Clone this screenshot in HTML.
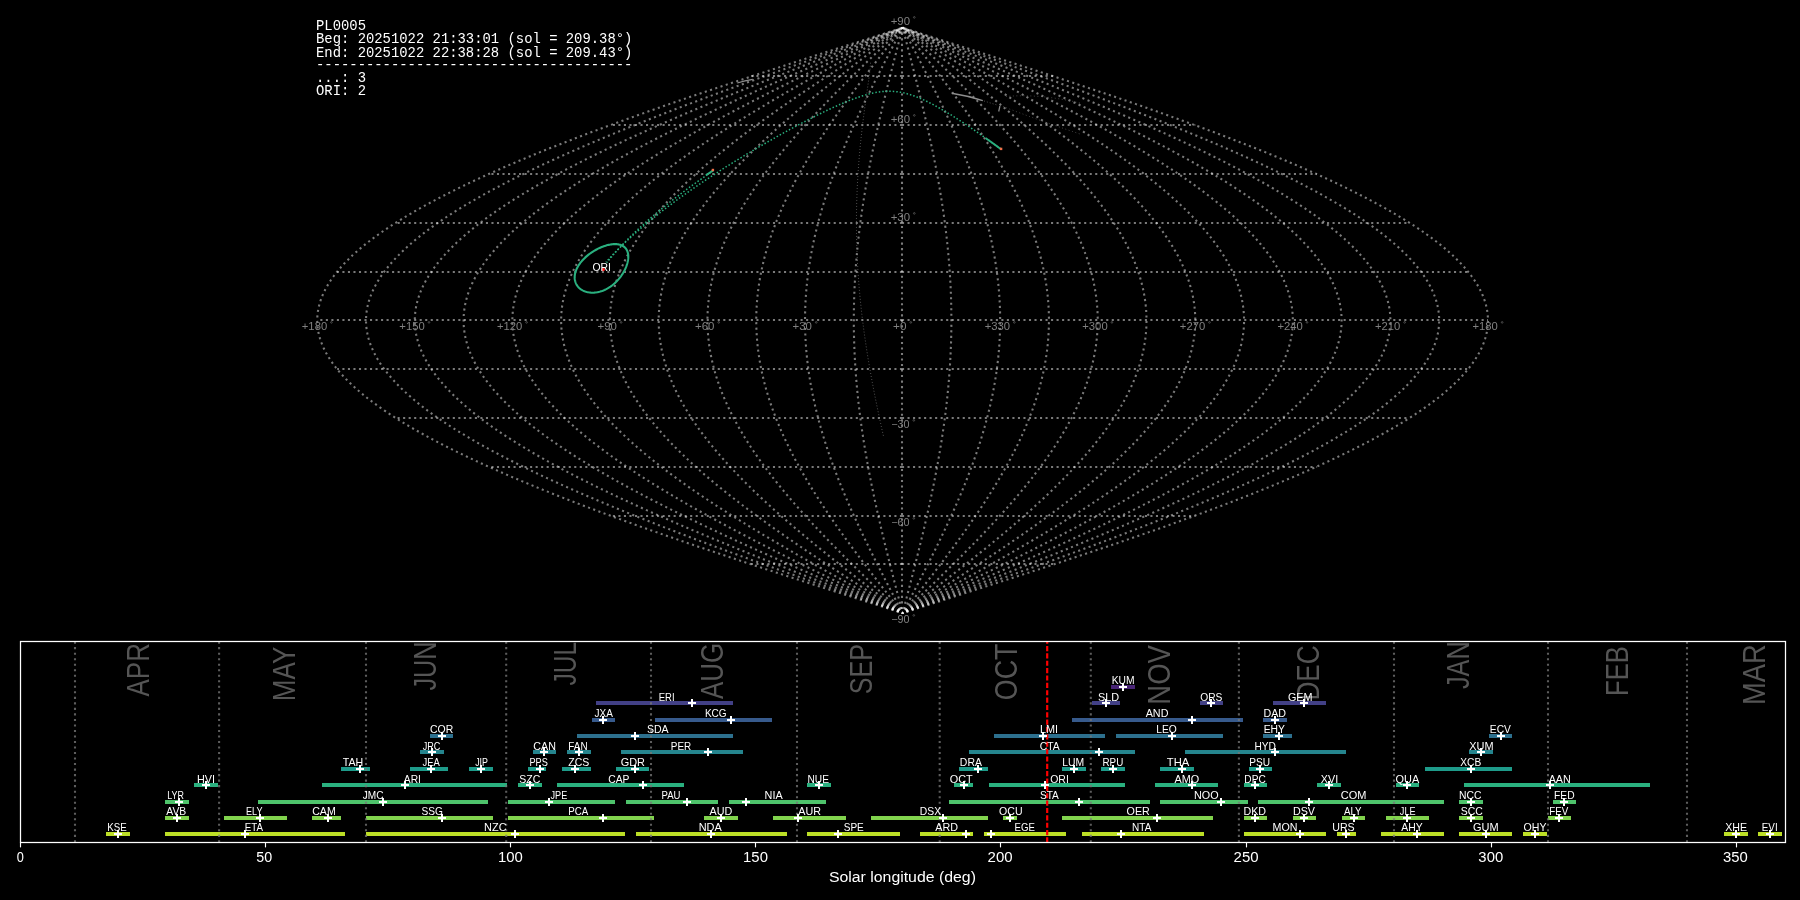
<!DOCTYPE html>
<html><head><meta charset="utf-8"><title>PL0005</title>
<style>html,body{margin:0;padding:0;background:#000;overflow:hidden;width:1800px;height:900px;font-family:"Liberation Sans",sans-serif}svg{display:block;will-change:transform}</style>
</head><body><svg width="1800" height="900" viewBox="0 0 1800 900"><rect width="1800" height="900" fill="#000000"/><g fill="none" stroke="#ffffff" stroke-opacity="0.48" stroke-dasharray="2.08 3.44" stroke-width="2.08" stroke-linecap="butt"><path stroke-dashoffset="1.4" d="M902.60,613.08 L907.71,611.45 L912.82,609.83 L917.92,608.20 L923.03,606.58 L928.13,604.95 L933.24,603.32 L938.34,601.70 L943.43,600.07 L948.53,598.45 L953.62,596.82 L958.70,595.19 L963.79,593.57 L968.86,591.94 L973.94,590.32 L979.00,588.69 L984.07,587.06 L989.12,585.44 L994.17,583.81 L999.21,582.19 L1004.25,580.56 L1009.27,578.93 L1014.29,577.31 L1019.30,575.68 L1024.30,574.06 L1029.30,572.43 L1034.28,570.80 L1039.25,569.18 L1044.21,567.55 L1049.16,565.93 L1054.10,564.30 L1059.03,562.67 L1063.95,561.05 L1068.85,559.42 L1073.74,557.80 L1078.62,556.17 L1083.49,554.54 L1088.34,552.92 L1093.17,551.29 L1098.00,549.67 L1102.80,548.04 L1107.60,546.41 L1112.37,544.79 L1117.14,543.16 L1121.88,541.54 L1126.61,539.91 L1131.32,538.28 L1136.01,536.66 L1140.69,535.03 L1145.34,533.41 L1149.98,531.78 L1154.60,530.15 L1159.20,528.53 L1163.79,526.90 L1168.35,525.28 L1172.89,523.65 L1177.41,522.02 L1181.91,520.40 L1186.39,518.77 L1190.85,517.15 L1195.28,515.52 L1199.69,513.89 L1204.08,512.27 L1208.45,510.64 L1212.79,509.02 L1217.11,507.39 L1221.41,505.76 L1225.68,504.14 L1229.93,502.51 L1234.15,500.89 L1238.35,499.26 L1242.52,497.63 L1246.67,496.01 L1250.79,494.38 L1254.88,492.76 L1258.94,491.13 L1262.98,489.50 L1267.00,487.88 L1270.98,486.25 L1274.93,484.63 L1278.86,483.00 L1282.76,481.37 L1286.63,479.75 L1290.47,478.12 L1294.28,476.50 L1298.06,474.87 L1301.81,473.24 L1305.54,471.62 L1309.23,469.99 L1312.88,468.37 L1316.51,466.74 L1320.11,465.11 L1323.67,463.49 L1327.21,461.86 L1330.71,460.24 L1334.17,458.61 L1337.61,456.98 L1341.01,455.36 L1344.38,453.73 L1347.71,452.11 L1351.01,450.48 L1354.28,448.85 L1357.51,447.23 L1360.71,445.60 L1363.87,443.98 L1367.00,442.35 L1370.09,440.72 L1373.15,439.10 L1376.17,437.47 L1379.15,435.85 L1382.10,434.22 L1385.01,432.59 L1387.89,430.97 L1390.72,429.34 L1393.52,427.72 L1396.29,426.09 L1399.01,424.46 L1401.70,422.84 L1404.35,421.21 L1406.96,419.59 L1409.54,417.96 L1412.07,416.33 L1414.57,414.71 L1417.02,413.08 L1419.44,411.46 L1421.82,409.83 L1424.16,408.20 L1426.46,406.58 L1428.72,404.95 L1430.94,403.33 L1433.12,401.70 L1435.25,400.07 L1437.35,398.45 L1439.41,396.82 L1441.43,395.20 L1443.40,393.57 L1445.34,391.94 L1447.23,390.32 L1449.08,388.69 L1450.89,387.07 L1452.66,385.44 L1454.38,383.81 L1456.07,382.19 L1457.71,380.56 L1459.31,378.94 L1460.87,377.31 L1462.38,375.68 L1463.85,374.06 L1465.28,372.43 L1466.67,370.81 L1468.01,369.18 L1469.31,367.55 L1470.57,365.93 L1471.79,364.30 L1472.96,362.68 L1474.08,361.05 L1475.17,359.42 L1476.21,357.80 L1477.21,356.17 L1478.16,354.55 L1479.07,352.92 L1479.93,351.29 L1480.75,349.67 L1481.53,348.04 L1482.26,346.42 L1482.95,344.79 L1483.60,343.16 L1484.20,341.54 L1484.75,339.91 L1485.27,338.29 L1485.73,336.66 L1486.16,335.03 L1486.53,333.41 L1486.87,331.78 L1487.16,330.16 L1487.40,328.53 L1487.60,326.90 L1487.76,325.28 L1487.87,323.65 L1487.94,322.03 L1487.96,320.40 L1487.94,318.77 L1487.87,317.15 L1487.76,315.52 L1487.60,313.90 L1487.40,312.27 L1487.16,310.64 L1486.87,309.02 L1486.53,307.39 L1486.16,305.77 L1485.73,304.14 L1485.27,302.51 L1484.75,300.89 L1484.20,299.26 L1483.60,297.64 L1482.95,296.01 L1482.26,294.38 L1481.53,292.76 L1480.75,291.13 L1479.93,289.51 L1479.07,287.88 L1478.16,286.25 L1477.21,284.63 L1476.21,283.00 L1475.17,281.38 L1474.08,279.75 L1472.96,278.12 L1471.79,276.50 L1470.57,274.87 L1469.31,273.25 L1468.01,271.62 L1466.67,269.99 L1465.28,268.37 L1463.85,266.74 L1462.38,265.12 L1460.87,263.49 L1459.31,261.86 L1457.71,260.24 L1456.07,258.61 L1454.38,256.99 L1452.66,255.36 L1450.89,253.73 L1449.08,252.11 L1447.23,250.48 L1445.34,248.86 L1443.40,247.23 L1441.43,245.60 L1439.41,243.98 L1437.35,242.35 L1435.25,240.73 L1433.12,239.10 L1430.94,237.47 L1428.72,235.85 L1426.46,234.22 L1424.16,232.60 L1421.82,230.97 L1419.44,229.34 L1417.02,227.72 L1414.57,226.09 L1412.07,224.47 L1409.54,222.84 L1406.96,221.21 L1404.35,219.59 L1401.70,217.96 L1399.01,216.34 L1396.29,214.71 L1393.52,213.08 L1390.72,211.46 L1387.89,209.83 L1385.01,208.21 L1382.10,206.58 L1379.15,204.95 L1376.17,203.33 L1373.15,201.70 L1370.09,200.08 L1367.00,198.45 L1363.87,196.82 L1360.71,195.20 L1357.51,193.57 L1354.28,191.95 L1351.01,190.32 L1347.71,188.69 L1344.38,187.07 L1341.01,185.44 L1337.61,183.82 L1334.17,182.19 L1330.71,180.56 L1327.21,178.94 L1323.67,177.31 L1320.11,175.69 L1316.51,174.06 L1312.88,172.43 L1309.23,170.81 L1305.54,169.18 L1301.81,167.56 L1298.06,165.93 L1294.28,164.30 L1290.47,162.68 L1286.63,161.05 L1282.76,159.43 L1278.86,157.80 L1274.93,156.17 L1270.98,154.55 L1267.00,152.92 L1262.98,151.30 L1258.94,149.67 L1254.88,148.04 L1250.79,146.42 L1246.67,144.79 L1242.52,143.17 L1238.35,141.54 L1234.15,139.91 L1229.93,138.29 L1225.68,136.66 L1221.41,135.04 L1217.11,133.41 L1212.79,131.78 L1208.45,130.16 L1204.08,128.53 L1199.69,126.91 L1195.28,125.28 L1190.85,123.65 L1186.39,122.03 L1181.91,120.40 L1177.41,118.78 L1172.89,117.15 L1168.35,115.52 L1163.79,113.90 L1159.20,112.27 L1154.60,110.65 L1149.98,109.02 L1145.34,107.39 L1140.69,105.77 L1136.01,104.14 L1131.32,102.52 L1126.61,100.89 L1121.88,99.26 L1117.14,97.64 L1112.37,96.01 L1107.60,94.39 L1102.80,92.76 L1098.00,91.13 L1093.17,89.51 L1088.34,87.88 L1083.49,86.26 L1078.62,84.63 L1073.74,83.00 L1068.85,81.38 L1063.95,79.75 L1059.03,78.13 L1054.10,76.50 L1049.16,74.87 L1044.21,73.25 L1039.25,71.62 L1034.28,70.00 L1029.30,68.37 L1024.30,66.74 L1019.30,65.12 L1014.29,63.49 L1009.27,61.87 L1004.25,60.24 L999.21,58.61 L994.17,56.99 L989.12,55.36 L984.07,53.74 L979.00,52.11 L973.94,50.48 L968.86,48.86 L963.79,47.23 L958.70,45.61 L953.62,43.98 L948.53,42.35 L943.43,40.73 L938.34,39.10 L933.24,37.48 L928.13,35.85 L923.03,34.22 L917.92,32.60 L912.82,30.97 L907.71,29.35 L902.60,27.72"/><path stroke-dashoffset="1.4" d="M902.60,613.08 L907.28,611.45 L911.96,609.83 L916.65,608.20 L921.33,606.58 L926.01,604.95 L930.68,603.32 L935.36,601.70 L940.03,600.07 L944.70,598.45 L949.37,596.82 L954.03,595.19 L958.69,593.57 L963.34,591.94 L967.99,590.32 L972.64,588.69 L977.28,587.06 L981.91,585.44 L986.54,583.81 L991.16,582.19 L995.78,580.56 L1000.38,578.93 L1004.98,577.31 L1009.58,575.68 L1014.16,574.06 L1018.74,572.43 L1023.30,570.80 L1027.86,569.18 L1032.41,567.55 L1036.95,565.93 L1041.48,564.30 L1045.99,562.67 L1050.50,561.05 L1055.00,559.42 L1059.48,557.80 L1063.95,556.17 L1068.41,554.54 L1072.86,552.92 L1077.29,551.29 L1081.71,549.67 L1086.12,548.04 L1090.51,546.41 L1094.89,544.79 L1099.26,543.16 L1103.61,541.54 L1107.94,539.91 L1112.26,538.28 L1116.56,536.66 L1120.85,535.03 L1125.12,533.41 L1129.37,531.78 L1133.60,530.15 L1137.82,528.53 L1142.02,526.90 L1146.20,525.28 L1150.37,523.65 L1154.51,522.02 L1158.63,520.40 L1162.74,518.77 L1166.82,517.15 L1170.89,515.52 L1174.93,513.89 L1178.96,512.27 L1182.96,510.64 L1186.94,509.02 L1190.90,507.39 L1194.84,505.76 L1198.76,504.14 L1202.65,502.51 L1206.52,500.89 L1210.37,499.26 L1214.19,497.63 L1217.99,496.01 L1221.77,494.38 L1225.52,492.76 L1229.25,491.13 L1232.95,489.50 L1236.63,487.88 L1240.28,486.25 L1243.91,484.63 L1247.51,483.00 L1251.08,481.37 L1254.63,479.75 L1258.15,478.12 L1261.64,476.50 L1265.11,474.87 L1268.55,473.24 L1271.96,471.62 L1275.34,469.99 L1278.69,468.37 L1282.02,466.74 L1285.32,465.11 L1288.58,463.49 L1291.82,461.86 L1295.03,460.24 L1298.21,458.61 L1301.36,456.98 L1304.47,455.36 L1307.56,453.73 L1310.62,452.11 L1313.64,450.48 L1316.64,448.85 L1319.60,447.23 L1322.53,445.60 L1325.43,443.98 L1328.30,442.35 L1331.13,440.72 L1333.93,439.10 L1336.70,437.47 L1339.44,435.85 L1342.14,434.22 L1344.81,432.59 L1347.44,430.97 L1350.05,429.34 L1352.61,427.72 L1355.15,426.09 L1357.65,424.46 L1360.11,422.84 L1362.54,421.21 L1364.93,419.59 L1367.29,417.96 L1369.62,416.33 L1371.90,414.71 L1374.16,413.08 L1376.37,411.46 L1378.55,409.83 L1380.70,408.20 L1382.80,406.58 L1384.87,404.95 L1386.91,403.33 L1388.91,401.70 L1390.87,400.07 L1392.79,398.45 L1394.68,396.82 L1396.52,395.20 L1398.34,393.57 L1400.11,391.94 L1401.84,390.32 L1403.54,388.69 L1405.20,387.07 L1406.82,385.44 L1408.40,383.81 L1409.95,382.19 L1411.45,380.56 L1412.92,378.94 L1414.35,377.31 L1415.73,375.68 L1417.08,374.06 L1418.39,372.43 L1419.66,370.81 L1420.90,369.18 L1422.09,367.55 L1423.24,365.93 L1424.35,364.30 L1425.43,362.68 L1426.46,361.05 L1427.45,359.42 L1428.41,357.80 L1429.32,356.17 L1430.19,354.55 L1431.03,352.92 L1431.82,351.29 L1432.57,349.67 L1433.29,348.04 L1433.96,346.42 L1434.59,344.79 L1435.18,343.16 L1435.73,341.54 L1436.24,339.91 L1436.71,338.29 L1437.14,336.66 L1437.53,335.03 L1437.87,333.41 L1438.18,331.78 L1438.44,330.16 L1438.67,328.53 L1438.85,326.90 L1439.00,325.28 L1439.10,323.65 L1439.16,322.03 L1439.18,320.40 L1439.16,318.77 L1439.10,317.15 L1439.00,315.52 L1438.85,313.90 L1438.67,312.27 L1438.44,310.64 L1438.18,309.02 L1437.87,307.39 L1437.53,305.77 L1437.14,304.14 L1436.71,302.51 L1436.24,300.89 L1435.73,299.26 L1435.18,297.64 L1434.59,296.01 L1433.96,294.38 L1433.29,292.76 L1432.57,291.13 L1431.82,289.51 L1431.03,287.88 L1430.19,286.25 L1429.32,284.63 L1428.41,283.00 L1427.45,281.38 L1426.46,279.75 L1425.43,278.12 L1424.35,276.50 L1423.24,274.87 L1422.09,273.25 L1420.90,271.62 L1419.66,269.99 L1418.39,268.37 L1417.08,266.74 L1415.73,265.12 L1414.35,263.49 L1412.92,261.86 L1411.45,260.24 L1409.95,258.61 L1408.40,256.99 L1406.82,255.36 L1405.20,253.73 L1403.54,252.11 L1401.84,250.48 L1400.11,248.86 L1398.34,247.23 L1396.52,245.60 L1394.68,243.98 L1392.79,242.35 L1390.87,240.73 L1388.91,239.10 L1386.91,237.47 L1384.87,235.85 L1382.80,234.22 L1380.70,232.60 L1378.55,230.97 L1376.37,229.34 L1374.16,227.72 L1371.90,226.09 L1369.62,224.47 L1367.29,222.84 L1364.93,221.21 L1362.54,219.59 L1360.11,217.96 L1357.65,216.34 L1355.15,214.71 L1352.61,213.08 L1350.05,211.46 L1347.44,209.83 L1344.81,208.21 L1342.14,206.58 L1339.44,204.95 L1336.70,203.33 L1333.93,201.70 L1331.13,200.08 L1328.30,198.45 L1325.43,196.82 L1322.53,195.20 L1319.60,193.57 L1316.64,191.95 L1313.64,190.32 L1310.62,188.69 L1307.56,187.07 L1304.47,185.44 L1301.36,183.82 L1298.21,182.19 L1295.03,180.56 L1291.82,178.94 L1288.58,177.31 L1285.32,175.69 L1282.02,174.06 L1278.69,172.43 L1275.34,170.81 L1271.96,169.18 L1268.55,167.56 L1265.11,165.93 L1261.64,164.30 L1258.15,162.68 L1254.63,161.05 L1251.08,159.43 L1247.51,157.80 L1243.91,156.17 L1240.28,154.55 L1236.63,152.92 L1232.95,151.30 L1229.25,149.67 L1225.52,148.04 L1221.77,146.42 L1217.99,144.79 L1214.19,143.17 L1210.37,141.54 L1206.52,139.91 L1202.65,138.29 L1198.76,136.66 L1194.84,135.04 L1190.90,133.41 L1186.94,131.78 L1182.96,130.16 L1178.96,128.53 L1174.93,126.91 L1170.89,125.28 L1166.82,123.65 L1162.74,122.03 L1158.63,120.40 L1154.51,118.78 L1150.37,117.15 L1146.20,115.52 L1142.02,113.90 L1137.82,112.27 L1133.60,110.65 L1129.37,109.02 L1125.12,107.39 L1120.85,105.77 L1116.56,104.14 L1112.26,102.52 L1107.94,100.89 L1103.61,99.26 L1099.26,97.64 L1094.89,96.01 L1090.51,94.39 L1086.12,92.76 L1081.71,91.13 L1077.29,89.51 L1072.86,87.88 L1068.41,86.26 L1063.95,84.63 L1059.48,83.00 L1055.00,81.38 L1050.50,79.75 L1045.99,78.13 L1041.48,76.50 L1036.95,74.87 L1032.41,73.25 L1027.86,71.62 L1023.30,70.00 L1018.74,68.37 L1014.16,66.74 L1009.58,65.12 L1004.98,63.49 L1000.38,61.87 L995.78,60.24 L991.16,58.61 L986.54,56.99 L981.91,55.36 L977.28,53.74 L972.64,52.11 L967.99,50.48 L963.34,48.86 L958.69,47.23 L954.03,45.61 L949.37,43.98 L944.70,42.35 L940.03,40.73 L935.36,39.10 L930.68,37.48 L926.01,35.85 L921.33,34.22 L916.65,32.60 L911.96,30.97 L907.28,29.35 L902.60,27.72"/><path stroke-dashoffset="1.4" d="M902.60,613.08 L906.86,611.45 L911.11,609.83 L915.37,608.20 L919.62,606.58 L923.88,604.95 L928.13,603.32 L932.38,601.70 L936.63,600.07 L940.87,598.45 L945.11,596.82 L949.35,595.19 L953.59,593.57 L957.82,591.94 L962.05,590.32 L966.27,588.69 L970.49,587.06 L974.70,585.44 L978.91,583.81 L983.11,582.19 L987.31,580.56 L991.49,578.93 L995.68,577.31 L999.85,575.68 L1004.02,574.06 L1008.18,572.43 L1012.33,570.80 L1016.47,569.18 L1020.61,567.55 L1024.74,565.93 L1028.85,564.30 L1032.96,562.67 L1037.06,561.05 L1041.14,559.42 L1045.22,557.80 L1049.28,556.17 L1053.34,554.54 L1057.38,552.92 L1061.41,551.29 L1065.43,549.67 L1069.44,548.04 L1073.43,546.41 L1077.41,544.79 L1081.38,543.16 L1085.33,541.54 L1089.27,539.91 L1093.20,538.28 L1097.11,536.66 L1101.01,535.03 L1104.89,533.41 L1108.75,531.78 L1112.60,530.15 L1116.44,528.53 L1120.26,526.90 L1124.06,525.28 L1127.84,523.65 L1131.61,522.02 L1135.36,520.40 L1139.09,518.77 L1142.80,517.15 L1146.50,515.52 L1150.18,513.89 L1153.84,512.27 L1157.47,510.64 L1161.09,509.02 L1164.69,507.39 L1168.27,505.76 L1171.83,504.14 L1175.37,502.51 L1178.89,500.89 L1182.39,499.26 L1185.87,497.63 L1189.32,496.01 L1192.75,494.38 L1196.17,492.76 L1199.55,491.13 L1202.92,489.50 L1206.26,487.88 L1209.58,486.25 L1212.88,484.63 L1216.15,483.00 L1219.40,481.37 L1222.63,479.75 L1225.83,478.12 L1229.00,476.50 L1232.15,474.87 L1235.28,473.24 L1238.38,471.62 L1241.45,469.99 L1244.50,468.37 L1247.53,466.74 L1250.52,465.11 L1253.49,463.49 L1256.44,461.86 L1259.35,460.24 L1262.24,458.61 L1265.11,456.98 L1267.94,455.36 L1270.75,453.73 L1273.53,452.11 L1276.28,450.48 L1279.00,448.85 L1281.69,447.23 L1284.36,445.60 L1286.99,443.98 L1289.60,442.35 L1292.17,440.72 L1294.72,439.10 L1297.24,437.47 L1299.73,435.85 L1302.18,434.22 L1304.61,432.59 L1307.00,430.97 L1309.37,429.34 L1311.70,427.72 L1314.01,426.09 L1316.28,424.46 L1318.52,422.84 L1320.73,421.21 L1322.90,419.59 L1325.05,417.96 L1327.16,416.33 L1329.24,414.71 L1331.29,413.08 L1333.30,411.46 L1335.28,409.83 L1337.23,408.20 L1339.15,406.58 L1341.03,404.95 L1342.88,403.33 L1344.70,401.70 L1346.48,400.07 L1348.23,398.45 L1349.94,396.82 L1351.62,395.20 L1353.27,393.57 L1354.88,391.94 L1356.46,390.32 L1358.00,388.69 L1359.51,387.07 L1360.98,385.44 L1362.42,383.81 L1363.82,382.19 L1365.19,380.56 L1366.53,378.94 L1367.82,377.31 L1369.09,375.68 L1370.31,374.06 L1371.50,372.43 L1372.66,370.81 L1373.78,369.18 L1374.86,367.55 L1375.91,365.93 L1376.92,364.30 L1377.90,362.68 L1378.84,361.05 L1379.74,359.42 L1380.61,357.80 L1381.44,356.17 L1382.23,354.55 L1382.99,352.92 L1383.71,351.29 L1384.39,349.67 L1385.04,348.04 L1385.65,346.42 L1386.23,344.79 L1386.76,343.16 L1387.26,341.54 L1387.73,339.91 L1388.15,338.29 L1388.54,336.66 L1388.90,335.03 L1389.21,333.41 L1389.49,331.78 L1389.73,330.16 L1389.94,328.53 L1390.10,326.90 L1390.23,325.28 L1390.33,323.65 L1390.38,322.03 L1390.40,320.40 L1390.38,318.77 L1390.33,317.15 L1390.23,315.52 L1390.10,313.90 L1389.94,312.27 L1389.73,310.64 L1389.49,309.02 L1389.21,307.39 L1388.90,305.77 L1388.54,304.14 L1388.15,302.51 L1387.73,300.89 L1387.26,299.26 L1386.76,297.64 L1386.23,296.01 L1385.65,294.38 L1385.04,292.76 L1384.39,291.13 L1383.71,289.51 L1382.99,287.88 L1382.23,286.25 L1381.44,284.63 L1380.61,283.00 L1379.74,281.38 L1378.84,279.75 L1377.90,278.12 L1376.92,276.50 L1375.91,274.87 L1374.86,273.25 L1373.78,271.62 L1372.66,269.99 L1371.50,268.37 L1370.31,266.74 L1369.09,265.12 L1367.82,263.49 L1366.53,261.86 L1365.19,260.24 L1363.82,258.61 L1362.42,256.99 L1360.98,255.36 L1359.51,253.73 L1358.00,252.11 L1356.46,250.48 L1354.88,248.86 L1353.27,247.23 L1351.62,245.60 L1349.94,243.98 L1348.23,242.35 L1346.48,240.73 L1344.70,239.10 L1342.88,237.47 L1341.03,235.85 L1339.15,234.22 L1337.23,232.60 L1335.28,230.97 L1333.30,229.34 L1331.29,227.72 L1329.24,226.09 L1327.16,224.47 L1325.05,222.84 L1322.90,221.21 L1320.73,219.59 L1318.52,217.96 L1316.28,216.34 L1314.01,214.71 L1311.70,213.08 L1309.37,211.46 L1307.00,209.83 L1304.61,208.21 L1302.18,206.58 L1299.73,204.95 L1297.24,203.33 L1294.72,201.70 L1292.17,200.08 L1289.60,198.45 L1286.99,196.82 L1284.36,195.20 L1281.69,193.57 L1279.00,191.95 L1276.28,190.32 L1273.53,188.69 L1270.75,187.07 L1267.94,185.44 L1265.11,183.82 L1262.24,182.19 L1259.35,180.56 L1256.44,178.94 L1253.49,177.31 L1250.52,175.69 L1247.53,174.06 L1244.50,172.43 L1241.45,170.81 L1238.38,169.18 L1235.28,167.56 L1232.15,165.93 L1229.00,164.30 L1225.83,162.68 L1222.63,161.05 L1219.40,159.43 L1216.15,157.80 L1212.88,156.17 L1209.58,154.55 L1206.26,152.92 L1202.92,151.30 L1199.55,149.67 L1196.17,148.04 L1192.75,146.42 L1189.32,144.79 L1185.87,143.17 L1182.39,141.54 L1178.89,139.91 L1175.37,138.29 L1171.83,136.66 L1168.27,135.04 L1164.69,133.41 L1161.09,131.78 L1157.47,130.16 L1153.84,128.53 L1150.18,126.91 L1146.50,125.28 L1142.80,123.65 L1139.09,122.03 L1135.36,120.40 L1131.61,118.78 L1127.84,117.15 L1124.06,115.52 L1120.26,113.90 L1116.44,112.27 L1112.60,110.65 L1108.75,109.02 L1104.89,107.39 L1101.01,105.77 L1097.11,104.14 L1093.20,102.52 L1089.27,100.89 L1085.33,99.26 L1081.38,97.64 L1077.41,96.01 L1073.43,94.39 L1069.44,92.76 L1065.43,91.13 L1061.41,89.51 L1057.38,87.88 L1053.34,86.26 L1049.28,84.63 L1045.22,83.00 L1041.14,81.38 L1037.06,79.75 L1032.96,78.13 L1028.85,76.50 L1024.74,74.87 L1020.61,73.25 L1016.47,71.62 L1012.33,70.00 L1008.18,68.37 L1004.02,66.74 L999.85,65.12 L995.68,63.49 L991.49,61.87 L987.31,60.24 L983.11,58.61 L978.91,56.99 L974.70,55.36 L970.49,53.74 L966.27,52.11 L962.05,50.48 L957.82,48.86 L953.59,47.23 L949.35,45.61 L945.11,43.98 L940.87,42.35 L936.63,40.73 L932.38,39.10 L928.13,37.48 L923.88,35.85 L919.62,34.22 L915.37,32.60 L911.11,30.97 L906.86,29.35 L902.60,27.72"/><path stroke-dashoffset="1.4" d="M902.60,613.08 L906.43,611.45 L910.26,609.83 L914.09,608.20 L917.92,606.58 L921.75,604.95 L925.58,603.32 L929.40,601.70 L933.22,600.07 L937.05,598.45 L940.86,596.82 L944.68,595.19 L948.49,593.57 L952.30,591.94 L956.10,590.32 L959.90,588.69 L963.70,587.06 L967.49,585.44 L971.28,583.81 L975.06,582.19 L978.84,580.56 L982.61,578.93 L986.37,577.31 L990.13,575.68 L993.88,574.06 L997.62,572.43 L1001.36,570.80 L1005.09,569.18 L1008.81,567.55 L1012.52,565.93 L1016.23,564.30 L1019.92,562.67 L1023.61,561.05 L1027.29,559.42 L1030.96,557.80 L1034.62,556.17 L1038.26,554.54 L1041.90,552.92 L1045.53,551.29 L1049.15,549.67 L1052.75,548.04 L1056.35,546.41 L1059.93,544.79 L1063.50,543.16 L1067.06,541.54 L1070.61,539.91 L1074.14,538.28 L1077.66,536.66 L1081.17,535.03 L1084.66,533.41 L1088.14,531.78 L1091.60,530.15 L1095.05,528.53 L1098.49,526.90 L1101.91,525.28 L1105.32,523.65 L1108.71,522.02 L1112.08,520.40 L1115.44,518.77 L1118.78,517.15 L1122.11,515.52 L1125.42,513.89 L1128.71,512.27 L1131.99,510.64 L1135.25,509.02 L1138.49,507.39 L1141.71,505.76 L1144.91,504.14 L1148.10,502.51 L1151.26,500.89 L1154.41,499.26 L1157.54,497.63 L1160.65,496.01 L1163.74,494.38 L1166.81,492.76 L1169.86,491.13 L1172.89,489.50 L1175.90,487.88 L1178.88,486.25 L1181.85,484.63 L1184.80,483.00 L1187.72,481.37 L1190.62,479.75 L1193.50,478.12 L1196.36,476.50 L1199.20,474.87 L1202.01,473.24 L1204.80,471.62 L1207.57,469.99 L1210.31,468.37 L1213.03,466.74 L1215.73,465.11 L1218.40,463.49 L1221.05,461.86 L1223.68,460.24 L1226.28,458.61 L1228.86,456.98 L1231.41,455.36 L1233.93,453.73 L1236.43,452.11 L1238.91,450.48 L1241.36,448.85 L1243.78,447.23 L1246.18,445.60 L1248.55,443.98 L1250.90,442.35 L1253.22,440.72 L1255.51,439.10 L1257.77,437.47 L1260.01,435.85 L1262.22,434.22 L1264.41,432.59 L1266.56,430.97 L1268.69,429.34 L1270.79,427.72 L1272.87,426.09 L1274.91,424.46 L1276.93,422.84 L1278.91,421.21 L1280.87,419.59 L1282.80,417.96 L1284.70,416.33 L1286.58,414.71 L1288.42,413.08 L1290.23,411.46 L1292.02,409.83 L1293.77,408.20 L1295.49,406.58 L1297.19,404.95 L1298.85,403.33 L1300.49,401.70 L1302.09,400.07 L1303.66,398.45 L1305.21,396.82 L1306.72,395.20 L1308.20,393.57 L1309.65,391.94 L1311.07,390.32 L1312.46,388.69 L1313.82,387.07 L1315.14,385.44 L1316.44,383.81 L1317.70,382.19 L1318.93,380.56 L1320.13,378.94 L1321.30,377.31 L1322.44,375.68 L1323.54,374.06 L1324.61,372.43 L1325.65,370.81 L1326.66,369.18 L1327.64,367.55 L1328.58,365.93 L1329.49,364.30 L1330.37,362.68 L1331.21,361.05 L1332.03,359.42 L1332.81,357.80 L1333.55,356.17 L1334.27,354.55 L1334.95,352.92 L1335.60,351.29 L1336.21,349.67 L1336.80,348.04 L1337.35,346.42 L1337.86,344.79 L1338.35,343.16 L1338.80,341.54 L1339.22,339.91 L1339.60,338.29 L1339.95,336.66 L1340.27,335.03 L1340.55,333.41 L1340.80,331.78 L1341.02,330.16 L1341.20,328.53 L1341.35,326.90 L1341.47,325.28 L1341.55,323.65 L1341.60,322.03 L1341.62,320.40 L1341.60,318.77 L1341.55,317.15 L1341.47,315.52 L1341.35,313.90 L1341.20,312.27 L1341.02,310.64 L1340.80,309.02 L1340.55,307.39 L1340.27,305.77 L1339.95,304.14 L1339.60,302.51 L1339.22,300.89 L1338.80,299.26 L1338.35,297.64 L1337.86,296.01 L1337.35,294.38 L1336.80,292.76 L1336.21,291.13 L1335.60,289.51 L1334.95,287.88 L1334.27,286.25 L1333.55,284.63 L1332.81,283.00 L1332.03,281.38 L1331.21,279.75 L1330.37,278.12 L1329.49,276.50 L1328.58,274.87 L1327.64,273.25 L1326.66,271.62 L1325.65,269.99 L1324.61,268.37 L1323.54,266.74 L1322.44,265.12 L1321.30,263.49 L1320.13,261.86 L1318.93,260.24 L1317.70,258.61 L1316.44,256.99 L1315.14,255.36 L1313.82,253.73 L1312.46,252.11 L1311.07,250.48 L1309.65,248.86 L1308.20,247.23 L1306.72,245.60 L1305.21,243.98 L1303.66,242.35 L1302.09,240.73 L1300.49,239.10 L1298.85,237.47 L1297.19,235.85 L1295.49,234.22 L1293.77,232.60 L1292.02,230.97 L1290.23,229.34 L1288.42,227.72 L1286.58,226.09 L1284.70,224.47 L1282.80,222.84 L1280.87,221.21 L1278.91,219.59 L1276.93,217.96 L1274.91,216.34 L1272.87,214.71 L1270.79,213.08 L1268.69,211.46 L1266.56,209.83 L1264.41,208.21 L1262.22,206.58 L1260.01,204.95 L1257.77,203.33 L1255.51,201.70 L1253.22,200.08 L1250.90,198.45 L1248.55,196.82 L1246.18,195.20 L1243.78,193.57 L1241.36,191.95 L1238.91,190.32 L1236.43,188.69 L1233.93,187.07 L1231.41,185.44 L1228.86,183.82 L1226.28,182.19 L1223.68,180.56 L1221.05,178.94 L1218.40,177.31 L1215.73,175.69 L1213.03,174.06 L1210.31,172.43 L1207.57,170.81 L1204.80,169.18 L1202.01,167.56 L1199.20,165.93 L1196.36,164.30 L1193.50,162.68 L1190.62,161.05 L1187.72,159.43 L1184.80,157.80 L1181.85,156.17 L1178.88,154.55 L1175.90,152.92 L1172.89,151.30 L1169.86,149.67 L1166.81,148.04 L1163.74,146.42 L1160.65,144.79 L1157.54,143.17 L1154.41,141.54 L1151.26,139.91 L1148.10,138.29 L1144.91,136.66 L1141.71,135.04 L1138.49,133.41 L1135.25,131.78 L1131.99,130.16 L1128.71,128.53 L1125.42,126.91 L1122.11,125.28 L1118.78,123.65 L1115.44,122.03 L1112.08,120.40 L1108.71,118.78 L1105.32,117.15 L1101.91,115.52 L1098.49,113.90 L1095.05,112.27 L1091.60,110.65 L1088.14,109.02 L1084.66,107.39 L1081.17,105.77 L1077.66,104.14 L1074.14,102.52 L1070.61,100.89 L1067.06,99.26 L1063.50,97.64 L1059.93,96.01 L1056.35,94.39 L1052.75,92.76 L1049.15,91.13 L1045.53,89.51 L1041.90,87.88 L1038.26,86.26 L1034.62,84.63 L1030.96,83.00 L1027.29,81.38 L1023.61,79.75 L1019.92,78.13 L1016.23,76.50 L1012.52,74.87 L1008.81,73.25 L1005.09,71.62 L1001.36,70.00 L997.62,68.37 L993.88,66.74 L990.13,65.12 L986.37,63.49 L982.61,61.87 L978.84,60.24 L975.06,58.61 L971.28,56.99 L967.49,55.36 L963.70,53.74 L959.90,52.11 L956.10,50.48 L952.30,48.86 L948.49,47.23 L944.68,45.61 L940.86,43.98 L937.05,42.35 L933.22,40.73 L929.40,39.10 L925.58,37.48 L921.75,35.85 L917.92,34.22 L914.09,32.60 L910.26,30.97 L906.43,29.35 L902.60,27.72"/><path stroke-dashoffset="1.4" d="M902.60,613.08 L906.01,611.45 L909.41,609.83 L912.82,608.20 L916.22,606.58 L919.62,604.95 L923.02,603.32 L926.42,601.70 L929.82,600.07 L933.22,598.45 L936.61,596.82 L940.00,595.19 L943.39,593.57 L946.78,591.94 L950.16,590.32 L953.54,588.69 L956.91,587.06 L960.28,585.44 L963.65,583.81 L967.01,582.19 L970.36,580.56 L973.72,578.93 L977.06,577.31 L980.40,575.68 L983.74,574.06 L987.06,572.43 L990.38,570.80 L993.70,569.18 L997.01,567.55 L1000.31,565.93 L1003.60,564.30 L1006.89,562.67 L1010.16,561.05 L1013.43,559.42 L1016.70,557.80 L1019.95,556.17 L1023.19,554.54 L1026.42,552.92 L1029.65,551.29 L1032.86,549.67 L1036.07,548.04 L1039.26,546.41 L1042.45,544.79 L1045.62,543.16 L1048.79,541.54 L1051.94,539.91 L1055.08,538.28 L1058.21,536.66 L1061.32,535.03 L1064.43,533.41 L1067.52,531.78 L1070.60,530.15 L1073.67,528.53 L1076.72,526.90 L1079.77,525.28 L1082.79,523.65 L1085.81,522.02 L1088.81,520.40 L1091.79,518.77 L1094.76,517.15 L1097.72,515.52 L1100.66,513.89 L1103.59,512.27 L1106.50,510.64 L1109.40,509.02 L1112.28,507.39 L1115.14,505.76 L1117.99,504.14 L1120.82,502.51 L1123.63,500.89 L1126.43,499.26 L1129.21,497.63 L1131.98,496.01 L1134.72,494.38 L1137.45,492.76 L1140.16,491.13 L1142.86,489.50 L1145.53,487.88 L1148.19,486.25 L1150.82,484.63 L1153.44,483.00 L1156.04,481.37 L1158.62,479.75 L1161.18,478.12 L1163.72,476.50 L1166.24,474.87 L1168.74,473.24 L1171.22,471.62 L1173.68,469.99 L1176.12,468.37 L1178.54,466.74 L1180.94,465.11 L1183.32,463.49 L1185.67,461.86 L1188.00,460.24 L1190.32,458.61 L1192.60,456.98 L1194.87,455.36 L1197.12,453.73 L1199.34,452.11 L1201.54,450.48 L1203.72,448.85 L1205.87,447.23 L1208.01,445.60 L1210.11,443.98 L1212.20,442.35 L1214.26,440.72 L1216.30,439.10 L1218.31,437.47 L1220.30,435.85 L1222.27,434.22 L1224.21,432.59 L1226.12,430.97 L1228.02,429.34 L1229.88,427.72 L1231.73,426.09 L1233.54,424.46 L1235.33,422.84 L1237.10,421.21 L1238.84,419.59 L1240.56,417.96 L1242.25,416.33 L1243.91,414.71 L1245.55,413.08 L1247.16,411.46 L1248.75,409.83 L1250.31,408.20 L1251.84,406.58 L1253.35,404.95 L1254.82,403.33 L1256.28,401.70 L1257.70,400.07 L1259.10,398.45 L1260.47,396.82 L1261.82,395.20 L1263.13,393.57 L1264.42,391.94 L1265.69,390.32 L1266.92,388.69 L1268.13,387.07 L1269.31,385.44 L1270.46,383.81 L1271.58,382.19 L1272.67,380.56 L1273.74,378.94 L1274.78,377.31 L1275.79,375.68 L1276.77,374.06 L1277.72,372.43 L1278.65,370.81 L1279.54,369.18 L1280.41,367.55 L1281.25,365.93 L1282.06,364.30 L1282.84,362.68 L1283.59,361.05 L1284.31,359.42 L1285.01,357.80 L1285.67,356.17 L1286.31,354.55 L1286.91,352.92 L1287.49,351.29 L1288.04,349.67 L1288.55,348.04 L1289.04,346.42 L1289.50,344.79 L1289.93,343.16 L1290.33,341.54 L1290.70,339.91 L1291.04,338.29 L1291.36,336.66 L1291.64,335.03 L1291.89,333.41 L1292.11,331.78 L1292.31,330.16 L1292.47,328.53 L1292.60,326.90 L1292.71,325.28 L1292.78,323.65 L1292.83,322.03 L1292.84,320.40 L1292.83,318.77 L1292.78,317.15 L1292.71,315.52 L1292.60,313.90 L1292.47,312.27 L1292.31,310.64 L1292.11,309.02 L1291.89,307.39 L1291.64,305.77 L1291.36,304.14 L1291.04,302.51 L1290.70,300.89 L1290.33,299.26 L1289.93,297.64 L1289.50,296.01 L1289.04,294.38 L1288.55,292.76 L1288.04,291.13 L1287.49,289.51 L1286.91,287.88 L1286.31,286.25 L1285.67,284.63 L1285.01,283.00 L1284.31,281.38 L1283.59,279.75 L1282.84,278.12 L1282.06,276.50 L1281.25,274.87 L1280.41,273.25 L1279.54,271.62 L1278.65,269.99 L1277.72,268.37 L1276.77,266.74 L1275.79,265.12 L1274.78,263.49 L1273.74,261.86 L1272.67,260.24 L1271.58,258.61 L1270.46,256.99 L1269.31,255.36 L1268.13,253.73 L1266.92,252.11 L1265.69,250.48 L1264.42,248.86 L1263.13,247.23 L1261.82,245.60 L1260.47,243.98 L1259.10,242.35 L1257.70,240.73 L1256.28,239.10 L1254.82,237.47 L1253.35,235.85 L1251.84,234.22 L1250.31,232.60 L1248.75,230.97 L1247.16,229.34 L1245.55,227.72 L1243.91,226.09 L1242.25,224.47 L1240.56,222.84 L1238.84,221.21 L1237.10,219.59 L1235.33,217.96 L1233.54,216.34 L1231.73,214.71 L1229.88,213.08 L1228.02,211.46 L1226.12,209.83 L1224.21,208.21 L1222.27,206.58 L1220.30,204.95 L1218.31,203.33 L1216.30,201.70 L1214.26,200.08 L1212.20,198.45 L1210.11,196.82 L1208.01,195.20 L1205.87,193.57 L1203.72,191.95 L1201.54,190.32 L1199.34,188.69 L1197.12,187.07 L1194.87,185.44 L1192.60,183.82 L1190.32,182.19 L1188.00,180.56 L1185.67,178.94 L1183.32,177.31 L1180.94,175.69 L1178.54,174.06 L1176.12,172.43 L1173.68,170.81 L1171.22,169.18 L1168.74,167.56 L1166.24,165.93 L1163.72,164.30 L1161.18,162.68 L1158.62,161.05 L1156.04,159.43 L1153.44,157.80 L1150.82,156.17 L1148.19,154.55 L1145.53,152.92 L1142.86,151.30 L1140.16,149.67 L1137.45,148.04 L1134.72,146.42 L1131.98,144.79 L1129.21,143.17 L1126.43,141.54 L1123.63,139.91 L1120.82,138.29 L1117.99,136.66 L1115.14,135.04 L1112.28,133.41 L1109.40,131.78 L1106.50,130.16 L1103.59,128.53 L1100.66,126.91 L1097.72,125.28 L1094.76,123.65 L1091.79,122.03 L1088.81,120.40 L1085.81,118.78 L1082.79,117.15 L1079.77,115.52 L1076.72,113.90 L1073.67,112.27 L1070.60,110.65 L1067.52,109.02 L1064.43,107.39 L1061.32,105.77 L1058.21,104.14 L1055.08,102.52 L1051.94,100.89 L1048.79,99.26 L1045.62,97.64 L1042.45,96.01 L1039.26,94.39 L1036.07,92.76 L1032.86,91.13 L1029.65,89.51 L1026.42,87.88 L1023.19,86.26 L1019.95,84.63 L1016.70,83.00 L1013.43,81.38 L1010.16,79.75 L1006.89,78.13 L1003.60,76.50 L1000.31,74.87 L997.01,73.25 L993.70,71.62 L990.38,70.00 L987.06,68.37 L983.74,66.74 L980.40,65.12 L977.06,63.49 L973.72,61.87 L970.36,60.24 L967.01,58.61 L963.65,56.99 L960.28,55.36 L956.91,53.74 L953.54,52.11 L950.16,50.48 L946.78,48.86 L943.39,47.23 L940.00,45.61 L936.61,43.98 L933.22,42.35 L929.82,40.73 L926.42,39.10 L923.02,37.48 L919.62,35.85 L916.22,34.22 L912.82,32.60 L909.41,30.97 L906.01,29.35 L902.60,27.72"/><path stroke-dashoffset="1.4" d="M902.60,613.08 L905.58,611.45 L908.56,609.83 L911.54,608.20 L914.52,606.58 L917.49,604.95 L920.47,603.32 L923.45,601.70 L926.42,600.07 L929.39,598.45 L932.36,596.82 L935.33,595.19 L938.29,593.57 L941.25,591.94 L944.21,590.32 L947.17,588.69 L950.12,587.06 L953.07,585.44 L956.02,583.81 L958.96,582.19 L961.89,580.56 L964.83,578.93 L967.75,577.31 L970.68,575.68 L973.59,574.06 L976.51,572.43 L979.41,570.80 L982.31,569.18 L985.21,567.55 L988.09,565.93 L990.98,564.30 L993.85,562.67 L996.72,561.05 L999.58,559.42 L1002.43,557.80 L1005.28,556.17 L1008.12,554.54 L1010.95,552.92 L1013.77,551.29 L1016.58,549.67 L1019.39,548.04 L1022.18,546.41 L1024.97,544.79 L1027.75,543.16 L1030.51,541.54 L1033.27,539.91 L1036.02,538.28 L1038.76,536.66 L1041.48,535.03 L1044.20,533.41 L1046.91,531.78 L1049.60,530.15 L1052.29,528.53 L1054.96,526.90 L1057.62,525.28 L1060.27,523.65 L1062.91,522.02 L1065.53,520.40 L1068.14,518.77 L1070.74,517.15 L1073.33,515.52 L1075.90,513.89 L1078.46,512.27 L1081.01,510.64 L1083.55,509.02 L1086.07,507.39 L1088.57,505.76 L1091.06,504.14 L1093.54,502.51 L1096.01,500.89 L1098.45,499.26 L1100.89,497.63 L1103.31,496.01 L1105.71,494.38 L1108.10,492.76 L1110.47,491.13 L1112.82,489.50 L1115.16,487.88 L1117.49,486.25 L1119.80,484.63 L1122.09,483.00 L1124.36,481.37 L1126.62,479.75 L1128.86,478.12 L1131.08,476.50 L1133.29,474.87 L1135.48,473.24 L1137.65,471.62 L1139.80,469.99 L1141.93,468.37 L1144.05,466.74 L1146.15,465.11 L1148.23,463.49 L1150.29,461.86 L1152.33,460.24 L1154.35,458.61 L1156.35,456.98 L1158.34,455.36 L1160.30,453.73 L1162.25,452.11 L1164.17,450.48 L1166.08,448.85 L1167.96,447.23 L1169.83,445.60 L1171.67,443.98 L1173.50,442.35 L1175.30,440.72 L1177.08,439.10 L1178.85,437.47 L1180.59,435.85 L1182.31,434.22 L1184.01,432.59 L1185.68,430.97 L1187.34,429.34 L1188.97,427.72 L1190.58,426.09 L1192.17,424.46 L1193.74,422.84 L1195.29,421.21 L1196.81,419.59 L1198.31,417.96 L1199.79,416.33 L1201.25,414.71 L1202.68,413.08 L1204.09,411.46 L1205.48,409.83 L1206.84,408.20 L1208.18,406.58 L1209.50,404.95 L1210.80,403.33 L1212.07,401.70 L1213.32,400.07 L1214.54,398.45 L1215.74,396.82 L1216.92,395.20 L1218.07,393.57 L1219.20,391.94 L1220.30,390.32 L1221.38,388.69 L1222.44,387.07 L1223.47,385.44 L1224.47,383.81 L1225.46,382.19 L1226.41,380.56 L1227.35,378.94 L1228.26,377.31 L1229.14,375.68 L1230.00,374.06 L1230.83,372.43 L1231.64,370.81 L1232.43,369.18 L1233.18,367.55 L1233.92,365.93 L1234.63,364.30 L1235.31,362.68 L1235.97,361.05 L1236.60,359.42 L1237.21,357.80 L1237.79,356.17 L1238.34,354.55 L1238.87,352.92 L1239.38,351.29 L1239.86,349.67 L1240.31,348.04 L1240.74,346.42 L1241.14,344.79 L1241.51,343.16 L1241.87,341.54 L1242.19,339.91 L1242.49,338.29 L1242.76,336.66 L1243.01,335.03 L1243.23,333.41 L1243.42,331.78 L1243.59,330.16 L1243.74,328.53 L1243.85,326.90 L1243.94,325.28 L1244.01,323.65 L1244.05,322.03 L1244.06,320.40 L1244.05,318.77 L1244.01,317.15 L1243.94,315.52 L1243.85,313.90 L1243.74,312.27 L1243.59,310.64 L1243.42,309.02 L1243.23,307.39 L1243.01,305.77 L1242.76,304.14 L1242.49,302.51 L1242.19,300.89 L1241.87,299.26 L1241.51,297.64 L1241.14,296.01 L1240.74,294.38 L1240.31,292.76 L1239.86,291.13 L1239.38,289.51 L1238.87,287.88 L1238.34,286.25 L1237.79,284.63 L1237.21,283.00 L1236.60,281.38 L1235.97,279.75 L1235.31,278.12 L1234.63,276.50 L1233.92,274.87 L1233.18,273.25 L1232.43,271.62 L1231.64,269.99 L1230.83,268.37 L1230.00,266.74 L1229.14,265.12 L1228.26,263.49 L1227.35,261.86 L1226.41,260.24 L1225.46,258.61 L1224.47,256.99 L1223.47,255.36 L1222.44,253.73 L1221.38,252.11 L1220.30,250.48 L1219.20,248.86 L1218.07,247.23 L1216.92,245.60 L1215.74,243.98 L1214.54,242.35 L1213.32,240.73 L1212.07,239.10 L1210.80,237.47 L1209.50,235.85 L1208.18,234.22 L1206.84,232.60 L1205.48,230.97 L1204.09,229.34 L1202.68,227.72 L1201.25,226.09 L1199.79,224.47 L1198.31,222.84 L1196.81,221.21 L1195.29,219.59 L1193.74,217.96 L1192.17,216.34 L1190.58,214.71 L1188.97,213.08 L1187.34,211.46 L1185.68,209.83 L1184.01,208.21 L1182.31,206.58 L1180.59,204.95 L1178.85,203.33 L1177.08,201.70 L1175.30,200.08 L1173.50,198.45 L1171.67,196.82 L1169.83,195.20 L1167.96,193.57 L1166.08,191.95 L1164.17,190.32 L1162.25,188.69 L1160.30,187.07 L1158.34,185.44 L1156.35,183.82 L1154.35,182.19 L1152.33,180.56 L1150.29,178.94 L1148.23,177.31 L1146.15,175.69 L1144.05,174.06 L1141.93,172.43 L1139.80,170.81 L1137.65,169.18 L1135.48,167.56 L1133.29,165.93 L1131.08,164.30 L1128.86,162.68 L1126.62,161.05 L1124.36,159.43 L1122.09,157.80 L1119.80,156.17 L1117.49,154.55 L1115.16,152.92 L1112.82,151.30 L1110.47,149.67 L1108.10,148.04 L1105.71,146.42 L1103.31,144.79 L1100.89,143.17 L1098.45,141.54 L1096.01,139.91 L1093.54,138.29 L1091.06,136.66 L1088.57,135.04 L1086.07,133.41 L1083.55,131.78 L1081.01,130.16 L1078.46,128.53 L1075.90,126.91 L1073.33,125.28 L1070.74,123.65 L1068.14,122.03 L1065.53,120.40 L1062.91,118.78 L1060.27,117.15 L1057.62,115.52 L1054.96,113.90 L1052.29,112.27 L1049.60,110.65 L1046.91,109.02 L1044.20,107.39 L1041.48,105.77 L1038.76,104.14 L1036.02,102.52 L1033.27,100.89 L1030.51,99.26 L1027.75,97.64 L1024.97,96.01 L1022.18,94.39 L1019.39,92.76 L1016.58,91.13 L1013.77,89.51 L1010.95,87.88 L1008.12,86.26 L1005.28,84.63 L1002.43,83.00 L999.58,81.38 L996.72,79.75 L993.85,78.13 L990.98,76.50 L988.09,74.87 L985.21,73.25 L982.31,71.62 L979.41,70.00 L976.51,68.37 L973.59,66.74 L970.68,65.12 L967.75,63.49 L964.83,61.87 L961.89,60.24 L958.96,58.61 L956.02,56.99 L953.07,55.36 L950.12,53.74 L947.17,52.11 L944.21,50.48 L941.25,48.86 L938.29,47.23 L935.33,45.61 L932.36,43.98 L929.39,42.35 L926.42,40.73 L923.45,39.10 L920.47,37.48 L917.49,35.85 L914.52,34.22 L911.54,32.60 L908.56,30.97 L905.58,29.35 L902.60,27.72"/><path stroke-dashoffset="1.4" d="M902.60,613.08 L905.15,611.45 L907.71,609.83 L910.26,608.20 L912.81,606.58 L915.37,604.95 L917.92,603.32 L920.47,601.70 L923.02,600.07 L925.56,598.45 L928.11,596.82 L930.65,595.19 L933.19,593.57 L935.73,591.94 L938.27,590.32 L940.80,588.69 L943.33,587.06 L945.86,585.44 L948.39,583.81 L950.91,582.19 L953.42,580.56 L955.94,578.93 L958.45,577.31 L960.95,575.68 L963.45,574.06 L965.95,572.43 L968.44,570.80 L970.92,569.18 L973.41,567.55 L975.88,565.93 L978.35,564.30 L980.82,562.67 L983.27,561.05 L985.73,559.42 L988.17,557.80 L990.61,556.17 L993.04,554.54 L995.47,552.92 L997.89,551.29 L1000.30,549.67 L1002.70,548.04 L1005.10,546.41 L1007.49,544.79 L1009.87,543.16 L1012.24,541.54 L1014.60,539.91 L1016.96,538.28 L1019.31,536.66 L1021.64,535.03 L1023.97,533.41 L1026.29,531.78 L1028.60,530.15 L1030.90,528.53 L1033.19,526.90 L1035.47,525.28 L1037.74,523.65 L1040.00,522.02 L1042.25,520.40 L1044.49,518.77 L1046.72,517.15 L1048.94,515.52 L1051.15,513.89 L1053.34,512.27 L1055.52,510.64 L1057.70,509.02 L1059.86,507.39 L1062.00,505.76 L1064.14,504.14 L1066.26,502.51 L1068.38,500.89 L1070.47,499.26 L1072.56,497.63 L1074.63,496.01 L1076.69,494.38 L1078.74,492.76 L1080.77,491.13 L1082.79,489.50 L1084.80,487.88 L1086.79,486.25 L1088.77,484.63 L1090.73,483.00 L1092.68,481.37 L1094.62,479.75 L1096.54,478.12 L1098.44,476.50 L1100.33,474.87 L1102.21,473.24 L1104.07,471.62 L1105.91,469.99 L1107.74,468.37 L1109.56,466.74 L1111.35,465.11 L1113.14,463.49 L1114.90,461.86 L1116.65,460.24 L1118.39,458.61 L1120.10,456.98 L1121.80,455.36 L1123.49,453.73 L1125.16,452.11 L1126.81,450.48 L1128.44,448.85 L1130.06,447.23 L1131.65,445.60 L1133.23,443.98 L1134.80,442.35 L1136.34,440.72 L1137.87,439.10 L1139.38,437.47 L1140.88,435.85 L1142.35,434.22 L1143.81,432.59 L1145.24,430.97 L1146.66,429.34 L1148.06,427.72 L1149.44,426.09 L1150.81,424.46 L1152.15,422.84 L1153.48,421.21 L1154.78,419.59 L1156.07,417.96 L1157.34,416.33 L1158.58,414.71 L1159.81,413.08 L1161.02,411.46 L1162.21,409.83 L1163.38,408.20 L1164.53,406.58 L1165.66,404.95 L1166.77,403.33 L1167.86,401.70 L1168.93,400.07 L1169.98,398.45 L1171.01,396.82 L1172.01,395.20 L1173.00,393.57 L1173.97,391.94 L1174.91,390.32 L1175.84,388.69 L1176.75,387.07 L1177.63,385.44 L1178.49,383.81 L1179.33,382.19 L1180.16,380.56 L1180.96,378.94 L1181.73,377.31 L1182.49,375.68 L1183.23,374.06 L1183.94,372.43 L1184.64,370.81 L1185.31,369.18 L1185.96,367.55 L1186.59,365.93 L1187.19,364.30 L1187.78,362.68 L1188.34,361.05 L1188.88,359.42 L1189.40,357.80 L1189.90,356.17 L1190.38,354.55 L1190.83,352.92 L1191.27,351.29 L1191.68,349.67 L1192.07,348.04 L1192.43,346.42 L1192.78,344.79 L1193.10,343.16 L1193.40,341.54 L1193.68,339.91 L1193.93,338.29 L1194.17,336.66 L1194.38,335.03 L1194.57,333.41 L1194.73,331.78 L1194.88,330.16 L1195.00,328.53 L1195.10,326.90 L1195.18,325.28 L1195.24,323.65 L1195.27,322.03 L1195.28,320.40 L1195.27,318.77 L1195.24,317.15 L1195.18,315.52 L1195.10,313.90 L1195.00,312.27 L1194.88,310.64 L1194.73,309.02 L1194.57,307.39 L1194.38,305.77 L1194.17,304.14 L1193.93,302.51 L1193.68,300.89 L1193.40,299.26 L1193.10,297.64 L1192.78,296.01 L1192.43,294.38 L1192.07,292.76 L1191.68,291.13 L1191.27,289.51 L1190.83,287.88 L1190.38,286.25 L1189.90,284.63 L1189.40,283.00 L1188.88,281.38 L1188.34,279.75 L1187.78,278.12 L1187.19,276.50 L1186.59,274.87 L1185.96,273.25 L1185.31,271.62 L1184.64,269.99 L1183.94,268.37 L1183.23,266.74 L1182.49,265.12 L1181.73,263.49 L1180.96,261.86 L1180.16,260.24 L1179.33,258.61 L1178.49,256.99 L1177.63,255.36 L1176.75,253.73 L1175.84,252.11 L1174.91,250.48 L1173.97,248.86 L1173.00,247.23 L1172.01,245.60 L1171.01,243.98 L1169.98,242.35 L1168.93,240.73 L1167.86,239.10 L1166.77,237.47 L1165.66,235.85 L1164.53,234.22 L1163.38,232.60 L1162.21,230.97 L1161.02,229.34 L1159.81,227.72 L1158.58,226.09 L1157.34,224.47 L1156.07,222.84 L1154.78,221.21 L1153.48,219.59 L1152.15,217.96 L1150.81,216.34 L1149.44,214.71 L1148.06,213.08 L1146.66,211.46 L1145.24,209.83 L1143.81,208.21 L1142.35,206.58 L1140.88,204.95 L1139.38,203.33 L1137.87,201.70 L1136.34,200.08 L1134.80,198.45 L1133.23,196.82 L1131.65,195.20 L1130.06,193.57 L1128.44,191.95 L1126.81,190.32 L1125.16,188.69 L1123.49,187.07 L1121.80,185.44 L1120.10,183.82 L1118.39,182.19 L1116.65,180.56 L1114.90,178.94 L1113.14,177.31 L1111.35,175.69 L1109.56,174.06 L1107.74,172.43 L1105.91,170.81 L1104.07,169.18 L1102.21,167.56 L1100.33,165.93 L1098.44,164.30 L1096.54,162.68 L1094.62,161.05 L1092.68,159.43 L1090.73,157.80 L1088.77,156.17 L1086.79,154.55 L1084.80,152.92 L1082.79,151.30 L1080.77,149.67 L1078.74,148.04 L1076.69,146.42 L1074.63,144.79 L1072.56,143.17 L1070.47,141.54 L1068.38,139.91 L1066.26,138.29 L1064.14,136.66 L1062.00,135.04 L1059.86,133.41 L1057.70,131.78 L1055.52,130.16 L1053.34,128.53 L1051.15,126.91 L1048.94,125.28 L1046.72,123.65 L1044.49,122.03 L1042.25,120.40 L1040.00,118.78 L1037.74,117.15 L1035.47,115.52 L1033.19,113.90 L1030.90,112.27 L1028.60,110.65 L1026.29,109.02 L1023.97,107.39 L1021.64,105.77 L1019.31,104.14 L1016.96,102.52 L1014.60,100.89 L1012.24,99.26 L1009.87,97.64 L1007.49,96.01 L1005.10,94.39 L1002.70,92.76 L1000.30,91.13 L997.89,89.51 L995.47,87.88 L993.04,86.26 L990.61,84.63 L988.17,83.00 L985.73,81.38 L983.27,79.75 L980.82,78.13 L978.35,76.50 L975.88,74.87 L973.41,73.25 L970.92,71.62 L968.44,70.00 L965.95,68.37 L963.45,66.74 L960.95,65.12 L958.45,63.49 L955.94,61.87 L953.42,60.24 L950.91,58.61 L948.39,56.99 L945.86,55.36 L943.33,53.74 L940.80,52.11 L938.27,50.48 L935.73,48.86 L933.19,47.23 L930.65,45.61 L928.11,43.98 L925.56,42.35 L923.02,40.73 L920.47,39.10 L917.92,37.48 L915.37,35.85 L912.81,34.22 L910.26,32.60 L907.71,30.97 L905.15,29.35 L902.60,27.72"/><path stroke-dashoffset="1.4" d="M902.60,613.08 L904.73,611.45 L906.86,609.83 L908.98,608.20 L911.11,606.58 L913.24,604.95 L915.36,603.32 L917.49,601.70 L919.61,600.07 L921.74,598.45 L923.86,596.82 L925.98,595.19 L928.09,593.57 L930.21,591.94 L932.32,590.32 L934.44,588.69 L936.54,587.06 L938.65,585.44 L940.75,583.81 L942.86,582.19 L944.95,580.56 L947.05,578.93 L949.14,577.31 L951.23,575.68 L953.31,574.06 L955.39,572.43 L957.47,570.80 L959.54,569.18 L961.60,567.55 L963.67,565.93 L965.73,564.30 L967.78,562.67 L969.83,561.05 L971.87,559.42 L973.91,557.80 L975.94,556.17 L977.97,554.54 L979.99,552.92 L982.01,551.29 L984.02,549.67 L986.02,548.04 L988.02,546.41 L990.01,544.79 L991.99,543.16 L993.97,541.54 L995.94,539.91 L997.90,538.28 L999.85,536.66 L1001.80,535.03 L1003.74,533.41 L1005.68,531.78 L1007.60,530.15 L1009.52,528.53 L1011.43,526.90 L1013.33,525.28 L1015.22,523.65 L1017.10,522.02 L1018.98,520.40 L1020.85,518.77 L1022.70,517.15 L1024.55,515.52 L1026.39,513.89 L1028.22,512.27 L1030.04,510.64 L1031.85,509.02 L1033.65,507.39 L1035.44,505.76 L1037.22,504.14 L1038.99,502.51 L1040.75,500.89 L1042.50,499.26 L1044.23,497.63 L1045.96,496.01 L1047.68,494.38 L1049.38,492.76 L1051.08,491.13 L1052.76,489.50 L1054.43,487.88 L1056.09,486.25 L1057.74,484.63 L1059.38,483.00 L1061.00,481.37 L1062.61,479.75 L1064.21,478.12 L1065.80,476.50 L1067.38,474.87 L1068.94,473.24 L1070.49,471.62 L1072.03,469.99 L1073.55,468.37 L1075.06,466.74 L1076.56,465.11 L1078.05,463.49 L1079.52,461.86 L1080.98,460.24 L1082.42,458.61 L1083.85,456.98 L1085.27,455.36 L1086.67,453.73 L1088.06,452.11 L1089.44,450.48 L1090.80,448.85 L1092.15,447.23 L1093.48,445.60 L1094.80,443.98 L1096.10,442.35 L1097.39,440.72 L1098.66,439.10 L1099.92,437.47 L1101.16,435.85 L1102.39,434.22 L1103.60,432.59 L1104.80,430.97 L1105.98,429.34 L1107.15,427.72 L1108.30,426.09 L1109.44,424.46 L1110.56,422.84 L1111.66,421.21 L1112.75,419.59 L1113.82,417.96 L1114.88,416.33 L1115.92,414.71 L1116.94,413.08 L1117.95,411.46 L1118.94,409.83 L1119.92,408.20 L1120.87,406.58 L1121.82,404.95 L1122.74,403.33 L1123.65,401.70 L1124.54,400.07 L1125.41,398.45 L1126.27,396.82 L1127.11,395.20 L1127.93,393.57 L1128.74,391.94 L1129.53,390.32 L1130.30,388.69 L1131.05,387.07 L1131.79,385.44 L1132.51,383.81 L1133.21,382.19 L1133.90,380.56 L1134.56,378.94 L1135.21,377.31 L1135.84,375.68 L1136.46,374.06 L1137.05,372.43 L1137.63,370.81 L1138.19,369.18 L1138.73,367.55 L1139.26,365.93 L1139.76,364.30 L1140.25,362.68 L1140.72,361.05 L1141.17,359.42 L1141.60,357.80 L1142.02,356.17 L1142.42,354.55 L1142.79,352.92 L1143.16,351.29 L1143.50,349.67 L1143.82,348.04 L1144.13,346.42 L1144.41,344.79 L1144.68,343.16 L1144.93,341.54 L1145.16,339.91 L1145.38,338.29 L1145.57,336.66 L1145.75,335.03 L1145.91,333.41 L1146.05,331.78 L1146.17,330.16 L1146.27,328.53 L1146.35,326.90 L1146.42,325.28 L1146.46,323.65 L1146.49,322.03 L1146.50,320.40 L1146.49,318.77 L1146.46,317.15 L1146.42,315.52 L1146.35,313.90 L1146.27,312.27 L1146.17,310.64 L1146.05,309.02 L1145.91,307.39 L1145.75,305.77 L1145.57,304.14 L1145.38,302.51 L1145.16,300.89 L1144.93,299.26 L1144.68,297.64 L1144.41,296.01 L1144.13,294.38 L1143.82,292.76 L1143.50,291.13 L1143.16,289.51 L1142.79,287.88 L1142.42,286.25 L1142.02,284.63 L1141.60,283.00 L1141.17,281.38 L1140.72,279.75 L1140.25,278.12 L1139.76,276.50 L1139.26,274.87 L1138.73,273.25 L1138.19,271.62 L1137.63,269.99 L1137.05,268.37 L1136.46,266.74 L1135.84,265.12 L1135.21,263.49 L1134.56,261.86 L1133.90,260.24 L1133.21,258.61 L1132.51,256.99 L1131.79,255.36 L1131.05,253.73 L1130.30,252.11 L1129.53,250.48 L1128.74,248.86 L1127.93,247.23 L1127.11,245.60 L1126.27,243.98 L1125.41,242.35 L1124.54,240.73 L1123.65,239.10 L1122.74,237.47 L1121.82,235.85 L1120.87,234.22 L1119.92,232.60 L1118.94,230.97 L1117.95,229.34 L1116.94,227.72 L1115.92,226.09 L1114.88,224.47 L1113.82,222.84 L1112.75,221.21 L1111.66,219.59 L1110.56,217.96 L1109.44,216.34 L1108.30,214.71 L1107.15,213.08 L1105.98,211.46 L1104.80,209.83 L1103.60,208.21 L1102.39,206.58 L1101.16,204.95 L1099.92,203.33 L1098.66,201.70 L1097.39,200.08 L1096.10,198.45 L1094.80,196.82 L1093.48,195.20 L1092.15,193.57 L1090.80,191.95 L1089.44,190.32 L1088.06,188.69 L1086.67,187.07 L1085.27,185.44 L1083.85,183.82 L1082.42,182.19 L1080.98,180.56 L1079.52,178.94 L1078.05,177.31 L1076.56,175.69 L1075.06,174.06 L1073.55,172.43 L1072.03,170.81 L1070.49,169.18 L1068.94,167.56 L1067.38,165.93 L1065.80,164.30 L1064.21,162.68 L1062.61,161.05 L1061.00,159.43 L1059.38,157.80 L1057.74,156.17 L1056.09,154.55 L1054.43,152.92 L1052.76,151.30 L1051.08,149.67 L1049.38,148.04 L1047.68,146.42 L1045.96,144.79 L1044.23,143.17 L1042.50,141.54 L1040.75,139.91 L1038.99,138.29 L1037.22,136.66 L1035.44,135.04 L1033.65,133.41 L1031.85,131.78 L1030.04,130.16 L1028.22,128.53 L1026.39,126.91 L1024.55,125.28 L1022.70,123.65 L1020.85,122.03 L1018.98,120.40 L1017.10,118.78 L1015.22,117.15 L1013.33,115.52 L1011.43,113.90 L1009.52,112.27 L1007.60,110.65 L1005.68,109.02 L1003.74,107.39 L1001.80,105.77 L999.85,104.14 L997.90,102.52 L995.94,100.89 L993.97,99.26 L991.99,97.64 L990.01,96.01 L988.02,94.39 L986.02,92.76 L984.02,91.13 L982.01,89.51 L979.99,87.88 L977.97,86.26 L975.94,84.63 L973.91,83.00 L971.87,81.38 L969.83,79.75 L967.78,78.13 L965.73,76.50 L963.67,74.87 L961.60,73.25 L959.54,71.62 L957.47,70.00 L955.39,68.37 L953.31,66.74 L951.23,65.12 L949.14,63.49 L947.05,61.87 L944.95,60.24 L942.86,58.61 L940.75,56.99 L938.65,55.36 L936.54,53.74 L934.44,52.11 L932.32,50.48 L930.21,48.86 L928.09,47.23 L925.98,45.61 L923.86,43.98 L921.74,42.35 L919.61,40.73 L917.49,39.10 L915.36,37.48 L913.24,35.85 L911.11,34.22 L908.98,32.60 L906.86,30.97 L904.73,29.35 L902.60,27.72"/><path stroke-dashoffset="1.4" d="M902.60,613.08 L904.30,611.45 L906.01,609.83 L907.71,608.20 L909.41,606.58 L911.11,604.95 L912.81,603.32 L914.51,601.70 L916.21,600.07 L917.91,598.45 L919.61,596.82 L921.30,595.19 L923.00,593.57 L924.69,591.94 L926.38,590.32 L928.07,588.69 L929.76,587.06 L931.44,585.44 L933.12,583.81 L934.80,582.19 L936.48,580.56 L938.16,578.93 L939.83,577.31 L941.50,575.68 L943.17,574.06 L944.83,572.43 L946.49,570.80 L948.15,569.18 L949.80,567.55 L951.45,565.93 L953.10,564.30 L954.74,562.67 L956.38,561.05 L958.02,559.42 L959.65,557.80 L961.27,556.17 L962.90,554.54 L964.51,552.92 L966.12,551.29 L967.73,549.67 L969.33,548.04 L970.93,546.41 L972.52,544.79 L974.11,543.16 L975.69,541.54 L977.27,539.91 L978.84,538.28 L980.40,536.66 L981.96,535.03 L983.51,533.41 L985.06,531.78 L986.60,530.15 L988.13,528.53 L989.66,526.90 L991.18,525.28 L992.70,523.65 L994.20,522.02 L995.70,520.40 L997.20,518.77 L998.68,517.15 L1000.16,515.52 L1001.63,513.89 L1003.09,512.27 L1004.55,510.64 L1006.00,509.02 L1007.44,507.39 L1008.87,505.76 L1010.29,504.14 L1011.71,502.51 L1013.12,500.89 L1014.52,499.26 L1015.91,497.63 L1017.29,496.01 L1018.66,494.38 L1020.03,492.76 L1021.38,491.13 L1022.73,489.50 L1024.07,487.88 L1025.39,486.25 L1026.71,484.63 L1028.02,483.00 L1029.32,481.37 L1030.61,479.75 L1031.89,478.12 L1033.16,476.50 L1034.42,474.87 L1035.67,473.24 L1036.91,471.62 L1038.14,469.99 L1039.36,468.37 L1040.57,466.74 L1041.77,465.11 L1042.96,463.49 L1044.14,461.86 L1045.30,460.24 L1046.46,458.61 L1047.60,456.98 L1048.74,455.36 L1049.86,453.73 L1050.97,452.11 L1052.07,450.48 L1053.16,448.85 L1054.24,447.23 L1055.30,445.60 L1056.36,443.98 L1057.40,442.35 L1058.43,440.72 L1059.45,439.10 L1060.46,437.47 L1061.45,435.85 L1062.43,434.22 L1063.40,432.59 L1064.36,430.97 L1065.31,429.34 L1066.24,427.72 L1067.16,426.09 L1068.07,424.46 L1068.97,422.84 L1069.85,421.21 L1070.72,419.59 L1071.58,417.96 L1072.42,416.33 L1073.26,414.71 L1074.07,413.08 L1074.88,411.46 L1075.67,409.83 L1076.45,408.20 L1077.22,406.58 L1077.97,404.95 L1078.71,403.33 L1079.44,401.70 L1080.15,400.07 L1080.85,398.45 L1081.54,396.82 L1082.21,395.20 L1082.87,393.57 L1083.51,391.94 L1084.14,390.32 L1084.76,388.69 L1085.36,387.07 L1085.95,385.44 L1086.53,383.81 L1087.09,382.19 L1087.64,380.56 L1088.17,378.94 L1088.69,377.31 L1089.19,375.68 L1089.68,374.06 L1090.16,372.43 L1090.62,370.81 L1091.07,369.18 L1091.50,367.55 L1091.92,365.93 L1092.33,364.30 L1092.72,362.68 L1093.09,361.05 L1093.46,359.42 L1093.80,357.80 L1094.14,356.17 L1094.45,354.55 L1094.76,352.92 L1095.04,351.29 L1095.32,349.67 L1095.58,348.04 L1095.82,346.42 L1096.05,344.79 L1096.27,343.16 L1096.47,341.54 L1096.65,339.91 L1096.82,338.29 L1096.98,336.66 L1097.12,335.03 L1097.24,333.41 L1097.36,331.78 L1097.45,330.16 L1097.53,328.53 L1097.60,326.90 L1097.65,325.28 L1097.69,323.65 L1097.71,322.03 L1097.72,320.40 L1097.71,318.77 L1097.69,317.15 L1097.65,315.52 L1097.60,313.90 L1097.53,312.27 L1097.45,310.64 L1097.36,309.02 L1097.24,307.39 L1097.12,305.77 L1096.98,304.14 L1096.82,302.51 L1096.65,300.89 L1096.47,299.26 L1096.27,297.64 L1096.05,296.01 L1095.82,294.38 L1095.58,292.76 L1095.32,291.13 L1095.04,289.51 L1094.76,287.88 L1094.45,286.25 L1094.14,284.63 L1093.80,283.00 L1093.46,281.38 L1093.09,279.75 L1092.72,278.12 L1092.33,276.50 L1091.92,274.87 L1091.50,273.25 L1091.07,271.62 L1090.62,269.99 L1090.16,268.37 L1089.68,266.74 L1089.19,265.12 L1088.69,263.49 L1088.17,261.86 L1087.64,260.24 L1087.09,258.61 L1086.53,256.99 L1085.95,255.36 L1085.36,253.73 L1084.76,252.11 L1084.14,250.48 L1083.51,248.86 L1082.87,247.23 L1082.21,245.60 L1081.54,243.98 L1080.85,242.35 L1080.15,240.73 L1079.44,239.10 L1078.71,237.47 L1077.97,235.85 L1077.22,234.22 L1076.45,232.60 L1075.67,230.97 L1074.88,229.34 L1074.07,227.72 L1073.26,226.09 L1072.42,224.47 L1071.58,222.84 L1070.72,221.21 L1069.85,219.59 L1068.97,217.96 L1068.07,216.34 L1067.16,214.71 L1066.24,213.08 L1065.31,211.46 L1064.36,209.83 L1063.40,208.21 L1062.43,206.58 L1061.45,204.95 L1060.46,203.33 L1059.45,201.70 L1058.43,200.08 L1057.40,198.45 L1056.36,196.82 L1055.30,195.20 L1054.24,193.57 L1053.16,191.95 L1052.07,190.32 L1050.97,188.69 L1049.86,187.07 L1048.74,185.44 L1047.60,183.82 L1046.46,182.19 L1045.30,180.56 L1044.14,178.94 L1042.96,177.31 L1041.77,175.69 L1040.57,174.06 L1039.36,172.43 L1038.14,170.81 L1036.91,169.18 L1035.67,167.56 L1034.42,165.93 L1033.16,164.30 L1031.89,162.68 L1030.61,161.05 L1029.32,159.43 L1028.02,157.80 L1026.71,156.17 L1025.39,154.55 L1024.07,152.92 L1022.73,151.30 L1021.38,149.67 L1020.03,148.04 L1018.66,146.42 L1017.29,144.79 L1015.91,143.17 L1014.52,141.54 L1013.12,139.91 L1011.71,138.29 L1010.29,136.66 L1008.87,135.04 L1007.44,133.41 L1006.00,131.78 L1004.55,130.16 L1003.09,128.53 L1001.63,126.91 L1000.16,125.28 L998.68,123.65 L997.20,122.03 L995.70,120.40 L994.20,118.78 L992.70,117.15 L991.18,115.52 L989.66,113.90 L988.13,112.27 L986.60,110.65 L985.06,109.02 L983.51,107.39 L981.96,105.77 L980.40,104.14 L978.84,102.52 L977.27,100.89 L975.69,99.26 L974.11,97.64 L972.52,96.01 L970.93,94.39 L969.33,92.76 L967.73,91.13 L966.12,89.51 L964.51,87.88 L962.90,86.26 L961.27,84.63 L959.65,83.00 L958.02,81.38 L956.38,79.75 L954.74,78.13 L953.10,76.50 L951.45,74.87 L949.80,73.25 L948.15,71.62 L946.49,70.00 L944.83,68.37 L943.17,66.74 L941.50,65.12 L939.83,63.49 L938.16,61.87 L936.48,60.24 L934.80,58.61 L933.12,56.99 L931.44,55.36 L929.76,53.74 L928.07,52.11 L926.38,50.48 L924.69,48.86 L923.00,47.23 L921.30,45.61 L919.61,43.98 L917.91,42.35 L916.21,40.73 L914.51,39.10 L912.81,37.48 L911.11,35.85 L909.41,34.22 L907.71,32.60 L906.01,30.97 L904.30,29.35 L902.60,27.72"/><path stroke-dashoffset="1.4" d="M902.60,613.08 L903.88,611.45 L905.15,609.83 L906.43,608.20 L907.71,606.58 L908.98,604.95 L910.26,603.32 L911.53,601.70 L912.81,600.07 L914.08,598.45 L915.35,596.82 L916.63,595.19 L917.90,593.57 L919.17,591.94 L920.43,590.32 L921.70,588.69 L922.97,587.06 L924.23,585.44 L925.49,583.81 L926.75,582.19 L928.01,580.56 L929.27,578.93 L930.52,577.31 L931.78,575.68 L933.03,574.06 L934.27,572.43 L935.52,570.80 L936.76,569.18 L938.00,567.55 L939.24,565.93 L940.48,564.30 L941.71,562.67 L942.94,561.05 L944.16,559.42 L945.39,557.80 L946.61,556.17 L947.82,554.54 L949.03,552.92 L950.24,551.29 L951.45,549.67 L952.65,548.04 L953.85,546.41 L955.04,544.79 L956.23,543.16 L957.42,541.54 L958.60,539.91 L959.78,538.28 L960.95,536.66 L962.12,535.03 L963.29,533.41 L964.45,531.78 L965.60,530.15 L966.75,528.53 L967.90,526.90 L969.04,525.28 L970.17,523.65 L971.30,522.02 L972.43,520.40 L973.55,518.77 L974.66,517.15 L975.77,515.52 L976.87,513.89 L977.97,512.27 L979.06,510.64 L980.15,509.02 L981.23,507.39 L982.30,505.76 L983.37,504.14 L984.43,502.51 L985.49,500.89 L986.54,499.26 L987.58,497.63 L988.62,496.01 L989.65,494.38 L990.67,492.76 L991.69,491.13 L992.70,489.50 L993.70,487.88 L994.69,486.25 L995.68,484.63 L996.67,483.00 L997.64,481.37 L998.61,479.75 L999.57,478.12 L1000.52,476.50 L1001.47,474.87 L1002.40,473.24 L1003.33,471.62 L1004.26,469.99 L1005.17,468.37 L1006.08,466.74 L1006.98,465.11 L1007.87,463.49 L1008.75,461.86 L1009.63,460.24 L1010.49,458.61 L1011.35,456.98 L1012.20,455.36 L1013.04,453.73 L1013.88,452.11 L1014.70,450.48 L1015.52,448.85 L1016.33,447.23 L1017.13,445.60 L1017.92,443.98 L1018.70,442.35 L1019.47,440.72 L1020.24,439.10 L1020.99,437.47 L1021.74,435.85 L1022.47,434.22 L1023.20,432.59 L1023.92,430.97 L1024.63,429.34 L1025.33,427.72 L1026.02,426.09 L1026.70,424.46 L1027.38,422.84 L1028.04,421.21 L1028.69,419.59 L1029.33,417.96 L1029.97,416.33 L1030.59,414.71 L1031.21,413.08 L1031.81,411.46 L1032.41,409.83 L1032.99,408.20 L1033.56,406.58 L1034.13,404.95 L1034.68,403.33 L1035.23,401.70 L1035.76,400.07 L1036.29,398.45 L1036.80,396.82 L1037.31,395.20 L1037.80,393.57 L1038.28,391.94 L1038.76,390.32 L1039.22,388.69 L1039.67,387.07 L1040.11,385.44 L1040.55,383.81 L1040.97,382.19 L1041.38,380.56 L1041.78,378.94 L1042.17,377.31 L1042.55,375.68 L1042.91,374.06 L1043.27,372.43 L1043.62,370.81 L1043.95,369.18 L1044.28,367.55 L1044.59,365.93 L1044.90,364.30 L1045.19,362.68 L1045.47,361.05 L1045.74,359.42 L1046.00,357.80 L1046.25,356.17 L1046.49,354.55 L1046.72,352.92 L1046.93,351.29 L1047.14,349.67 L1047.33,348.04 L1047.52,346.42 L1047.69,344.79 L1047.85,343.16 L1048.00,341.54 L1048.14,339.91 L1048.27,338.29 L1048.38,336.66 L1048.49,335.03 L1048.58,333.41 L1048.67,331.78 L1048.74,330.16 L1048.80,328.53 L1048.85,326.90 L1048.89,325.28 L1048.92,323.65 L1048.93,322.03 L1048.94,320.40 L1048.93,318.77 L1048.92,317.15 L1048.89,315.52 L1048.85,313.90 L1048.80,312.27 L1048.74,310.64 L1048.67,309.02 L1048.58,307.39 L1048.49,305.77 L1048.38,304.14 L1048.27,302.51 L1048.14,300.89 L1048.00,299.26 L1047.85,297.64 L1047.69,296.01 L1047.52,294.38 L1047.33,292.76 L1047.14,291.13 L1046.93,289.51 L1046.72,287.88 L1046.49,286.25 L1046.25,284.63 L1046.00,283.00 L1045.74,281.38 L1045.47,279.75 L1045.19,278.12 L1044.90,276.50 L1044.59,274.87 L1044.28,273.25 L1043.95,271.62 L1043.62,269.99 L1043.27,268.37 L1042.91,266.74 L1042.55,265.12 L1042.17,263.49 L1041.78,261.86 L1041.38,260.24 L1040.97,258.61 L1040.55,256.99 L1040.11,255.36 L1039.67,253.73 L1039.22,252.11 L1038.76,250.48 L1038.28,248.86 L1037.80,247.23 L1037.31,245.60 L1036.80,243.98 L1036.29,242.35 L1035.76,240.73 L1035.23,239.10 L1034.68,237.47 L1034.13,235.85 L1033.56,234.22 L1032.99,232.60 L1032.41,230.97 L1031.81,229.34 L1031.21,227.72 L1030.59,226.09 L1029.97,224.47 L1029.33,222.84 L1028.69,221.21 L1028.04,219.59 L1027.38,217.96 L1026.70,216.34 L1026.02,214.71 L1025.33,213.08 L1024.63,211.46 L1023.92,209.83 L1023.20,208.21 L1022.47,206.58 L1021.74,204.95 L1020.99,203.33 L1020.24,201.70 L1019.47,200.08 L1018.70,198.45 L1017.92,196.82 L1017.13,195.20 L1016.33,193.57 L1015.52,191.95 L1014.70,190.32 L1013.88,188.69 L1013.04,187.07 L1012.20,185.44 L1011.35,183.82 L1010.49,182.19 L1009.63,180.56 L1008.75,178.94 L1007.87,177.31 L1006.98,175.69 L1006.08,174.06 L1005.17,172.43 L1004.26,170.81 L1003.33,169.18 L1002.40,167.56 L1001.47,165.93 L1000.52,164.30 L999.57,162.68 L998.61,161.05 L997.64,159.43 L996.67,157.80 L995.68,156.17 L994.69,154.55 L993.70,152.92 L992.70,151.30 L991.69,149.67 L990.67,148.04 L989.65,146.42 L988.62,144.79 L987.58,143.17 L986.54,141.54 L985.49,139.91 L984.43,138.29 L983.37,136.66 L982.30,135.04 L981.23,133.41 L980.15,131.78 L979.06,130.16 L977.97,128.53 L976.87,126.91 L975.77,125.28 L974.66,123.65 L973.55,122.03 L972.43,120.40 L971.30,118.78 L970.17,117.15 L969.04,115.52 L967.90,113.90 L966.75,112.27 L965.60,110.65 L964.45,109.02 L963.29,107.39 L962.12,105.77 L960.95,104.14 L959.78,102.52 L958.60,100.89 L957.42,99.26 L956.23,97.64 L955.04,96.01 L953.85,94.39 L952.65,92.76 L951.45,91.13 L950.24,89.51 L949.03,87.88 L947.82,86.26 L946.61,84.63 L945.39,83.00 L944.16,81.38 L942.94,79.75 L941.71,78.13 L940.48,76.50 L939.24,74.87 L938.00,73.25 L936.76,71.62 L935.52,70.00 L934.27,68.37 L933.03,66.74 L931.78,65.12 L930.52,63.49 L929.27,61.87 L928.01,60.24 L926.75,58.61 L925.49,56.99 L924.23,55.36 L922.97,53.74 L921.70,52.11 L920.43,50.48 L919.17,48.86 L917.90,47.23 L916.63,45.61 L915.35,43.98 L914.08,42.35 L912.81,40.73 L911.53,39.10 L910.26,37.48 L908.98,35.85 L907.71,34.22 L906.43,32.60 L905.15,30.97 L903.88,29.35 L902.60,27.72"/><path stroke-dashoffset="1.4" d="M902.60,613.08 L903.45,611.45 L904.30,609.83 L905.15,608.20 L906.00,606.58 L906.86,604.95 L907.71,603.32 L908.56,601.70 L909.41,600.07 L910.25,598.45 L911.10,596.82 L911.95,595.19 L912.80,593.57 L913.64,591.94 L914.49,590.32 L915.33,588.69 L916.18,587.06 L917.02,585.44 L917.86,583.81 L918.70,582.19 L919.54,580.56 L920.38,578.93 L921.22,577.31 L922.05,575.68 L922.88,574.06 L923.72,572.43 L924.55,570.80 L925.37,569.18 L926.20,567.55 L927.03,565.93 L927.85,564.30 L928.67,562.67 L929.49,561.05 L930.31,559.42 L931.12,557.80 L931.94,556.17 L932.75,554.54 L933.56,552.92 L934.36,551.29 L935.17,549.67 L935.97,548.04 L936.77,546.41 L937.56,544.79 L938.36,543.16 L939.15,541.54 L939.93,539.91 L940.72,538.28 L941.50,536.66 L942.28,535.03 L943.06,533.41 L943.83,531.78 L944.60,530.15 L945.37,528.53 L946.13,526.90 L946.89,525.28 L947.65,523.65 L948.40,522.02 L949.15,520.40 L949.90,518.77 L950.64,517.15 L951.38,515.52 L952.12,513.89 L952.85,512.27 L953.57,510.64 L954.30,509.02 L955.02,507.39 L955.73,505.76 L956.45,504.14 L957.15,502.51 L957.86,500.89 L958.56,499.26 L959.25,497.63 L959.94,496.01 L960.63,494.38 L961.31,492.76 L961.99,491.13 L962.66,489.50 L963.33,487.88 L964.00,486.25 L964.66,484.63 L965.31,483.00 L965.96,481.37 L966.61,479.75 L967.25,478.12 L967.88,476.50 L968.51,474.87 L969.14,473.24 L969.76,471.62 L970.37,469.99 L970.98,468.37 L971.59,466.74 L972.18,465.11 L972.78,463.49 L973.37,461.86 L973.95,460.24 L974.53,458.61 L975.10,456.98 L975.67,455.36 L976.23,453.73 L976.79,452.11 L977.34,450.48 L977.88,448.85 L978.42,447.23 L978.95,445.60 L979.48,443.98 L980.00,442.35 L980.51,440.72 L981.02,439.10 L981.53,437.47 L982.03,435.85 L982.52,434.22 L983.00,432.59 L983.48,430.97 L983.95,429.34 L984.42,427.72 L984.88,426.09 L985.34,424.46 L985.78,422.84 L986.23,421.21 L986.66,419.59 L987.09,417.96 L987.51,416.33 L987.93,414.71 L988.34,413.08 L988.74,411.46 L989.14,409.83 L989.53,408.20 L989.91,406.58 L990.29,404.95 L990.66,403.33 L991.02,401.70 L991.38,400.07 L991.73,398.45 L992.07,396.82 L992.40,395.20 L992.73,393.57 L993.06,391.94 L993.37,390.32 L993.68,388.69 L993.98,387.07 L994.28,385.44 L994.56,383.81 L994.84,382.19 L995.12,380.56 L995.39,378.94 L995.64,377.31 L995.90,375.68 L996.14,374.06 L996.38,372.43 L996.61,370.81 L996.84,369.18 L997.05,367.55 L997.26,365.93 L997.46,364.30 L997.66,362.68 L997.85,361.05 L998.03,359.42 L998.20,357.80 L998.37,356.17 L998.53,354.55 L998.68,352.92 L998.82,351.29 L998.96,349.67 L999.09,348.04 L999.21,346.42 L999.33,344.79 L999.43,343.16 L999.53,341.54 L999.63,339.91 L999.71,338.29 L999.79,336.66 L999.86,335.03 L999.92,333.41 L999.98,331.78 L1000.03,330.16 L1000.07,328.53 L1000.10,326.90 L1000.13,325.28 L1000.15,323.65 L1000.16,322.03 L1000.16,320.40 L1000.16,318.77 L1000.15,317.15 L1000.13,315.52 L1000.10,313.90 L1000.07,312.27 L1000.03,310.64 L999.98,309.02 L999.92,307.39 L999.86,305.77 L999.79,304.14 L999.71,302.51 L999.63,300.89 L999.53,299.26 L999.43,297.64 L999.33,296.01 L999.21,294.38 L999.09,292.76 L998.96,291.13 L998.82,289.51 L998.68,287.88 L998.53,286.25 L998.37,284.63 L998.20,283.00 L998.03,281.38 L997.85,279.75 L997.66,278.12 L997.46,276.50 L997.26,274.87 L997.05,273.25 L996.84,271.62 L996.61,269.99 L996.38,268.37 L996.14,266.74 L995.90,265.12 L995.64,263.49 L995.39,261.86 L995.12,260.24 L994.84,258.61 L994.56,256.99 L994.28,255.36 L993.98,253.73 L993.68,252.11 L993.37,250.48 L993.06,248.86 L992.73,247.23 L992.40,245.60 L992.07,243.98 L991.73,242.35 L991.38,240.73 L991.02,239.10 L990.66,237.47 L990.29,235.85 L989.91,234.22 L989.53,232.60 L989.14,230.97 L988.74,229.34 L988.34,227.72 L987.93,226.09 L987.51,224.47 L987.09,222.84 L986.66,221.21 L986.23,219.59 L985.78,217.96 L985.34,216.34 L984.88,214.71 L984.42,213.08 L983.95,211.46 L983.48,209.83 L983.00,208.21 L982.52,206.58 L982.03,204.95 L981.53,203.33 L981.02,201.70 L980.51,200.08 L980.00,198.45 L979.48,196.82 L978.95,195.20 L978.42,193.57 L977.88,191.95 L977.34,190.32 L976.79,188.69 L976.23,187.07 L975.67,185.44 L975.10,183.82 L974.53,182.19 L973.95,180.56 L973.37,178.94 L972.78,177.31 L972.18,175.69 L971.59,174.06 L970.98,172.43 L970.37,170.81 L969.76,169.18 L969.14,167.56 L968.51,165.93 L967.88,164.30 L967.25,162.68 L966.61,161.05 L965.96,159.43 L965.31,157.80 L964.66,156.17 L964.00,154.55 L963.33,152.92 L962.66,151.30 L961.99,149.67 L961.31,148.04 L960.63,146.42 L959.94,144.79 L959.25,143.17 L958.56,141.54 L957.86,139.91 L957.15,138.29 L956.45,136.66 L955.73,135.04 L955.02,133.41 L954.30,131.78 L953.57,130.16 L952.85,128.53 L952.12,126.91 L951.38,125.28 L950.64,123.65 L949.90,122.03 L949.15,120.40 L948.40,118.78 L947.65,117.15 L946.89,115.52 L946.13,113.90 L945.37,112.27 L944.60,110.65 L943.83,109.02 L943.06,107.39 L942.28,105.77 L941.50,104.14 L940.72,102.52 L939.93,100.89 L939.15,99.26 L938.36,97.64 L937.56,96.01 L936.77,94.39 L935.97,92.76 L935.17,91.13 L934.36,89.51 L933.56,87.88 L932.75,86.26 L931.94,84.63 L931.12,83.00 L930.31,81.38 L929.49,79.75 L928.67,78.13 L927.85,76.50 L927.03,74.87 L926.20,73.25 L925.37,71.62 L924.55,70.00 L923.72,68.37 L922.88,66.74 L922.05,65.12 L921.22,63.49 L920.38,61.87 L919.54,60.24 L918.70,58.61 L917.86,56.99 L917.02,55.36 L916.18,53.74 L915.33,52.11 L914.49,50.48 L913.64,48.86 L912.80,47.23 L911.95,45.61 L911.10,43.98 L910.25,42.35 L909.41,40.73 L908.56,39.10 L907.71,37.48 L906.86,35.85 L906.00,34.22 L905.15,32.60 L904.30,30.97 L903.45,29.35 L902.60,27.72"/><path stroke-dashoffset="1.4" d="M902.60,613.08 L903.03,611.45 L903.45,609.83 L903.88,608.20 L904.30,606.58 L904.73,604.95 L905.15,603.32 L905.58,601.70 L906.00,600.07 L906.43,598.45 L906.85,596.82 L907.28,595.19 L907.70,593.57 L908.12,591.94 L908.54,590.32 L908.97,588.69 L909.39,587.06 L909.81,585.44 L910.23,583.81 L910.65,582.19 L911.07,580.56 L911.49,578.93 L911.91,577.31 L912.33,575.68 L912.74,574.06 L913.16,572.43 L913.57,570.80 L913.99,569.18 L914.40,567.55 L914.81,565.93 L915.23,564.30 L915.64,562.67 L916.05,561.05 L916.45,559.42 L916.86,557.80 L917.27,556.17 L917.67,554.54 L918.08,552.92 L918.48,551.29 L918.88,549.67 L919.28,548.04 L919.68,546.41 L920.08,544.79 L920.48,543.16 L920.87,541.54 L921.27,539.91 L921.66,538.28 L922.05,536.66 L922.44,535.03 L922.83,533.41 L923.22,531.78 L923.60,530.15 L923.98,528.53 L924.37,526.90 L924.75,525.28 L925.12,523.65 L925.50,522.02 L925.88,520.40 L926.25,518.77 L926.62,517.15 L926.99,515.52 L927.36,513.89 L927.72,512.27 L928.09,510.64 L928.45,509.02 L928.81,507.39 L929.17,505.76 L929.52,504.14 L929.88,502.51 L930.23,500.89 L930.58,499.26 L930.93,497.63 L931.27,496.01 L931.62,494.38 L931.96,492.76 L932.30,491.13 L932.63,489.50 L932.97,487.88 L933.30,486.25 L933.63,484.63 L933.96,483.00 L934.28,481.37 L934.60,479.75 L934.92,478.12 L935.24,476.50 L935.56,474.87 L935.87,473.24 L936.18,471.62 L936.49,469.99 L936.79,468.37 L937.09,466.74 L937.39,465.11 L937.69,463.49 L937.98,461.86 L938.28,460.24 L938.56,458.61 L938.85,456.98 L939.13,455.36 L939.41,453.73 L939.69,452.11 L939.97,450.48 L940.24,448.85 L940.51,447.23 L940.78,445.60 L941.04,443.98 L941.30,442.35 L941.56,440.72 L941.81,439.10 L942.06,437.47 L942.31,435.85 L942.56,434.22 L942.80,432.59 L943.04,430.97 L943.28,429.34 L943.51,427.72 L943.74,426.09 L943.97,424.46 L944.19,422.84 L944.41,421.21 L944.63,419.59 L944.84,417.96 L945.06,416.33 L945.26,414.71 L945.47,413.08 L945.67,411.46 L945.87,409.83 L946.06,408.20 L946.25,406.58 L946.44,404.95 L946.63,403.33 L946.81,401.70 L946.99,400.07 L947.16,398.45 L947.33,396.82 L947.50,395.20 L947.67,393.57 L947.83,391.94 L947.99,390.32 L948.14,388.69 L948.29,387.07 L948.44,385.44 L948.58,383.81 L948.72,382.19 L948.86,380.56 L948.99,378.94 L949.12,377.31 L949.25,375.68 L949.37,374.06 L949.49,372.43 L949.61,370.81 L949.72,369.18 L949.83,367.55 L949.93,365.93 L950.03,364.30 L950.13,362.68 L950.22,361.05 L950.31,359.42 L950.40,357.80 L950.48,356.17 L950.56,354.55 L950.64,352.92 L950.71,351.29 L950.78,349.67 L950.84,348.04 L950.91,346.42 L950.96,344.79 L951.02,343.16 L951.07,341.54 L951.11,339.91 L951.16,338.29 L951.19,336.66 L951.23,335.03 L951.26,333.41 L951.29,331.78 L951.31,330.16 L951.33,328.53 L951.35,326.90 L951.36,325.28 L951.37,323.65 L951.38,322.03 L951.38,320.40 L951.38,318.77 L951.37,317.15 L951.36,315.52 L951.35,313.90 L951.33,312.27 L951.31,310.64 L951.29,309.02 L951.26,307.39 L951.23,305.77 L951.19,304.14 L951.16,302.51 L951.11,300.89 L951.07,299.26 L951.02,297.64 L950.96,296.01 L950.91,294.38 L950.84,292.76 L950.78,291.13 L950.71,289.51 L950.64,287.88 L950.56,286.25 L950.48,284.63 L950.40,283.00 L950.31,281.38 L950.22,279.75 L950.13,278.12 L950.03,276.50 L949.93,274.87 L949.83,273.25 L949.72,271.62 L949.61,269.99 L949.49,268.37 L949.37,266.74 L949.25,265.12 L949.12,263.49 L948.99,261.86 L948.86,260.24 L948.72,258.61 L948.58,256.99 L948.44,255.36 L948.29,253.73 L948.14,252.11 L947.99,250.48 L947.83,248.86 L947.67,247.23 L947.50,245.60 L947.33,243.98 L947.16,242.35 L946.99,240.73 L946.81,239.10 L946.63,237.47 L946.44,235.85 L946.25,234.22 L946.06,232.60 L945.87,230.97 L945.67,229.34 L945.47,227.72 L945.26,226.09 L945.06,224.47 L944.84,222.84 L944.63,221.21 L944.41,219.59 L944.19,217.96 L943.97,216.34 L943.74,214.71 L943.51,213.08 L943.28,211.46 L943.04,209.83 L942.80,208.21 L942.56,206.58 L942.31,204.95 L942.06,203.33 L941.81,201.70 L941.56,200.08 L941.30,198.45 L941.04,196.82 L940.78,195.20 L940.51,193.57 L940.24,191.95 L939.97,190.32 L939.69,188.69 L939.41,187.07 L939.13,185.44 L938.85,183.82 L938.56,182.19 L938.28,180.56 L937.98,178.94 L937.69,177.31 L937.39,175.69 L937.09,174.06 L936.79,172.43 L936.49,170.81 L936.18,169.18 L935.87,167.56 L935.56,165.93 L935.24,164.30 L934.92,162.68 L934.60,161.05 L934.28,159.43 L933.96,157.80 L933.63,156.17 L933.30,154.55 L932.97,152.92 L932.63,151.30 L932.30,149.67 L931.96,148.04 L931.62,146.42 L931.27,144.79 L930.93,143.17 L930.58,141.54 L930.23,139.91 L929.88,138.29 L929.52,136.66 L929.17,135.04 L928.81,133.41 L928.45,131.78 L928.09,130.16 L927.72,128.53 L927.36,126.91 L926.99,125.28 L926.62,123.65 L926.25,122.03 L925.88,120.40 L925.50,118.78 L925.12,117.15 L924.75,115.52 L924.37,113.90 L923.98,112.27 L923.60,110.65 L923.22,109.02 L922.83,107.39 L922.44,105.77 L922.05,104.14 L921.66,102.52 L921.27,100.89 L920.87,99.26 L920.48,97.64 L920.08,96.01 L919.68,94.39 L919.28,92.76 L918.88,91.13 L918.48,89.51 L918.08,87.88 L917.67,86.26 L917.27,84.63 L916.86,83.00 L916.45,81.38 L916.05,79.75 L915.64,78.13 L915.23,76.50 L914.81,74.87 L914.40,73.25 L913.99,71.62 L913.57,70.00 L913.16,68.37 L912.74,66.74 L912.33,65.12 L911.91,63.49 L911.49,61.87 L911.07,60.24 L910.65,58.61 L910.23,56.99 L909.81,55.36 L909.39,53.74 L908.97,52.11 L908.54,50.48 L908.12,48.86 L907.70,47.23 L907.28,45.61 L906.85,43.98 L906.43,42.35 L906.00,40.73 L905.58,39.10 L905.15,37.48 L904.73,35.85 L904.30,34.22 L903.88,32.60 L903.45,30.97 L903.03,29.35 L902.60,27.72"/><path stroke-dashoffset="1.4" d="M902.00,613.08 L902.00,611.45 L902.00,609.83 L902.00,608.20 L902.00,606.58 L902.00,604.95 L902.00,603.32 L902.00,601.70 L902.00,600.07 L902.00,598.45 L902.00,596.82 L902.00,595.19 L902.00,593.57 L902.00,591.94 L902.00,590.32 L902.00,588.69 L902.00,587.06 L902.00,585.44 L902.00,583.81 L902.00,582.19 L902.00,580.56 L902.00,578.93 L902.00,577.31 L902.00,575.68 L902.00,574.06 L902.00,572.43 L902.00,570.80 L902.00,569.18 L902.00,567.55 L902.00,565.93 L902.00,564.30 L902.00,562.67 L902.00,561.05 L902.00,559.42 L902.00,557.80 L902.00,556.17 L902.00,554.54 L902.00,552.92 L902.00,551.29 L902.00,549.67 L902.00,548.04 L902.00,546.41 L902.00,544.79 L902.00,543.16 L902.00,541.54 L902.00,539.91 L902.00,538.28 L902.00,536.66 L902.00,535.03 L902.00,533.41 L902.00,531.78 L902.00,530.15 L902.00,528.53 L902.00,526.90 L902.00,525.28 L902.00,523.65 L902.00,522.02 L902.00,520.40 L902.00,518.77 L902.00,517.15 L902.00,515.52 L902.00,513.89 L902.00,512.27 L902.00,510.64 L902.00,509.02 L902.00,507.39 L902.00,505.76 L902.00,504.14 L902.00,502.51 L902.00,500.89 L902.00,499.26 L902.00,497.63 L902.00,496.01 L902.00,494.38 L902.00,492.76 L902.00,491.13 L902.00,489.50 L902.00,487.88 L902.00,486.25 L902.00,484.63 L902.00,483.00 L902.00,481.37 L902.00,479.75 L902.00,478.12 L902.00,476.50 L902.00,474.87 L902.00,473.24 L902.00,471.62 L902.00,469.99 L902.00,468.37 L902.00,466.74 L902.00,465.11 L902.00,463.49 L902.00,461.86 L902.00,460.24 L902.00,458.61 L902.00,456.98 L902.00,455.36 L902.00,453.73 L902.00,452.11 L902.00,450.48 L902.00,448.85 L902.00,447.23 L902.00,445.60 L902.00,443.98 L902.00,442.35 L902.00,440.72 L902.00,439.10 L902.00,437.47 L902.00,435.85 L902.00,434.22 L902.00,432.59 L902.00,430.97 L902.00,429.34 L902.00,427.72 L902.00,426.09 L902.00,424.46 L902.00,422.84 L902.00,421.21 L902.00,419.59 L902.00,417.96 L902.00,416.33 L902.00,414.71 L902.00,413.08 L902.00,411.46 L902.00,409.83 L902.00,408.20 L902.00,406.58 L902.00,404.95 L902.00,403.33 L902.00,401.70 L902.00,400.07 L902.00,398.45 L902.00,396.82 L902.00,395.20 L902.00,393.57 L902.00,391.94 L902.00,390.32 L902.00,388.69 L902.00,387.07 L902.00,385.44 L902.00,383.81 L902.00,382.19 L902.00,380.56 L902.00,378.94 L902.00,377.31 L902.00,375.68 L902.00,374.06 L902.00,372.43 L902.00,370.81 L902.00,369.18 L902.00,367.55 L902.00,365.93 L902.00,364.30 L902.00,362.68 L902.00,361.05 L902.00,359.42 L902.00,357.80 L902.00,356.17 L902.00,354.55 L902.00,352.92 L902.00,351.29 L902.00,349.67 L902.00,348.04 L902.00,346.42 L902.00,344.79 L902.00,343.16 L902.00,341.54 L902.00,339.91 L902.00,338.29 L902.00,336.66 L902.00,335.03 L902.00,333.41 L902.00,331.78 L902.00,330.16 L902.00,328.53 L902.00,326.90 L902.00,325.28 L902.00,323.65 L902.00,322.03 L902.00,320.40 L902.00,318.77 L902.00,317.15 L902.00,315.52 L902.00,313.90 L902.00,312.27 L902.00,310.64 L902.00,309.02 L902.00,307.39 L902.00,305.77 L902.00,304.14 L902.00,302.51 L902.00,300.89 L902.00,299.26 L902.00,297.64 L902.00,296.01 L902.00,294.38 L902.00,292.76 L902.00,291.13 L902.00,289.51 L902.00,287.88 L902.00,286.25 L902.00,284.63 L902.00,283.00 L902.00,281.38 L902.00,279.75 L902.00,278.12 L902.00,276.50 L902.00,274.87 L902.00,273.25 L902.00,271.62 L902.00,269.99 L902.00,268.37 L902.00,266.74 L902.00,265.12 L902.00,263.49 L902.00,261.86 L902.00,260.24 L902.00,258.61 L902.00,256.99 L902.00,255.36 L902.00,253.73 L902.00,252.11 L902.00,250.48 L902.00,248.86 L902.00,247.23 L902.00,245.60 L902.00,243.98 L902.00,242.35 L902.00,240.73 L902.00,239.10 L902.00,237.47 L902.00,235.85 L902.00,234.22 L902.00,232.60 L902.00,230.97 L902.00,229.34 L902.00,227.72 L902.00,226.09 L902.00,224.47 L902.00,222.84 L902.00,221.21 L902.00,219.59 L902.00,217.96 L902.00,216.34 L902.00,214.71 L902.00,213.08 L902.00,211.46 L902.00,209.83 L902.00,208.21 L902.00,206.58 L902.00,204.95 L902.00,203.33 L902.00,201.70 L902.00,200.08 L902.00,198.45 L902.00,196.82 L902.00,195.20 L902.00,193.57 L902.00,191.95 L902.00,190.32 L902.00,188.69 L902.00,187.07 L902.00,185.44 L902.00,183.82 L902.00,182.19 L902.00,180.56 L902.00,178.94 L902.00,177.31 L902.00,175.69 L902.00,174.06 L902.00,172.43 L902.00,170.81 L902.00,169.18 L902.00,167.56 L902.00,165.93 L902.00,164.30 L902.00,162.68 L902.00,161.05 L902.00,159.43 L902.00,157.80 L902.00,156.17 L902.00,154.55 L902.00,152.92 L902.00,151.30 L902.00,149.67 L902.00,148.04 L902.00,146.42 L902.00,144.79 L902.00,143.17 L902.00,141.54 L902.00,139.91 L902.00,138.29 L902.00,136.66 L902.00,135.04 L902.00,133.41 L902.00,131.78 L902.00,130.16 L902.00,128.53 L902.00,126.91 L902.00,125.28 L902.00,123.65 L902.00,122.03 L902.00,120.40 L902.00,118.78 L902.00,117.15 L902.00,115.52 L902.00,113.90 L902.00,112.27 L902.00,110.65 L902.00,109.02 L902.00,107.39 L902.00,105.77 L902.00,104.14 L902.00,102.52 L902.00,100.89 L902.00,99.26 L902.00,97.64 L902.00,96.01 L902.00,94.39 L902.00,92.76 L902.00,91.13 L902.00,89.51 L902.00,87.88 L902.00,86.26 L902.00,84.63 L902.00,83.00 L902.00,81.38 L902.00,79.75 L902.00,78.13 L902.00,76.50 L902.00,74.87 L902.00,73.25 L902.00,71.62 L902.00,70.00 L902.00,68.37 L902.00,66.74 L902.00,65.12 L902.00,63.49 L902.00,61.87 L902.00,60.24 L902.00,58.61 L902.00,56.99 L902.00,55.36 L902.00,53.74 L902.00,52.11 L902.00,50.48 L902.00,48.86 L902.00,47.23 L902.00,45.61 L902.00,43.98 L902.00,42.35 L902.00,40.73 L902.00,39.10 L902.00,37.48 L902.00,35.85 L902.00,34.22 L902.00,32.60 L902.00,30.97 L902.00,29.35 L902.00,27.72"/><path stroke-dashoffset="1.4" d="M902.60,613.08 L902.17,611.45 L901.75,609.83 L901.32,608.20 L900.90,606.58 L900.47,604.95 L900.05,603.32 L899.62,601.70 L899.20,600.07 L898.77,598.45 L898.35,596.82 L897.92,595.19 L897.50,593.57 L897.08,591.94 L896.66,590.32 L896.23,588.69 L895.81,587.06 L895.39,585.44 L894.97,583.81 L894.55,582.19 L894.13,580.56 L893.71,578.93 L893.29,577.31 L892.87,575.68 L892.46,574.06 L892.04,572.43 L891.63,570.80 L891.21,569.18 L890.80,567.55 L890.39,565.93 L889.97,564.30 L889.56,562.67 L889.15,561.05 L888.75,559.42 L888.34,557.80 L887.93,556.17 L887.53,554.54 L887.12,552.92 L886.72,551.29 L886.32,549.67 L885.92,548.04 L885.52,546.41 L885.12,544.79 L884.72,543.16 L884.33,541.54 L883.93,539.91 L883.54,538.28 L883.15,536.66 L882.76,535.03 L882.37,533.41 L881.98,531.78 L881.60,530.15 L881.22,528.53 L880.83,526.90 L880.45,525.28 L880.08,523.65 L879.70,522.02 L879.32,520.40 L878.95,518.77 L878.58,517.15 L878.21,515.52 L877.84,513.89 L877.48,512.27 L877.11,510.64 L876.75,509.02 L876.39,507.39 L876.03,505.76 L875.68,504.14 L875.32,502.51 L874.97,500.89 L874.62,499.26 L874.27,497.63 L873.93,496.01 L873.58,494.38 L873.24,492.76 L872.90,491.13 L872.57,489.50 L872.23,487.88 L871.90,486.25 L871.57,484.63 L871.24,483.00 L870.92,481.37 L870.60,479.75 L870.28,478.12 L869.96,476.50 L869.64,474.87 L869.33,473.24 L869.02,471.62 L868.71,469.99 L868.41,468.37 L868.11,466.74 L867.81,465.11 L867.51,463.49 L867.22,461.86 L866.92,460.24 L866.64,458.61 L866.35,456.98 L866.07,455.36 L865.79,453.73 L865.51,452.11 L865.23,450.48 L864.96,448.85 L864.69,447.23 L864.42,445.60 L864.16,443.98 L863.90,442.35 L863.64,440.72 L863.39,439.10 L863.14,437.47 L862.89,435.85 L862.64,434.22 L862.40,432.59 L862.16,430.97 L861.92,429.34 L861.69,427.72 L861.46,426.09 L861.23,424.46 L861.01,422.84 L860.79,421.21 L860.57,419.59 L860.36,417.96 L860.14,416.33 L859.94,414.71 L859.73,413.08 L859.53,411.46 L859.33,409.83 L859.14,408.20 L858.95,406.58 L858.76,404.95 L858.57,403.33 L858.39,401.70 L858.21,400.07 L858.04,398.45 L857.87,396.82 L857.70,395.20 L857.53,393.57 L857.37,391.94 L857.21,390.32 L857.06,388.69 L856.91,387.07 L856.76,385.44 L856.62,383.81 L856.48,382.19 L856.34,380.56 L856.21,378.94 L856.08,377.31 L855.95,375.68 L855.83,374.06 L855.71,372.43 L855.59,370.81 L855.48,369.18 L855.37,367.55 L855.27,365.93 L855.17,364.30 L855.07,362.68 L854.98,361.05 L854.89,359.42 L854.80,357.80 L854.72,356.17 L854.64,354.55 L854.56,352.92 L854.49,351.29 L854.42,349.67 L854.36,348.04 L854.29,346.42 L854.24,344.79 L854.18,343.16 L854.13,341.54 L854.09,339.91 L854.04,338.29 L854.01,336.66 L853.97,335.03 L853.94,333.41 L853.91,331.78 L853.89,330.16 L853.87,328.53 L853.85,326.90 L853.84,325.28 L853.83,323.65 L853.82,322.03 L853.82,320.40 L853.82,318.77 L853.83,317.15 L853.84,315.52 L853.85,313.90 L853.87,312.27 L853.89,310.64 L853.91,309.02 L853.94,307.39 L853.97,305.77 L854.01,304.14 L854.04,302.51 L854.09,300.89 L854.13,299.26 L854.18,297.64 L854.24,296.01 L854.29,294.38 L854.36,292.76 L854.42,291.13 L854.49,289.51 L854.56,287.88 L854.64,286.25 L854.72,284.63 L854.80,283.00 L854.89,281.38 L854.98,279.75 L855.07,278.12 L855.17,276.50 L855.27,274.87 L855.37,273.25 L855.48,271.62 L855.59,269.99 L855.71,268.37 L855.83,266.74 L855.95,265.12 L856.08,263.49 L856.21,261.86 L856.34,260.24 L856.48,258.61 L856.62,256.99 L856.76,255.36 L856.91,253.73 L857.06,252.11 L857.21,250.48 L857.37,248.86 L857.53,247.23 L857.70,245.60 L857.87,243.98 L858.04,242.35 L858.21,240.73 L858.39,239.10 L858.57,237.47 L858.76,235.85 L858.95,234.22 L859.14,232.60 L859.33,230.97 L859.53,229.34 L859.73,227.72 L859.94,226.09 L860.14,224.47 L860.36,222.84 L860.57,221.21 L860.79,219.59 L861.01,217.96 L861.23,216.34 L861.46,214.71 L861.69,213.08 L861.92,211.46 L862.16,209.83 L862.40,208.21 L862.64,206.58 L862.89,204.95 L863.14,203.33 L863.39,201.70 L863.64,200.08 L863.90,198.45 L864.16,196.82 L864.42,195.20 L864.69,193.57 L864.96,191.95 L865.23,190.32 L865.51,188.69 L865.79,187.07 L866.07,185.44 L866.35,183.82 L866.64,182.19 L866.92,180.56 L867.22,178.94 L867.51,177.31 L867.81,175.69 L868.11,174.06 L868.41,172.43 L868.71,170.81 L869.02,169.18 L869.33,167.56 L869.64,165.93 L869.96,164.30 L870.28,162.68 L870.60,161.05 L870.92,159.43 L871.24,157.80 L871.57,156.17 L871.90,154.55 L872.23,152.92 L872.57,151.30 L872.90,149.67 L873.24,148.04 L873.58,146.42 L873.93,144.79 L874.27,143.17 L874.62,141.54 L874.97,139.91 L875.32,138.29 L875.68,136.66 L876.03,135.04 L876.39,133.41 L876.75,131.78 L877.11,130.16 L877.48,128.53 L877.84,126.91 L878.21,125.28 L878.58,123.65 L878.95,122.03 L879.32,120.40 L879.70,118.78 L880.08,117.15 L880.45,115.52 L880.83,113.90 L881.22,112.27 L881.60,110.65 L881.98,109.02 L882.37,107.39 L882.76,105.77 L883.15,104.14 L883.54,102.52 L883.93,100.89 L884.33,99.26 L884.72,97.64 L885.12,96.01 L885.52,94.39 L885.92,92.76 L886.32,91.13 L886.72,89.51 L887.12,87.88 L887.53,86.26 L887.93,84.63 L888.34,83.00 L888.75,81.38 L889.15,79.75 L889.56,78.13 L889.97,76.50 L890.39,74.87 L890.80,73.25 L891.21,71.62 L891.63,70.00 L892.04,68.37 L892.46,66.74 L892.87,65.12 L893.29,63.49 L893.71,61.87 L894.13,60.24 L894.55,58.61 L894.97,56.99 L895.39,55.36 L895.81,53.74 L896.23,52.11 L896.66,50.48 L897.08,48.86 L897.50,47.23 L897.92,45.61 L898.35,43.98 L898.77,42.35 L899.20,40.73 L899.62,39.10 L900.05,37.48 L900.47,35.85 L900.90,34.22 L901.32,32.60 L901.75,30.97 L902.17,29.35 L902.60,27.72"/><path stroke-dashoffset="1.4" d="M902.60,613.08 L901.75,611.45 L900.90,609.83 L900.05,608.20 L899.20,606.58 L898.34,604.95 L897.49,603.32 L896.64,601.70 L895.79,600.07 L894.95,598.45 L894.10,596.82 L893.25,595.19 L892.40,593.57 L891.56,591.94 L890.71,590.32 L889.87,588.69 L889.02,587.06 L888.18,585.44 L887.34,583.81 L886.50,582.19 L885.66,580.56 L884.82,578.93 L883.98,577.31 L883.15,575.68 L882.32,574.06 L881.48,572.43 L880.65,570.80 L879.83,569.18 L879.00,567.55 L878.17,565.93 L877.35,564.30 L876.53,562.67 L875.71,561.05 L874.89,559.42 L874.08,557.80 L873.26,556.17 L872.45,554.54 L871.64,552.92 L870.84,551.29 L870.03,549.67 L869.23,548.04 L868.43,546.41 L867.64,544.79 L866.84,543.16 L866.05,541.54 L865.27,539.91 L864.48,538.28 L863.70,536.66 L862.92,535.03 L862.14,533.41 L861.37,531.78 L860.60,530.15 L859.83,528.53 L859.07,526.90 L858.31,525.28 L857.55,523.65 L856.80,522.02 L856.05,520.40 L855.30,518.77 L854.56,517.15 L853.82,515.52 L853.08,513.89 L852.35,512.27 L851.63,510.64 L850.90,509.02 L850.18,507.39 L849.47,505.76 L848.75,504.14 L848.05,502.51 L847.34,500.89 L846.64,499.26 L845.95,497.63 L845.26,496.01 L844.57,494.38 L843.89,492.76 L843.21,491.13 L842.54,489.50 L841.87,487.88 L841.20,486.25 L840.54,484.63 L839.89,483.00 L839.24,481.37 L838.59,479.75 L837.95,478.12 L837.32,476.50 L836.69,474.87 L836.06,473.24 L835.44,471.62 L834.83,469.99 L834.22,468.37 L833.61,466.74 L833.02,465.11 L832.42,463.49 L831.83,461.86 L831.25,460.24 L830.67,458.61 L830.10,456.98 L829.53,455.36 L828.97,453.73 L828.41,452.11 L827.86,450.48 L827.32,448.85 L826.78,447.23 L826.25,445.60 L825.72,443.98 L825.20,442.35 L824.69,440.72 L824.18,439.10 L823.67,437.47 L823.17,435.85 L822.68,434.22 L822.20,432.59 L821.72,430.97 L821.25,429.34 L820.78,427.72 L820.32,426.09 L819.86,424.46 L819.42,422.84 L818.97,421.21 L818.54,419.59 L818.11,417.96 L817.69,416.33 L817.27,414.71 L816.86,413.08 L816.46,411.46 L816.06,409.83 L815.67,408.20 L815.29,406.58 L814.91,404.95 L814.54,403.33 L814.18,401.70 L813.82,400.07 L813.47,398.45 L813.13,396.82 L812.80,395.20 L812.47,393.57 L812.14,391.94 L811.83,390.32 L811.52,388.69 L811.22,387.07 L810.92,385.44 L810.64,383.81 L810.36,382.19 L810.08,380.56 L809.81,378.94 L809.56,377.31 L809.30,375.68 L809.06,374.06 L808.82,372.43 L808.59,370.81 L808.36,369.18 L808.15,367.55 L807.94,365.93 L807.74,364.30 L807.54,362.68 L807.35,361.05 L807.17,359.42 L807.00,357.80 L806.83,356.17 L806.67,354.55 L806.52,352.92 L806.38,351.29 L806.24,349.67 L806.11,348.04 L805.99,346.42 L805.87,344.79 L805.77,343.16 L805.67,341.54 L805.57,339.91 L805.49,338.29 L805.41,336.66 L805.34,335.03 L805.28,333.41 L805.22,331.78 L805.17,330.16 L805.13,328.53 L805.10,326.90 L805.07,325.28 L805.05,323.65 L805.04,322.03 L805.04,320.40 L805.04,318.77 L805.05,317.15 L805.07,315.52 L805.10,313.90 L805.13,312.27 L805.17,310.64 L805.22,309.02 L805.28,307.39 L805.34,305.77 L805.41,304.14 L805.49,302.51 L805.57,300.89 L805.67,299.26 L805.77,297.64 L805.87,296.01 L805.99,294.38 L806.11,292.76 L806.24,291.13 L806.38,289.51 L806.52,287.88 L806.67,286.25 L806.83,284.63 L807.00,283.00 L807.17,281.38 L807.35,279.75 L807.54,278.12 L807.74,276.50 L807.94,274.87 L808.15,273.25 L808.36,271.62 L808.59,269.99 L808.82,268.37 L809.06,266.74 L809.30,265.12 L809.56,263.49 L809.81,261.86 L810.08,260.24 L810.36,258.61 L810.64,256.99 L810.92,255.36 L811.22,253.73 L811.52,252.11 L811.83,250.48 L812.14,248.86 L812.47,247.23 L812.80,245.60 L813.13,243.98 L813.47,242.35 L813.82,240.73 L814.18,239.10 L814.54,237.47 L814.91,235.85 L815.29,234.22 L815.67,232.60 L816.06,230.97 L816.46,229.34 L816.86,227.72 L817.27,226.09 L817.69,224.47 L818.11,222.84 L818.54,221.21 L818.97,219.59 L819.42,217.96 L819.86,216.34 L820.32,214.71 L820.78,213.08 L821.25,211.46 L821.72,209.83 L822.20,208.21 L822.68,206.58 L823.17,204.95 L823.67,203.33 L824.18,201.70 L824.69,200.08 L825.20,198.45 L825.72,196.82 L826.25,195.20 L826.78,193.57 L827.32,191.95 L827.86,190.32 L828.41,188.69 L828.97,187.07 L829.53,185.44 L830.10,183.82 L830.67,182.19 L831.25,180.56 L831.83,178.94 L832.42,177.31 L833.02,175.69 L833.61,174.06 L834.22,172.43 L834.83,170.81 L835.44,169.18 L836.06,167.56 L836.69,165.93 L837.32,164.30 L837.95,162.68 L838.59,161.05 L839.24,159.43 L839.89,157.80 L840.54,156.17 L841.20,154.55 L841.87,152.92 L842.54,151.30 L843.21,149.67 L843.89,148.04 L844.57,146.42 L845.26,144.79 L845.95,143.17 L846.64,141.54 L847.34,139.91 L848.05,138.29 L848.75,136.66 L849.47,135.04 L850.18,133.41 L850.90,131.78 L851.63,130.16 L852.35,128.53 L853.08,126.91 L853.82,125.28 L854.56,123.65 L855.30,122.03 L856.05,120.40 L856.80,118.78 L857.55,117.15 L858.31,115.52 L859.07,113.90 L859.83,112.27 L860.60,110.65 L861.37,109.02 L862.14,107.39 L862.92,105.77 L863.70,104.14 L864.48,102.52 L865.27,100.89 L866.05,99.26 L866.84,97.64 L867.64,96.01 L868.43,94.39 L869.23,92.76 L870.03,91.13 L870.84,89.51 L871.64,87.88 L872.45,86.26 L873.26,84.63 L874.08,83.00 L874.89,81.38 L875.71,79.75 L876.53,78.13 L877.35,76.50 L878.17,74.87 L879.00,73.25 L879.83,71.62 L880.65,70.00 L881.48,68.37 L882.32,66.74 L883.15,65.12 L883.98,63.49 L884.82,61.87 L885.66,60.24 L886.50,58.61 L887.34,56.99 L888.18,55.36 L889.02,53.74 L889.87,52.11 L890.71,50.48 L891.56,48.86 L892.40,47.23 L893.25,45.61 L894.10,43.98 L894.95,42.35 L895.79,40.73 L896.64,39.10 L897.49,37.48 L898.34,35.85 L899.20,34.22 L900.05,32.60 L900.90,30.97 L901.75,29.35 L902.60,27.72"/><path stroke-dashoffset="1.4" d="M902.60,613.08 L901.32,611.45 L900.05,609.83 L898.77,608.20 L897.49,606.58 L896.22,604.95 L894.94,603.32 L893.67,601.70 L892.39,600.07 L891.12,598.45 L889.85,596.82 L888.57,595.19 L887.30,593.57 L886.03,591.94 L884.77,590.32 L883.50,588.69 L882.23,587.06 L880.97,585.44 L879.71,583.81 L878.45,582.19 L877.19,580.56 L875.93,578.93 L874.68,577.31 L873.42,575.68 L872.17,574.06 L870.93,572.43 L869.68,570.80 L868.44,569.18 L867.20,567.55 L865.96,565.93 L864.72,564.30 L863.49,562.67 L862.26,561.05 L861.04,559.42 L859.81,557.80 L858.59,556.17 L857.38,554.54 L856.17,552.92 L854.96,551.29 L853.75,549.67 L852.55,548.04 L851.35,546.41 L850.16,544.79 L848.97,543.16 L847.78,541.54 L846.60,539.91 L845.42,538.28 L844.25,536.66 L843.08,535.03 L841.91,533.41 L840.75,531.78 L839.60,530.15 L838.45,528.53 L837.30,526.90 L836.16,525.28 L835.03,523.65 L833.90,522.02 L832.77,520.40 L831.65,518.77 L830.54,517.15 L829.43,515.52 L828.33,513.89 L827.23,512.27 L826.14,510.64 L825.05,509.02 L823.97,507.39 L822.90,505.76 L821.83,504.14 L820.77,502.51 L819.71,500.89 L818.66,499.26 L817.62,497.63 L816.58,496.01 L815.55,494.38 L814.53,492.76 L813.51,491.13 L812.50,489.50 L811.50,487.88 L810.51,486.25 L809.52,484.63 L808.53,483.00 L807.56,481.37 L806.59,479.75 L805.63,478.12 L804.68,476.50 L803.73,474.87 L802.80,473.24 L801.87,471.62 L800.94,469.99 L800.03,468.37 L799.12,466.74 L798.22,465.11 L797.33,463.49 L796.45,461.86 L795.57,460.24 L794.71,458.61 L793.85,456.98 L793.00,455.36 L792.16,453.73 L791.32,452.11 L790.50,450.48 L789.68,448.85 L788.87,447.23 L788.07,445.60 L787.28,443.98 L786.50,442.35 L785.73,440.72 L784.96,439.10 L784.21,437.47 L783.46,435.85 L782.73,434.22 L782.00,432.59 L781.28,430.97 L780.57,429.34 L779.87,427.72 L779.18,426.09 L778.50,424.46 L777.82,422.84 L777.16,421.21 L776.51,419.59 L775.87,417.96 L775.23,416.33 L774.61,414.71 L773.99,413.08 L773.39,411.46 L772.79,409.83 L772.21,408.20 L771.64,406.58 L771.07,404.95 L770.52,403.33 L769.97,401.70 L769.44,400.07 L768.91,398.45 L768.40,396.82 L767.89,395.20 L767.40,393.57 L766.92,391.94 L766.44,390.32 L765.98,388.69 L765.53,387.07 L765.09,385.44 L764.65,383.81 L764.23,382.19 L763.82,380.56 L763.42,378.94 L763.03,377.31 L762.65,375.68 L762.29,374.06 L761.93,372.43 L761.58,370.81 L761.25,369.18 L760.92,367.55 L760.61,365.93 L760.30,364.30 L760.01,362.68 L759.73,361.05 L759.46,359.42 L759.20,357.80 L758.95,356.17 L758.71,354.55 L758.48,352.92 L758.27,351.29 L758.06,349.67 L757.87,348.04 L757.68,346.42 L757.51,344.79 L757.35,343.16 L757.20,341.54 L757.06,339.91 L756.93,338.29 L756.82,336.66 L756.71,335.03 L756.62,333.41 L756.53,331.78 L756.46,330.16 L756.40,328.53 L756.35,326.90 L756.31,325.28 L756.28,323.65 L756.27,322.03 L756.26,320.40 L756.27,318.77 L756.28,317.15 L756.31,315.52 L756.35,313.90 L756.40,312.27 L756.46,310.64 L756.53,309.02 L756.62,307.39 L756.71,305.77 L756.82,304.14 L756.93,302.51 L757.06,300.89 L757.20,299.26 L757.35,297.64 L757.51,296.01 L757.68,294.38 L757.87,292.76 L758.06,291.13 L758.27,289.51 L758.48,287.88 L758.71,286.25 L758.95,284.63 L759.20,283.00 L759.46,281.38 L759.73,279.75 L760.01,278.12 L760.30,276.50 L760.61,274.87 L760.92,273.25 L761.25,271.62 L761.58,269.99 L761.93,268.37 L762.29,266.74 L762.65,265.12 L763.03,263.49 L763.42,261.86 L763.82,260.24 L764.23,258.61 L764.65,256.99 L765.09,255.36 L765.53,253.73 L765.98,252.11 L766.44,250.48 L766.92,248.86 L767.40,247.23 L767.89,245.60 L768.40,243.98 L768.91,242.35 L769.44,240.73 L769.97,239.10 L770.52,237.47 L771.07,235.85 L771.64,234.22 L772.21,232.60 L772.79,230.97 L773.39,229.34 L773.99,227.72 L774.61,226.09 L775.23,224.47 L775.87,222.84 L776.51,221.21 L777.16,219.59 L777.82,217.96 L778.50,216.34 L779.18,214.71 L779.87,213.08 L780.57,211.46 L781.28,209.83 L782.00,208.21 L782.73,206.58 L783.46,204.95 L784.21,203.33 L784.96,201.70 L785.73,200.08 L786.50,198.45 L787.28,196.82 L788.07,195.20 L788.87,193.57 L789.68,191.95 L790.50,190.32 L791.32,188.69 L792.16,187.07 L793.00,185.44 L793.85,183.82 L794.71,182.19 L795.57,180.56 L796.45,178.94 L797.33,177.31 L798.22,175.69 L799.12,174.06 L800.03,172.43 L800.94,170.81 L801.87,169.18 L802.80,167.56 L803.73,165.93 L804.68,164.30 L805.63,162.68 L806.59,161.05 L807.56,159.43 L808.53,157.80 L809.52,156.17 L810.51,154.55 L811.50,152.92 L812.50,151.30 L813.51,149.67 L814.53,148.04 L815.55,146.42 L816.58,144.79 L817.62,143.17 L818.66,141.54 L819.71,139.91 L820.77,138.29 L821.83,136.66 L822.90,135.04 L823.97,133.41 L825.05,131.78 L826.14,130.16 L827.23,128.53 L828.33,126.91 L829.43,125.28 L830.54,123.65 L831.65,122.03 L832.77,120.40 L833.90,118.78 L835.03,117.15 L836.16,115.52 L837.30,113.90 L838.45,112.27 L839.60,110.65 L840.75,109.02 L841.91,107.39 L843.08,105.77 L844.25,104.14 L845.42,102.52 L846.60,100.89 L847.78,99.26 L848.97,97.64 L850.16,96.01 L851.35,94.39 L852.55,92.76 L853.75,91.13 L854.96,89.51 L856.17,87.88 L857.38,86.26 L858.59,84.63 L859.81,83.00 L861.04,81.38 L862.26,79.75 L863.49,78.13 L864.72,76.50 L865.96,74.87 L867.20,73.25 L868.44,71.62 L869.68,70.00 L870.93,68.37 L872.17,66.74 L873.42,65.12 L874.68,63.49 L875.93,61.87 L877.19,60.24 L878.45,58.61 L879.71,56.99 L880.97,55.36 L882.23,53.74 L883.50,52.11 L884.77,50.48 L886.03,48.86 L887.30,47.23 L888.57,45.61 L889.85,43.98 L891.12,42.35 L892.39,40.73 L893.67,39.10 L894.94,37.48 L896.22,35.85 L897.49,34.22 L898.77,32.60 L900.05,30.97 L901.32,29.35 L902.60,27.72"/><path stroke-dashoffset="1.4" d="M902.60,613.08 L900.90,611.45 L899.19,609.83 L897.49,608.20 L895.79,606.58 L894.09,604.95 L892.39,603.32 L890.69,601.70 L888.99,600.07 L887.29,598.45 L885.59,596.82 L883.90,595.19 L882.20,593.57 L880.51,591.94 L878.82,590.32 L877.13,588.69 L875.44,587.06 L873.76,585.44 L872.08,583.81 L870.40,582.19 L868.72,580.56 L867.04,578.93 L865.37,577.31 L863.70,575.68 L862.03,574.06 L860.37,572.43 L858.71,570.80 L857.05,569.18 L855.40,567.55 L853.75,565.93 L852.10,564.30 L850.46,562.67 L848.82,561.05 L847.18,559.42 L845.55,557.80 L843.93,556.17 L842.30,554.54 L840.69,552.92 L839.08,551.29 L837.47,549.67 L835.87,548.04 L834.27,546.41 L832.68,544.79 L831.09,543.16 L829.51,541.54 L827.93,539.91 L826.36,538.28 L824.80,536.66 L823.24,535.03 L821.69,533.41 L820.14,531.78 L818.60,530.15 L817.07,528.53 L815.54,526.90 L814.02,525.28 L812.50,523.65 L811.00,522.02 L809.50,520.40 L808.00,518.77 L806.52,517.15 L805.04,515.52 L803.57,513.89 L802.11,512.27 L800.65,510.64 L799.20,509.02 L797.76,507.39 L796.33,505.76 L794.91,504.14 L793.49,502.51 L792.08,500.89 L790.68,499.26 L789.29,497.63 L787.91,496.01 L786.54,494.38 L785.17,492.76 L783.82,491.13 L782.47,489.50 L781.13,487.88 L779.81,486.25 L778.49,484.63 L777.18,483.00 L775.88,481.37 L774.59,479.75 L773.31,478.12 L772.04,476.50 L770.78,474.87 L769.53,473.24 L768.29,471.62 L767.06,469.99 L765.84,468.37 L764.63,466.74 L763.43,465.11 L762.24,463.49 L761.06,461.86 L759.90,460.24 L758.74,458.61 L757.60,456.98 L756.46,455.36 L755.34,453.73 L754.23,452.11 L753.13,450.48 L752.04,448.85 L750.96,447.23 L749.90,445.60 L748.84,443.98 L747.80,442.35 L746.77,440.72 L745.75,439.10 L744.74,437.47 L743.75,435.85 L742.77,434.22 L741.80,432.59 L740.84,430.97 L739.89,429.34 L738.96,427.72 L738.04,426.09 L737.13,424.46 L736.23,422.84 L735.35,421.21 L734.48,419.59 L733.62,417.96 L732.78,416.33 L731.94,414.71 L731.13,413.08 L730.32,411.46 L729.53,409.83 L728.75,408.20 L727.98,406.58 L727.23,404.95 L726.49,403.33 L725.76,401.70 L725.05,400.07 L724.35,398.45 L723.66,396.82 L722.99,395.20 L722.33,393.57 L721.69,391.94 L721.06,390.32 L720.44,388.69 L719.84,387.07 L719.25,385.44 L718.67,383.81 L718.11,382.19 L717.56,380.56 L717.03,378.94 L716.51,377.31 L716.01,375.68 L715.52,374.06 L715.04,372.43 L714.58,370.81 L714.13,369.18 L713.70,367.55 L713.28,365.93 L712.87,364.30 L712.48,362.68 L712.11,361.05 L711.74,359.42 L711.40,357.80 L711.06,356.17 L710.75,354.55 L710.44,352.92 L710.16,351.29 L709.88,349.67 L709.62,348.04 L709.38,346.42 L709.15,344.79 L708.93,343.16 L708.73,341.54 L708.55,339.91 L708.38,338.29 L708.22,336.66 L708.08,335.03 L707.96,333.41 L707.84,331.78 L707.75,330.16 L707.67,328.53 L707.60,326.90 L707.55,325.28 L707.51,323.65 L707.49,322.03 L707.48,320.40 L707.49,318.77 L707.51,317.15 L707.55,315.52 L707.60,313.90 L707.67,312.27 L707.75,310.64 L707.84,309.02 L707.96,307.39 L708.08,305.77 L708.22,304.14 L708.38,302.51 L708.55,300.89 L708.73,299.26 L708.93,297.64 L709.15,296.01 L709.38,294.38 L709.62,292.76 L709.88,291.13 L710.16,289.51 L710.44,287.88 L710.75,286.25 L711.06,284.63 L711.40,283.00 L711.74,281.38 L712.11,279.75 L712.48,278.12 L712.87,276.50 L713.28,274.87 L713.70,273.25 L714.13,271.62 L714.58,269.99 L715.04,268.37 L715.52,266.74 L716.01,265.12 L716.51,263.49 L717.03,261.86 L717.56,260.24 L718.11,258.61 L718.67,256.99 L719.25,255.36 L719.84,253.73 L720.44,252.11 L721.06,250.48 L721.69,248.86 L722.33,247.23 L722.99,245.60 L723.66,243.98 L724.35,242.35 L725.05,240.73 L725.76,239.10 L726.49,237.47 L727.23,235.85 L727.98,234.22 L728.75,232.60 L729.53,230.97 L730.32,229.34 L731.13,227.72 L731.94,226.09 L732.78,224.47 L733.62,222.84 L734.48,221.21 L735.35,219.59 L736.23,217.96 L737.13,216.34 L738.04,214.71 L738.96,213.08 L739.89,211.46 L740.84,209.83 L741.80,208.21 L742.77,206.58 L743.75,204.95 L744.74,203.33 L745.75,201.70 L746.77,200.08 L747.80,198.45 L748.84,196.82 L749.90,195.20 L750.96,193.57 L752.04,191.95 L753.13,190.32 L754.23,188.69 L755.34,187.07 L756.46,185.44 L757.60,183.82 L758.74,182.19 L759.90,180.56 L761.06,178.94 L762.24,177.31 L763.43,175.69 L764.63,174.06 L765.84,172.43 L767.06,170.81 L768.29,169.18 L769.53,167.56 L770.78,165.93 L772.04,164.30 L773.31,162.68 L774.59,161.05 L775.88,159.43 L777.18,157.80 L778.49,156.17 L779.81,154.55 L781.13,152.92 L782.47,151.30 L783.82,149.67 L785.17,148.04 L786.54,146.42 L787.91,144.79 L789.29,143.17 L790.68,141.54 L792.08,139.91 L793.49,138.29 L794.91,136.66 L796.33,135.04 L797.76,133.41 L799.20,131.78 L800.65,130.16 L802.11,128.53 L803.57,126.91 L805.04,125.28 L806.52,123.65 L808.00,122.03 L809.50,120.40 L811.00,118.78 L812.50,117.15 L814.02,115.52 L815.54,113.90 L817.07,112.27 L818.60,110.65 L820.14,109.02 L821.69,107.39 L823.24,105.77 L824.80,104.14 L826.36,102.52 L827.93,100.89 L829.51,99.26 L831.09,97.64 L832.68,96.01 L834.27,94.39 L835.87,92.76 L837.47,91.13 L839.08,89.51 L840.69,87.88 L842.30,86.26 L843.93,84.63 L845.55,83.00 L847.18,81.38 L848.82,79.75 L850.46,78.13 L852.10,76.50 L853.75,74.87 L855.40,73.25 L857.05,71.62 L858.71,70.00 L860.37,68.37 L862.03,66.74 L863.70,65.12 L865.37,63.49 L867.04,61.87 L868.72,60.24 L870.40,58.61 L872.08,56.99 L873.76,55.36 L875.44,53.74 L877.13,52.11 L878.82,50.48 L880.51,48.86 L882.20,47.23 L883.90,45.61 L885.59,43.98 L887.29,42.35 L888.99,40.73 L890.69,39.10 L892.39,37.48 L894.09,35.85 L895.79,34.22 L897.49,32.60 L899.19,30.97 L900.90,29.35 L902.60,27.72"/><path stroke-dashoffset="1.4" d="M902.60,613.08 L900.47,611.45 L898.34,609.83 L896.22,608.20 L894.09,606.58 L891.96,604.95 L889.84,603.32 L887.71,601.70 L885.59,600.07 L883.46,598.45 L881.34,596.82 L879.22,595.19 L877.11,593.57 L874.99,591.94 L872.88,590.32 L870.76,588.69 L868.66,587.06 L866.55,585.44 L864.45,583.81 L862.34,582.19 L860.25,580.56 L858.15,578.93 L856.06,577.31 L853.97,575.68 L851.89,574.06 L849.81,572.43 L847.73,570.80 L845.66,569.18 L843.60,567.55 L841.53,565.93 L839.47,564.30 L837.42,562.67 L835.37,561.05 L833.33,559.42 L831.29,557.80 L829.26,556.17 L827.23,554.54 L825.21,552.92 L823.19,551.29 L821.18,549.67 L819.18,548.04 L817.18,546.41 L815.19,544.79 L813.21,543.16 L811.23,541.54 L809.26,539.91 L807.30,538.28 L805.35,536.66 L803.40,535.03 L801.46,533.41 L799.52,531.78 L797.60,530.15 L795.68,528.53 L793.77,526.90 L791.87,525.28 L789.98,523.65 L788.10,522.02 L786.22,520.40 L784.35,518.77 L782.50,517.15 L780.65,515.52 L778.81,513.89 L776.98,512.27 L775.16,510.64 L773.35,509.02 L771.55,507.39 L769.76,505.76 L767.98,504.14 L766.21,502.51 L764.45,500.89 L762.70,499.26 L760.97,497.63 L759.24,496.01 L757.52,494.38 L755.82,492.76 L754.12,491.13 L752.44,489.50 L750.77,487.88 L749.11,486.25 L747.46,484.63 L745.82,483.00 L744.20,481.37 L742.59,479.75 L740.99,478.12 L739.40,476.50 L737.82,474.87 L736.26,473.24 L734.71,471.62 L733.17,469.99 L731.65,468.37 L730.14,466.74 L728.64,465.11 L727.15,463.49 L725.68,461.86 L724.22,460.24 L722.78,458.61 L721.35,456.98 L719.93,455.36 L718.53,453.73 L717.14,452.11 L715.76,450.48 L714.40,448.85 L713.05,447.23 L711.72,445.60 L710.40,443.98 L709.10,442.35 L707.81,440.72 L706.54,439.10 L705.28,437.47 L704.04,435.85 L702.81,434.22 L701.60,432.59 L700.40,430.97 L699.22,429.34 L698.05,427.72 L696.90,426.09 L695.76,424.46 L694.64,422.84 L693.54,421.21 L692.45,419.59 L691.38,417.96 L690.32,416.33 L689.28,414.71 L688.26,413.08 L687.25,411.46 L686.26,409.83 L685.28,408.20 L684.33,406.58 L683.38,404.95 L682.46,403.33 L681.55,401.70 L680.66,400.07 L679.79,398.45 L678.93,396.82 L678.09,395.20 L677.27,393.57 L676.46,391.94 L675.67,390.32 L674.90,388.69 L674.15,387.07 L673.41,385.44 L672.69,383.81 L671.99,382.19 L671.30,380.56 L670.64,378.94 L669.99,377.31 L669.36,375.68 L668.74,374.06 L668.15,372.43 L667.57,370.81 L667.01,369.18 L666.47,367.55 L665.94,365.93 L665.44,364.30 L664.95,362.68 L664.48,361.05 L664.03,359.42 L663.60,357.80 L663.18,356.17 L662.78,354.55 L662.41,352.92 L662.04,351.29 L661.70,349.67 L661.38,348.04 L661.07,346.42 L660.79,344.79 L660.52,343.16 L660.27,341.54 L660.04,339.91 L659.82,338.29 L659.63,336.66 L659.45,335.03 L659.29,333.41 L659.15,331.78 L659.03,330.16 L658.93,328.53 L658.85,326.90 L658.78,325.28 L658.74,323.65 L658.71,322.03 L658.70,320.40 L658.71,318.77 L658.74,317.15 L658.78,315.52 L658.85,313.90 L658.93,312.27 L659.03,310.64 L659.15,309.02 L659.29,307.39 L659.45,305.77 L659.63,304.14 L659.82,302.51 L660.04,300.89 L660.27,299.26 L660.52,297.64 L660.79,296.01 L661.07,294.38 L661.38,292.76 L661.70,291.13 L662.04,289.51 L662.41,287.88 L662.78,286.25 L663.18,284.63 L663.60,283.00 L664.03,281.38 L664.48,279.75 L664.95,278.12 L665.44,276.50 L665.94,274.87 L666.47,273.25 L667.01,271.62 L667.57,269.99 L668.15,268.37 L668.74,266.74 L669.36,265.12 L669.99,263.49 L670.64,261.86 L671.30,260.24 L671.99,258.61 L672.69,256.99 L673.41,255.36 L674.15,253.73 L674.90,252.11 L675.67,250.48 L676.46,248.86 L677.27,247.23 L678.09,245.60 L678.93,243.98 L679.79,242.35 L680.66,240.73 L681.55,239.10 L682.46,237.47 L683.38,235.85 L684.33,234.22 L685.28,232.60 L686.26,230.97 L687.25,229.34 L688.26,227.72 L689.28,226.09 L690.32,224.47 L691.38,222.84 L692.45,221.21 L693.54,219.59 L694.64,217.96 L695.76,216.34 L696.90,214.71 L698.05,213.08 L699.22,211.46 L700.40,209.83 L701.60,208.21 L702.81,206.58 L704.04,204.95 L705.28,203.33 L706.54,201.70 L707.81,200.08 L709.10,198.45 L710.40,196.82 L711.72,195.20 L713.05,193.57 L714.40,191.95 L715.76,190.32 L717.14,188.69 L718.53,187.07 L719.93,185.44 L721.35,183.82 L722.78,182.19 L724.22,180.56 L725.68,178.94 L727.15,177.31 L728.64,175.69 L730.14,174.06 L731.65,172.43 L733.17,170.81 L734.71,169.18 L736.26,167.56 L737.82,165.93 L739.40,164.30 L740.99,162.68 L742.59,161.05 L744.20,159.43 L745.82,157.80 L747.46,156.17 L749.11,154.55 L750.77,152.92 L752.44,151.30 L754.12,149.67 L755.82,148.04 L757.52,146.42 L759.24,144.79 L760.97,143.17 L762.70,141.54 L764.45,139.91 L766.21,138.29 L767.98,136.66 L769.76,135.04 L771.55,133.41 L773.35,131.78 L775.16,130.16 L776.98,128.53 L778.81,126.91 L780.65,125.28 L782.50,123.65 L784.35,122.03 L786.22,120.40 L788.10,118.78 L789.98,117.15 L791.87,115.52 L793.77,113.90 L795.68,112.27 L797.60,110.65 L799.52,109.02 L801.46,107.39 L803.40,105.77 L805.35,104.14 L807.30,102.52 L809.26,100.89 L811.23,99.26 L813.21,97.64 L815.19,96.01 L817.18,94.39 L819.18,92.76 L821.18,91.13 L823.19,89.51 L825.21,87.88 L827.23,86.26 L829.26,84.63 L831.29,83.00 L833.33,81.38 L835.37,79.75 L837.42,78.13 L839.47,76.50 L841.53,74.87 L843.60,73.25 L845.66,71.62 L847.73,70.00 L849.81,68.37 L851.89,66.74 L853.97,65.12 L856.06,63.49 L858.15,61.87 L860.25,60.24 L862.34,58.61 L864.45,56.99 L866.55,55.36 L868.66,53.74 L870.76,52.11 L872.88,50.48 L874.99,48.86 L877.11,47.23 L879.22,45.61 L881.34,43.98 L883.46,42.35 L885.59,40.73 L887.71,39.10 L889.84,37.48 L891.96,35.85 L894.09,34.22 L896.22,32.60 L898.34,30.97 L900.47,29.35 L902.60,27.72"/><path stroke-dashoffset="1.4" d="M902.60,613.08 L900.05,611.45 L897.49,609.83 L894.94,608.20 L892.39,606.58 L889.83,604.95 L887.28,603.32 L884.73,601.70 L882.18,600.07 L879.64,598.45 L877.09,596.82 L874.55,595.19 L872.01,593.57 L869.47,591.94 L866.93,590.32 L864.40,588.69 L861.87,587.06 L859.34,585.44 L856.81,583.81 L854.29,582.19 L851.78,580.56 L849.26,578.93 L846.75,577.31 L844.25,575.68 L841.75,574.06 L839.25,572.43 L836.76,570.80 L834.28,569.18 L831.79,567.55 L829.32,565.93 L826.85,564.30 L824.38,562.67 L821.93,561.05 L819.47,559.42 L817.03,557.80 L814.59,556.17 L812.16,554.54 L809.73,552.92 L807.31,551.29 L804.90,549.67 L802.50,548.04 L800.10,546.41 L797.71,544.79 L795.33,543.16 L792.96,541.54 L790.60,539.91 L788.24,538.28 L785.89,536.66 L783.56,535.03 L781.23,533.41 L778.91,531.78 L776.60,530.15 L774.30,528.53 L772.01,526.90 L769.73,525.28 L767.46,523.65 L765.20,522.02 L762.95,520.40 L760.71,518.77 L758.48,517.15 L756.26,515.52 L754.05,513.89 L751.86,512.27 L749.68,510.64 L747.50,509.02 L745.34,507.39 L743.20,505.76 L741.06,504.14 L738.94,502.51 L736.82,500.89 L734.73,499.26 L732.64,497.63 L730.57,496.01 L728.51,494.38 L726.46,492.76 L724.43,491.13 L722.41,489.50 L720.40,487.88 L718.41,486.25 L716.43,484.63 L714.47,483.00 L712.52,481.37 L710.58,479.75 L708.66,478.12 L706.76,476.50 L704.87,474.87 L702.99,473.24 L701.13,471.62 L699.29,469.99 L697.46,468.37 L695.64,466.74 L693.85,465.11 L692.06,463.49 L690.30,461.86 L688.55,460.24 L686.81,458.61 L685.10,456.98 L683.40,455.36 L681.71,453.73 L680.04,452.11 L678.39,450.48 L676.76,448.85 L675.14,447.23 L673.55,445.60 L671.97,443.98 L670.40,442.35 L668.86,440.72 L667.33,439.10 L665.82,437.47 L664.32,435.85 L662.85,434.22 L661.39,432.59 L659.96,430.97 L658.54,429.34 L657.14,427.72 L655.76,426.09 L654.39,424.46 L653.05,422.84 L651.72,421.21 L650.42,419.59 L649.13,417.96 L647.86,416.33 L646.62,414.71 L645.39,413.08 L644.18,411.46 L642.99,409.83 L641.82,408.20 L640.67,406.58 L639.54,404.95 L638.43,403.33 L637.34,401.70 L636.27,400.07 L635.22,398.45 L634.19,396.82 L633.19,395.20 L632.20,393.57 L631.23,391.94 L630.29,390.32 L629.36,388.69 L628.45,387.07 L627.57,385.44 L626.71,383.81 L625.87,382.19 L625.04,380.56 L624.24,378.94 L623.47,377.31 L622.71,375.68 L621.97,374.06 L621.26,372.43 L620.56,370.81 L619.89,369.18 L619.24,367.55 L618.61,365.93 L618.01,364.30 L617.42,362.68 L616.86,361.05 L616.32,359.42 L615.80,357.80 L615.30,356.17 L614.82,354.55 L614.37,352.92 L613.93,351.29 L613.52,349.67 L613.13,348.04 L612.77,346.42 L612.42,344.79 L612.10,343.16 L611.80,341.54 L611.52,339.91 L611.27,338.29 L611.03,336.66 L610.82,335.03 L610.63,333.41 L610.47,331.78 L610.32,330.16 L610.20,328.53 L610.10,326.90 L610.02,325.28 L609.96,323.65 L609.93,322.03 L609.92,320.40 L609.93,318.77 L609.96,317.15 L610.02,315.52 L610.10,313.90 L610.20,312.27 L610.32,310.64 L610.47,309.02 L610.63,307.39 L610.82,305.77 L611.03,304.14 L611.27,302.51 L611.52,300.89 L611.80,299.26 L612.10,297.64 L612.42,296.01 L612.77,294.38 L613.13,292.76 L613.52,291.13 L613.93,289.51 L614.37,287.88 L614.82,286.25 L615.30,284.63 L615.80,283.00 L616.32,281.38 L616.86,279.75 L617.42,278.12 L618.01,276.50 L618.61,274.87 L619.24,273.25 L619.89,271.62 L620.56,269.99 L621.26,268.37 L621.97,266.74 L622.71,265.12 L623.47,263.49 L624.24,261.86 L625.04,260.24 L625.87,258.61 L626.71,256.99 L627.57,255.36 L628.45,253.73 L629.36,252.11 L630.29,250.48 L631.23,248.86 L632.20,247.23 L633.19,245.60 L634.19,243.98 L635.22,242.35 L636.27,240.73 L637.34,239.10 L638.43,237.47 L639.54,235.85 L640.67,234.22 L641.82,232.60 L642.99,230.97 L644.18,229.34 L645.39,227.72 L646.62,226.09 L647.86,224.47 L649.13,222.84 L650.42,221.21 L651.72,219.59 L653.05,217.96 L654.39,216.34 L655.76,214.71 L657.14,213.08 L658.54,211.46 L659.96,209.83 L661.39,208.21 L662.85,206.58 L664.32,204.95 L665.82,203.33 L667.33,201.70 L668.86,200.08 L670.40,198.45 L671.97,196.82 L673.55,195.20 L675.14,193.57 L676.76,191.95 L678.39,190.32 L680.04,188.69 L681.71,187.07 L683.40,185.44 L685.10,183.82 L686.81,182.19 L688.55,180.56 L690.30,178.94 L692.06,177.31 L693.85,175.69 L695.64,174.06 L697.46,172.43 L699.29,170.81 L701.13,169.18 L702.99,167.56 L704.87,165.93 L706.76,164.30 L708.66,162.68 L710.58,161.05 L712.52,159.43 L714.47,157.80 L716.43,156.17 L718.41,154.55 L720.40,152.92 L722.41,151.30 L724.43,149.67 L726.46,148.04 L728.51,146.42 L730.57,144.79 L732.64,143.17 L734.73,141.54 L736.82,139.91 L738.94,138.29 L741.06,136.66 L743.20,135.04 L745.34,133.41 L747.50,131.78 L749.68,130.16 L751.86,128.53 L754.05,126.91 L756.26,125.28 L758.48,123.65 L760.71,122.03 L762.95,120.40 L765.20,118.78 L767.46,117.15 L769.73,115.52 L772.01,113.90 L774.30,112.27 L776.60,110.65 L778.91,109.02 L781.23,107.39 L783.56,105.77 L785.89,104.14 L788.24,102.52 L790.60,100.89 L792.96,99.26 L795.33,97.64 L797.71,96.01 L800.10,94.39 L802.50,92.76 L804.90,91.13 L807.31,89.51 L809.73,87.88 L812.16,86.26 L814.59,84.63 L817.03,83.00 L819.47,81.38 L821.93,79.75 L824.38,78.13 L826.85,76.50 L829.32,74.87 L831.79,73.25 L834.28,71.62 L836.76,70.00 L839.25,68.37 L841.75,66.74 L844.25,65.12 L846.75,63.49 L849.26,61.87 L851.78,60.24 L854.29,58.61 L856.81,56.99 L859.34,55.36 L861.87,53.74 L864.40,52.11 L866.93,50.48 L869.47,48.86 L872.01,47.23 L874.55,45.61 L877.09,43.98 L879.64,42.35 L882.18,40.73 L884.73,39.10 L887.28,37.48 L889.83,35.85 L892.39,34.22 L894.94,32.60 L897.49,30.97 L900.05,29.35 L902.60,27.72"/><path stroke-dashoffset="1.4" d="M902.60,613.08 L899.62,611.45 L896.64,609.83 L893.66,608.20 L890.68,606.58 L887.71,604.95 L884.73,603.32 L881.75,601.70 L878.78,600.07 L875.81,598.45 L872.84,596.82 L869.87,595.19 L866.91,593.57 L863.95,591.94 L860.99,590.32 L858.03,588.69 L855.08,587.06 L852.13,585.44 L849.18,583.81 L846.24,582.19 L843.31,580.56 L840.37,578.93 L837.45,577.31 L834.52,575.68 L831.61,574.06 L828.69,572.43 L825.79,570.80 L822.89,569.18 L819.99,567.55 L817.11,565.93 L814.22,564.30 L811.35,562.67 L808.48,561.05 L805.62,559.42 L802.77,557.80 L799.92,556.17 L797.08,554.54 L794.25,552.92 L791.43,551.29 L788.62,549.67 L785.81,548.04 L783.02,546.41 L780.23,544.79 L777.45,543.16 L774.69,541.54 L771.93,539.91 L769.18,538.28 L766.44,536.66 L763.72,535.03 L761.00,533.41 L758.29,531.78 L755.60,530.15 L752.91,528.53 L750.24,526.90 L747.58,525.28 L744.93,523.65 L742.29,522.02 L739.67,520.40 L737.06,518.77 L734.46,517.15 L731.87,515.52 L729.30,513.89 L726.74,512.27 L724.19,510.64 L721.65,509.02 L719.13,507.39 L716.63,505.76 L714.14,504.14 L711.66,502.51 L709.19,500.89 L706.75,499.26 L704.31,497.63 L701.89,496.01 L699.49,494.38 L697.10,492.76 L694.73,491.13 L692.38,489.50 L690.04,487.88 L687.71,486.25 L685.40,484.63 L683.11,483.00 L680.84,481.37 L678.58,479.75 L676.34,478.12 L674.12,476.50 L671.91,474.87 L669.72,473.24 L667.55,471.62 L665.40,469.99 L663.27,468.37 L661.15,466.74 L659.05,465.11 L656.97,463.49 L654.91,461.86 L652.87,460.24 L650.85,458.61 L648.85,456.98 L646.86,455.36 L644.90,453.73 L642.95,452.11 L641.03,450.48 L639.12,448.85 L637.24,447.23 L635.37,445.60 L633.53,443.98 L631.70,442.35 L629.90,440.72 L628.12,439.10 L626.35,437.47 L624.61,435.85 L622.89,434.22 L621.19,432.59 L619.52,430.97 L617.86,429.34 L616.23,427.72 L614.62,426.09 L613.03,424.46 L611.46,422.84 L609.91,421.21 L608.39,419.59 L606.89,417.96 L605.41,416.33 L603.95,414.71 L602.52,413.08 L601.11,411.46 L599.72,409.83 L598.36,408.20 L597.02,406.58 L595.70,404.95 L594.40,403.33 L593.13,401.70 L591.88,400.07 L590.66,398.45 L589.46,396.82 L588.28,395.20 L587.13,393.57 L586.00,391.94 L584.90,390.32 L583.82,388.69 L582.76,387.07 L581.73,385.44 L580.73,383.81 L579.74,382.19 L578.79,380.56 L577.85,378.94 L576.94,377.31 L576.06,375.68 L575.20,374.06 L574.37,372.43 L573.56,370.81 L572.77,369.18 L572.02,367.55 L571.28,365.93 L570.57,364.30 L569.89,362.68 L569.23,361.05 L568.60,359.42 L567.99,357.80 L567.41,356.17 L566.86,354.55 L566.33,352.92 L565.82,351.29 L565.34,349.67 L564.89,348.04 L564.46,346.42 L564.06,344.79 L563.69,343.16 L563.33,341.54 L563.01,339.91 L562.71,338.29 L562.44,336.66 L562.19,335.03 L561.97,333.41 L561.78,331.78 L561.61,330.16 L561.46,328.53 L561.35,326.90 L561.26,325.28 L561.19,323.65 L561.15,322.03 L561.14,320.40 L561.15,318.77 L561.19,317.15 L561.26,315.52 L561.35,313.90 L561.46,312.27 L561.61,310.64 L561.78,309.02 L561.97,307.39 L562.19,305.77 L562.44,304.14 L562.71,302.51 L563.01,300.89 L563.33,299.26 L563.69,297.64 L564.06,296.01 L564.46,294.38 L564.89,292.76 L565.34,291.13 L565.82,289.51 L566.33,287.88 L566.86,286.25 L567.41,284.63 L567.99,283.00 L568.60,281.38 L569.23,279.75 L569.89,278.12 L570.57,276.50 L571.28,274.87 L572.02,273.25 L572.77,271.62 L573.56,269.99 L574.37,268.37 L575.20,266.74 L576.06,265.12 L576.94,263.49 L577.85,261.86 L578.79,260.24 L579.74,258.61 L580.73,256.99 L581.73,255.36 L582.76,253.73 L583.82,252.11 L584.90,250.48 L586.00,248.86 L587.13,247.23 L588.28,245.60 L589.46,243.98 L590.66,242.35 L591.88,240.73 L593.13,239.10 L594.40,237.47 L595.70,235.85 L597.02,234.22 L598.36,232.60 L599.72,230.97 L601.11,229.34 L602.52,227.72 L603.95,226.09 L605.41,224.47 L606.89,222.84 L608.39,221.21 L609.91,219.59 L611.46,217.96 L613.03,216.34 L614.62,214.71 L616.23,213.08 L617.86,211.46 L619.52,209.83 L621.19,208.21 L622.89,206.58 L624.61,204.95 L626.35,203.33 L628.12,201.70 L629.90,200.08 L631.70,198.45 L633.53,196.82 L635.37,195.20 L637.24,193.57 L639.12,191.95 L641.03,190.32 L642.95,188.69 L644.90,187.07 L646.86,185.44 L648.85,183.82 L650.85,182.19 L652.87,180.56 L654.91,178.94 L656.97,177.31 L659.05,175.69 L661.15,174.06 L663.27,172.43 L665.40,170.81 L667.55,169.18 L669.72,167.56 L671.91,165.93 L674.12,164.30 L676.34,162.68 L678.58,161.05 L680.84,159.43 L683.11,157.80 L685.40,156.17 L687.71,154.55 L690.04,152.92 L692.38,151.30 L694.73,149.67 L697.10,148.04 L699.49,146.42 L701.89,144.79 L704.31,143.17 L706.75,141.54 L709.19,139.91 L711.66,138.29 L714.14,136.66 L716.63,135.04 L719.13,133.41 L721.65,131.78 L724.19,130.16 L726.74,128.53 L729.30,126.91 L731.87,125.28 L734.46,123.65 L737.06,122.03 L739.67,120.40 L742.29,118.78 L744.93,117.15 L747.58,115.52 L750.24,113.90 L752.91,112.27 L755.60,110.65 L758.29,109.02 L761.00,107.39 L763.72,105.77 L766.44,104.14 L769.18,102.52 L771.93,100.89 L774.69,99.26 L777.45,97.64 L780.23,96.01 L783.02,94.39 L785.81,92.76 L788.62,91.13 L791.43,89.51 L794.25,87.88 L797.08,86.26 L799.92,84.63 L802.77,83.00 L805.62,81.38 L808.48,79.75 L811.35,78.13 L814.22,76.50 L817.11,74.87 L819.99,73.25 L822.89,71.62 L825.79,70.00 L828.69,68.37 L831.61,66.74 L834.52,65.12 L837.45,63.49 L840.37,61.87 L843.31,60.24 L846.24,58.61 L849.18,56.99 L852.13,55.36 L855.08,53.74 L858.03,52.11 L860.99,50.48 L863.95,48.86 L866.91,47.23 L869.87,45.61 L872.84,43.98 L875.81,42.35 L878.78,40.73 L881.75,39.10 L884.73,37.48 L887.71,35.85 L890.68,34.22 L893.66,32.60 L896.64,30.97 L899.62,29.35 L902.60,27.72"/><path stroke-dashoffset="1.4" d="M902.60,613.08 L899.19,611.45 L895.79,609.83 L892.38,608.20 L888.98,606.58 L885.58,604.95 L882.18,603.32 L878.78,601.70 L875.38,600.07 L871.98,598.45 L868.59,596.82 L865.20,595.19 L861.81,593.57 L858.42,591.94 L855.04,590.32 L851.66,588.69 L848.29,587.06 L844.92,585.44 L841.55,583.81 L838.19,582.19 L834.84,580.56 L831.48,578.93 L828.14,577.31 L824.80,575.68 L821.46,574.06 L818.14,572.43 L814.82,570.80 L811.50,569.18 L808.19,567.55 L804.89,565.93 L801.60,564.30 L798.31,562.67 L795.04,561.05 L791.77,559.42 L788.50,557.80 L785.25,556.17 L782.01,554.54 L778.78,552.92 L775.55,551.29 L772.34,549.67 L769.13,548.04 L765.94,546.41 L762.75,544.79 L759.58,543.16 L756.41,541.54 L753.26,539.91 L750.12,538.28 L746.99,536.66 L743.88,535.03 L740.77,533.41 L737.68,531.78 L734.60,530.15 L731.53,528.53 L728.48,526.90 L725.43,525.28 L722.41,523.65 L719.39,522.02 L716.39,520.40 L713.41,518.77 L710.44,517.15 L707.48,515.52 L704.54,513.89 L701.61,512.27 L698.70,510.64 L695.80,509.02 L692.92,507.39 L690.06,505.76 L687.21,504.14 L684.38,502.51 L681.57,500.89 L678.77,499.26 L675.99,497.63 L673.22,496.01 L670.48,494.38 L667.75,492.76 L665.04,491.13 L662.34,489.50 L659.67,487.88 L657.01,486.25 L654.38,484.63 L651.76,483.00 L649.16,481.37 L646.58,479.75 L644.02,478.12 L641.48,476.50 L638.96,474.87 L636.46,473.24 L633.98,471.62 L631.52,469.99 L629.08,468.37 L626.66,466.74 L624.26,465.11 L621.88,463.49 L619.53,461.86 L617.20,460.24 L614.88,458.61 L612.60,456.98 L610.33,455.36 L608.08,453.73 L605.86,452.11 L603.66,450.48 L601.48,448.85 L599.33,447.23 L597.19,445.60 L595.09,443.98 L593.00,442.35 L590.94,440.72 L588.90,439.10 L586.89,437.47 L584.90,435.85 L582.93,434.22 L580.99,432.59 L579.08,430.97 L577.18,429.34 L575.32,427.72 L573.47,426.09 L571.66,424.46 L569.87,422.84 L568.10,421.21 L566.36,419.59 L564.64,417.96 L562.95,416.33 L561.29,414.71 L559.65,413.08 L558.04,411.46 L556.45,409.83 L554.89,408.20 L553.36,406.58 L551.85,404.95 L550.38,403.33 L548.92,401.70 L547.50,400.07 L546.10,398.45 L544.73,396.82 L543.38,395.20 L542.07,393.57 L540.78,391.94 L539.51,390.32 L538.28,388.69 L537.07,387.07 L535.89,385.44 L534.74,383.81 L533.62,382.19 L532.53,380.56 L531.46,378.94 L530.42,377.31 L529.41,375.68 L528.43,374.06 L527.48,372.43 L526.55,370.81 L525.66,369.18 L524.79,367.55 L523.95,365.93 L523.14,364.30 L522.36,362.68 L521.61,361.05 L520.89,359.42 L520.19,357.80 L519.53,356.17 L518.89,354.55 L518.29,352.92 L517.71,351.29 L517.16,349.67 L516.65,348.04 L516.16,346.42 L515.70,344.79 L515.27,343.16 L514.87,341.54 L514.50,339.91 L514.16,338.29 L513.84,336.66 L513.56,335.03 L513.31,333.41 L513.09,331.78 L512.89,330.16 L512.73,328.53 L512.60,326.90 L512.49,325.28 L512.42,323.65 L512.37,322.03 L512.36,320.40 L512.37,318.77 L512.42,317.15 L512.49,315.52 L512.60,313.90 L512.73,312.27 L512.89,310.64 L513.09,309.02 L513.31,307.39 L513.56,305.77 L513.84,304.14 L514.16,302.51 L514.50,300.89 L514.87,299.26 L515.27,297.64 L515.70,296.01 L516.16,294.38 L516.65,292.76 L517.16,291.13 L517.71,289.51 L518.29,287.88 L518.89,286.25 L519.53,284.63 L520.19,283.00 L520.89,281.38 L521.61,279.75 L522.36,278.12 L523.14,276.50 L523.95,274.87 L524.79,273.25 L525.66,271.62 L526.55,269.99 L527.48,268.37 L528.43,266.74 L529.41,265.12 L530.42,263.49 L531.46,261.86 L532.53,260.24 L533.62,258.61 L534.74,256.99 L535.89,255.36 L537.07,253.73 L538.28,252.11 L539.51,250.48 L540.78,248.86 L542.07,247.23 L543.38,245.60 L544.73,243.98 L546.10,242.35 L547.50,240.73 L548.92,239.10 L550.38,237.47 L551.85,235.85 L553.36,234.22 L554.89,232.60 L556.45,230.97 L558.04,229.34 L559.65,227.72 L561.29,226.09 L562.95,224.47 L564.64,222.84 L566.36,221.21 L568.10,219.59 L569.87,217.96 L571.66,216.34 L573.47,214.71 L575.32,213.08 L577.18,211.46 L579.08,209.83 L580.99,208.21 L582.93,206.58 L584.90,204.95 L586.89,203.33 L588.90,201.70 L590.94,200.08 L593.00,198.45 L595.09,196.82 L597.19,195.20 L599.33,193.57 L601.48,191.95 L603.66,190.32 L605.86,188.69 L608.08,187.07 L610.33,185.44 L612.60,183.82 L614.88,182.19 L617.20,180.56 L619.53,178.94 L621.88,177.31 L624.26,175.69 L626.66,174.06 L629.08,172.43 L631.52,170.81 L633.98,169.18 L636.46,167.56 L638.96,165.93 L641.48,164.30 L644.02,162.68 L646.58,161.05 L649.16,159.43 L651.76,157.80 L654.38,156.17 L657.01,154.55 L659.67,152.92 L662.34,151.30 L665.04,149.67 L667.75,148.04 L670.48,146.42 L673.22,144.79 L675.99,143.17 L678.77,141.54 L681.57,139.91 L684.38,138.29 L687.21,136.66 L690.06,135.04 L692.92,133.41 L695.80,131.78 L698.70,130.16 L701.61,128.53 L704.54,126.91 L707.48,125.28 L710.44,123.65 L713.41,122.03 L716.39,120.40 L719.39,118.78 L722.41,117.15 L725.43,115.52 L728.48,113.90 L731.53,112.27 L734.60,110.65 L737.68,109.02 L740.77,107.39 L743.88,105.77 L746.99,104.14 L750.12,102.52 L753.26,100.89 L756.41,99.26 L759.58,97.64 L762.75,96.01 L765.94,94.39 L769.13,92.76 L772.34,91.13 L775.55,89.51 L778.78,87.88 L782.01,86.26 L785.25,84.63 L788.50,83.00 L791.77,81.38 L795.04,79.75 L798.31,78.13 L801.60,76.50 L804.89,74.87 L808.19,73.25 L811.50,71.62 L814.82,70.00 L818.14,68.37 L821.46,66.74 L824.80,65.12 L828.14,63.49 L831.48,61.87 L834.84,60.24 L838.19,58.61 L841.55,56.99 L844.92,55.36 L848.29,53.74 L851.66,52.11 L855.04,50.48 L858.42,48.86 L861.81,47.23 L865.20,45.61 L868.59,43.98 L871.98,42.35 L875.38,40.73 L878.78,39.10 L882.18,37.48 L885.58,35.85 L888.98,34.22 L892.38,32.60 L895.79,30.97 L899.19,29.35 L902.60,27.72"/><path stroke-dashoffset="1.4" d="M902.60,613.08 L898.77,611.45 L894.94,609.83 L891.11,608.20 L887.28,606.58 L883.45,604.95 L879.62,603.32 L875.80,601.70 L871.98,600.07 L868.15,598.45 L864.34,596.82 L860.52,595.19 L856.71,593.57 L852.90,591.94 L849.10,590.32 L845.30,588.69 L841.50,587.06 L837.71,585.44 L833.92,583.81 L830.14,582.19 L826.36,580.56 L822.59,578.93 L818.83,577.31 L815.07,575.68 L811.32,574.06 L807.58,572.43 L803.84,570.80 L800.11,569.18 L796.39,567.55 L792.68,565.93 L788.97,564.30 L785.28,562.67 L781.59,561.05 L777.91,559.42 L774.24,557.80 L770.58,556.17 L766.94,554.54 L763.30,552.92 L759.67,551.29 L756.05,549.67 L752.45,548.04 L748.85,546.41 L745.27,544.79 L741.70,543.16 L738.14,541.54 L734.59,539.91 L731.06,538.28 L727.54,536.66 L724.03,535.03 L720.54,533.41 L717.06,531.78 L713.60,530.15 L710.15,528.53 L706.71,526.90 L703.29,525.28 L699.88,523.65 L696.49,522.02 L693.12,520.40 L689.76,518.77 L686.42,517.15 L683.09,515.52 L679.78,513.89 L676.49,512.27 L673.21,510.64 L669.95,509.02 L666.71,507.39 L663.49,505.76 L660.29,504.14 L657.10,502.51 L653.94,500.89 L650.79,499.26 L647.66,497.63 L644.55,496.01 L641.46,494.38 L638.39,492.76 L635.34,491.13 L632.31,489.50 L629.30,487.88 L626.32,486.25 L623.35,484.63 L620.40,483.00 L617.48,481.37 L614.58,479.75 L611.70,478.12 L608.84,476.50 L606.00,474.87 L603.19,473.24 L600.40,471.62 L597.63,469.99 L594.89,468.37 L592.17,466.74 L589.47,465.11 L586.80,463.49 L584.15,461.86 L581.52,460.24 L578.92,458.61 L576.34,456.98 L573.79,455.36 L571.27,453.73 L568.77,452.11 L566.29,450.48 L563.84,448.85 L561.42,447.23 L559.02,445.60 L556.65,443.98 L554.30,442.35 L551.98,440.72 L549.69,439.10 L547.43,437.47 L545.19,435.85 L542.98,434.22 L540.79,432.59 L538.64,430.97 L536.51,429.34 L534.41,427.72 L532.33,426.09 L530.29,424.46 L528.27,422.84 L526.29,421.21 L524.33,419.59 L522.40,417.96 L520.50,416.33 L518.62,414.71 L516.78,413.08 L514.97,411.46 L513.18,409.83 L511.43,408.20 L509.71,406.58 L508.01,404.95 L506.35,403.33 L504.71,401.70 L503.11,400.07 L501.54,398.45 L499.99,396.82 L498.48,395.20 L497.00,393.57 L495.55,391.94 L494.13,390.32 L492.74,388.69 L491.38,387.07 L490.06,385.44 L488.76,383.81 L487.50,382.19 L486.27,380.56 L485.07,378.94 L483.90,377.31 L482.76,375.68 L481.66,374.06 L480.59,372.43 L479.55,370.81 L478.54,369.18 L477.56,367.55 L476.62,365.93 L475.71,364.30 L474.83,362.68 L473.99,361.05 L473.17,359.42 L472.39,357.80 L471.65,356.17 L470.93,354.55 L470.25,352.92 L469.60,351.29 L468.99,349.67 L468.40,348.04 L467.85,346.42 L467.34,344.79 L466.85,343.16 L466.40,341.54 L465.98,339.91 L465.60,338.29 L465.25,336.66 L464.93,335.03 L464.65,333.41 L464.40,331.78 L464.18,330.16 L464.00,328.53 L463.85,326.90 L463.73,325.28 L463.65,323.65 L463.60,322.03 L463.58,320.40 L463.60,318.77 L463.65,317.15 L463.73,315.52 L463.85,313.90 L464.00,312.27 L464.18,310.64 L464.40,309.02 L464.65,307.39 L464.93,305.77 L465.25,304.14 L465.60,302.51 L465.98,300.89 L466.40,299.26 L466.85,297.64 L467.34,296.01 L467.85,294.38 L468.40,292.76 L468.99,291.13 L469.60,289.51 L470.25,287.88 L470.93,286.25 L471.65,284.63 L472.39,283.00 L473.17,281.38 L473.99,279.75 L474.83,278.12 L475.71,276.50 L476.62,274.87 L477.56,273.25 L478.54,271.62 L479.55,269.99 L480.59,268.37 L481.66,266.74 L482.76,265.12 L483.90,263.49 L485.07,261.86 L486.27,260.24 L487.50,258.61 L488.76,256.99 L490.06,255.36 L491.38,253.73 L492.74,252.11 L494.13,250.48 L495.55,248.86 L497.00,247.23 L498.48,245.60 L499.99,243.98 L501.54,242.35 L503.11,240.73 L504.71,239.10 L506.35,237.47 L508.01,235.85 L509.71,234.22 L511.43,232.60 L513.18,230.97 L514.97,229.34 L516.78,227.72 L518.62,226.09 L520.50,224.47 L522.40,222.84 L524.33,221.21 L526.29,219.59 L528.27,217.96 L530.29,216.34 L532.33,214.71 L534.41,213.08 L536.51,211.46 L538.64,209.83 L540.79,208.21 L542.98,206.58 L545.19,204.95 L547.43,203.33 L549.69,201.70 L551.98,200.08 L554.30,198.45 L556.65,196.82 L559.02,195.20 L561.42,193.57 L563.84,191.95 L566.29,190.32 L568.77,188.69 L571.27,187.07 L573.79,185.44 L576.34,183.82 L578.92,182.19 L581.52,180.56 L584.15,178.94 L586.80,177.31 L589.47,175.69 L592.17,174.06 L594.89,172.43 L597.63,170.81 L600.40,169.18 L603.19,167.56 L606.00,165.93 L608.84,164.30 L611.70,162.68 L614.58,161.05 L617.48,159.43 L620.40,157.80 L623.35,156.17 L626.32,154.55 L629.30,152.92 L632.31,151.30 L635.34,149.67 L638.39,148.04 L641.46,146.42 L644.55,144.79 L647.66,143.17 L650.79,141.54 L653.94,139.91 L657.10,138.29 L660.29,136.66 L663.49,135.04 L666.71,133.41 L669.95,131.78 L673.21,130.16 L676.49,128.53 L679.78,126.91 L683.09,125.28 L686.42,123.65 L689.76,122.03 L693.12,120.40 L696.49,118.78 L699.88,117.15 L703.29,115.52 L706.71,113.90 L710.15,112.27 L713.60,110.65 L717.06,109.02 L720.54,107.39 L724.03,105.77 L727.54,104.14 L731.06,102.52 L734.59,100.89 L738.14,99.26 L741.70,97.64 L745.27,96.01 L748.85,94.39 L752.45,92.76 L756.05,91.13 L759.67,89.51 L763.30,87.88 L766.94,86.26 L770.58,84.63 L774.24,83.00 L777.91,81.38 L781.59,79.75 L785.28,78.13 L788.97,76.50 L792.68,74.87 L796.39,73.25 L800.11,71.62 L803.84,70.00 L807.58,68.37 L811.32,66.74 L815.07,65.12 L818.83,63.49 L822.59,61.87 L826.36,60.24 L830.14,58.61 L833.92,56.99 L837.71,55.36 L841.50,53.74 L845.30,52.11 L849.10,50.48 L852.90,48.86 L856.71,47.23 L860.52,45.61 L864.34,43.98 L868.15,42.35 L871.98,40.73 L875.80,39.10 L879.62,37.48 L883.45,35.85 L887.28,34.22 L891.11,32.60 L894.94,30.97 L898.77,29.35 L902.60,27.72"/><path stroke-dashoffset="1.4" d="M902.60,613.08 L898.34,611.45 L894.09,609.83 L889.83,608.20 L885.58,606.58 L881.32,604.95 L877.07,603.32 L872.82,601.70 L868.57,600.07 L864.33,598.45 L860.09,596.82 L855.85,595.19 L851.61,593.57 L847.38,591.94 L843.15,590.32 L838.93,588.69 L834.71,587.06 L830.50,585.44 L826.29,583.81 L822.09,582.19 L817.89,580.56 L813.71,578.93 L809.52,577.31 L805.35,575.68 L801.18,574.06 L797.02,572.43 L792.87,570.80 L788.73,569.18 L784.59,567.55 L780.46,565.93 L776.35,564.30 L772.24,562.67 L768.14,561.05 L764.06,559.42 L759.98,557.80 L755.92,556.17 L751.86,554.54 L747.82,552.92 L743.79,551.29 L739.77,549.67 L735.76,548.04 L731.77,546.41 L727.79,544.79 L723.82,543.16 L719.87,541.54 L715.93,539.91 L712.00,538.28 L708.09,536.66 L704.19,535.03 L700.31,533.41 L696.45,531.78 L692.60,530.15 L688.76,528.53 L684.94,526.90 L681.14,525.28 L677.36,523.65 L673.59,522.02 L669.84,520.40 L666.11,518.77 L662.40,517.15 L658.70,515.52 L655.02,513.89 L651.36,512.27 L647.73,510.64 L644.11,509.02 L640.51,507.39 L636.93,505.76 L633.37,504.14 L629.83,502.51 L626.31,500.89 L622.81,499.26 L619.33,497.63 L615.88,496.01 L612.45,494.38 L609.03,492.76 L605.65,491.13 L602.28,489.50 L598.94,487.88 L595.62,486.25 L592.32,484.63 L589.05,483.00 L585.80,481.37 L582.57,479.75 L579.37,478.12 L576.20,476.50 L573.05,474.87 L569.92,473.24 L566.82,471.62 L563.75,469.99 L560.70,468.37 L557.67,466.74 L554.68,465.11 L551.71,463.49 L548.76,461.86 L545.85,460.24 L542.96,458.61 L540.09,456.98 L537.26,455.36 L534.45,453.73 L531.67,452.11 L528.92,450.48 L526.20,448.85 L523.51,447.23 L520.84,445.60 L518.21,443.98 L515.60,442.35 L513.03,440.72 L510.48,439.10 L507.96,437.47 L505.47,435.85 L503.02,434.22 L500.59,432.59 L498.20,430.97 L495.83,429.34 L493.50,427.72 L491.19,426.09 L488.92,424.46 L486.68,422.84 L484.47,421.21 L482.30,419.59 L480.15,417.96 L478.04,416.33 L475.96,414.71 L473.91,413.08 L471.90,411.46 L469.92,409.83 L467.97,408.20 L466.05,406.58 L464.17,404.95 L462.32,403.33 L460.50,401.70 L458.72,400.07 L456.97,398.45 L455.26,396.82 L453.58,395.20 L451.93,393.57 L450.32,391.94 L448.74,390.32 L447.20,388.69 L445.69,387.07 L444.22,385.44 L442.78,383.81 L441.38,382.19 L440.01,380.56 L438.67,378.94 L437.38,377.31 L436.11,375.68 L434.89,374.06 L433.70,372.43 L432.54,370.81 L431.42,369.18 L430.34,367.55 L429.29,365.93 L428.28,364.30 L427.30,362.68 L426.36,361.05 L425.46,359.42 L424.59,357.80 L423.76,356.17 L422.97,354.55 L422.21,352.92 L421.49,351.29 L420.81,349.67 L420.16,348.04 L419.55,346.42 L418.97,344.79 L418.44,343.16 L417.94,341.54 L417.47,339.91 L417.05,338.29 L416.66,336.66 L416.30,335.03 L415.99,333.41 L415.71,331.78 L415.47,330.16 L415.26,328.53 L415.10,326.90 L414.97,325.28 L414.87,323.65 L414.82,322.03 L414.80,320.40 L414.82,318.77 L414.87,317.15 L414.97,315.52 L415.10,313.90 L415.26,312.27 L415.47,310.64 L415.71,309.02 L415.99,307.39 L416.30,305.77 L416.66,304.14 L417.05,302.51 L417.47,300.89 L417.94,299.26 L418.44,297.64 L418.97,296.01 L419.55,294.38 L420.16,292.76 L420.81,291.13 L421.49,289.51 L422.21,287.88 L422.97,286.25 L423.76,284.63 L424.59,283.00 L425.46,281.38 L426.36,279.75 L427.30,278.12 L428.28,276.50 L429.29,274.87 L430.34,273.25 L431.42,271.62 L432.54,269.99 L433.70,268.37 L434.89,266.74 L436.11,265.12 L437.38,263.49 L438.67,261.86 L440.01,260.24 L441.38,258.61 L442.78,256.99 L444.22,255.36 L445.69,253.73 L447.20,252.11 L448.74,250.48 L450.32,248.86 L451.93,247.23 L453.58,245.60 L455.26,243.98 L456.97,242.35 L458.72,240.73 L460.50,239.10 L462.32,237.47 L464.17,235.85 L466.05,234.22 L467.97,232.60 L469.92,230.97 L471.90,229.34 L473.91,227.72 L475.96,226.09 L478.04,224.47 L480.15,222.84 L482.30,221.21 L484.47,219.59 L486.68,217.96 L488.92,216.34 L491.19,214.71 L493.50,213.08 L495.83,211.46 L498.20,209.83 L500.59,208.21 L503.02,206.58 L505.47,204.95 L507.96,203.33 L510.48,201.70 L513.03,200.08 L515.60,198.45 L518.21,196.82 L520.84,195.20 L523.51,193.57 L526.20,191.95 L528.92,190.32 L531.67,188.69 L534.45,187.07 L537.26,185.44 L540.09,183.82 L542.96,182.19 L545.85,180.56 L548.76,178.94 L551.71,177.31 L554.68,175.69 L557.67,174.06 L560.70,172.43 L563.75,170.81 L566.82,169.18 L569.92,167.56 L573.05,165.93 L576.20,164.30 L579.37,162.68 L582.57,161.05 L585.80,159.43 L589.05,157.80 L592.32,156.17 L595.62,154.55 L598.94,152.92 L602.28,151.30 L605.65,149.67 L609.03,148.04 L612.45,146.42 L615.88,144.79 L619.33,143.17 L622.81,141.54 L626.31,139.91 L629.83,138.29 L633.37,136.66 L636.93,135.04 L640.51,133.41 L644.11,131.78 L647.73,130.16 L651.36,128.53 L655.02,126.91 L658.70,125.28 L662.40,123.65 L666.11,122.03 L669.84,120.40 L673.59,118.78 L677.36,117.15 L681.14,115.52 L684.94,113.90 L688.76,112.27 L692.60,110.65 L696.45,109.02 L700.31,107.39 L704.19,105.77 L708.09,104.14 L712.00,102.52 L715.93,100.89 L719.87,99.26 L723.82,97.64 L727.79,96.01 L731.77,94.39 L735.76,92.76 L739.77,91.13 L743.79,89.51 L747.82,87.88 L751.86,86.26 L755.92,84.63 L759.98,83.00 L764.06,81.38 L768.14,79.75 L772.24,78.13 L776.35,76.50 L780.46,74.87 L784.59,73.25 L788.73,71.62 L792.87,70.00 L797.02,68.37 L801.18,66.74 L805.35,65.12 L809.52,63.49 L813.71,61.87 L817.89,60.24 L822.09,58.61 L826.29,56.99 L830.50,55.36 L834.71,53.74 L838.93,52.11 L843.15,50.48 L847.38,48.86 L851.61,47.23 L855.85,45.61 L860.09,43.98 L864.33,42.35 L868.57,40.73 L872.82,39.10 L877.07,37.48 L881.32,35.85 L885.58,34.22 L889.83,32.60 L894.09,30.97 L898.34,29.35 L902.60,27.72"/><path stroke-dashoffset="1.4" d="M902.60,613.08 L897.92,611.45 L893.24,609.83 L888.55,608.20 L883.87,606.58 L879.19,604.95 L874.52,603.32 L869.84,601.70 L865.17,600.07 L860.50,598.45 L855.83,596.82 L851.17,595.19 L846.51,593.57 L841.86,591.94 L837.21,590.32 L832.56,588.69 L827.92,587.06 L823.29,585.44 L818.66,583.81 L814.04,582.19 L809.42,580.56 L804.82,578.93 L800.22,577.31 L795.62,575.68 L791.04,574.06 L786.46,572.43 L781.90,570.80 L777.34,569.18 L772.79,567.55 L768.25,565.93 L763.72,564.30 L759.21,562.67 L754.70,561.05 L750.20,559.42 L745.72,557.80 L741.25,556.17 L736.79,554.54 L732.34,552.92 L727.91,551.29 L723.49,549.67 L719.08,548.04 L714.69,546.41 L710.31,544.79 L705.94,543.16 L701.59,541.54 L697.26,539.91 L692.94,538.28 L688.64,536.66 L684.35,535.03 L680.08,533.41 L675.83,531.78 L671.60,530.15 L667.38,528.53 L663.18,526.90 L659.00,525.28 L654.83,523.65 L650.69,522.02 L646.57,520.40 L642.46,518.77 L638.38,517.15 L634.31,515.52 L630.27,513.89 L626.24,512.27 L622.24,510.64 L618.26,509.02 L614.30,507.39 L610.36,505.76 L606.44,504.14 L602.55,502.51 L598.68,500.89 L594.83,499.26 L591.01,497.63 L587.21,496.01 L583.43,494.38 L579.68,492.76 L575.95,491.13 L572.25,489.50 L568.57,487.88 L564.92,486.25 L561.29,484.63 L557.69,483.00 L554.12,481.37 L550.57,479.75 L547.05,478.12 L543.56,476.50 L540.09,474.87 L536.65,473.24 L533.24,471.62 L529.86,469.99 L526.51,468.37 L523.18,466.74 L519.88,465.11 L516.62,463.49 L513.38,461.86 L510.17,460.24 L506.99,458.61 L503.84,456.98 L500.73,455.36 L497.64,453.73 L494.58,452.11 L491.56,450.48 L488.56,448.85 L485.60,447.23 L482.67,445.60 L479.77,443.98 L476.90,442.35 L474.07,440.72 L471.27,439.10 L468.50,437.47 L465.76,435.85 L463.06,434.22 L460.39,432.59 L457.76,430.97 L455.15,429.34 L452.59,427.72 L450.05,426.09 L447.55,424.46 L445.09,422.84 L442.66,421.21 L440.27,419.59 L437.91,417.96 L435.58,416.33 L433.30,414.71 L431.04,413.08 L428.83,411.46 L426.65,409.83 L424.50,408.20 L422.40,406.58 L420.33,404.95 L418.29,403.33 L416.29,401.70 L414.33,400.07 L412.41,398.45 L410.52,396.82 L408.68,395.20 L406.86,393.57 L405.09,391.94 L403.36,390.32 L401.66,388.69 L400.00,387.07 L398.38,385.44 L396.80,383.81 L395.25,382.19 L393.75,380.56 L392.28,378.94 L390.85,377.31 L389.47,375.68 L388.12,374.06 L386.81,372.43 L385.54,370.81 L384.30,369.18 L383.11,367.55 L381.96,365.93 L380.85,364.30 L379.77,362.68 L378.74,361.05 L377.75,359.42 L376.79,357.80 L375.88,356.17 L375.01,354.55 L374.17,352.92 L373.38,351.29 L372.63,349.67 L371.91,348.04 L371.24,346.42 L370.61,344.79 L370.02,343.16 L369.47,341.54 L368.96,339.91 L368.49,338.29 L368.06,336.66 L367.67,335.03 L367.33,333.41 L367.02,331.78 L366.76,330.16 L366.53,328.53 L366.35,326.90 L366.20,325.28 L366.10,323.65 L366.04,322.03 L366.02,320.40 L366.04,318.77 L366.10,317.15 L366.20,315.52 L366.35,313.90 L366.53,312.27 L366.76,310.64 L367.02,309.02 L367.33,307.39 L367.67,305.77 L368.06,304.14 L368.49,302.51 L368.96,300.89 L369.47,299.26 L370.02,297.64 L370.61,296.01 L371.24,294.38 L371.91,292.76 L372.63,291.13 L373.38,289.51 L374.17,287.88 L375.01,286.25 L375.88,284.63 L376.79,283.00 L377.75,281.38 L378.74,279.75 L379.77,278.12 L380.85,276.50 L381.96,274.87 L383.11,273.25 L384.30,271.62 L385.54,269.99 L386.81,268.37 L388.12,266.74 L389.47,265.12 L390.85,263.49 L392.28,261.86 L393.75,260.24 L395.25,258.61 L396.80,256.99 L398.38,255.36 L400.00,253.73 L401.66,252.11 L403.36,250.48 L405.09,248.86 L406.86,247.23 L408.68,245.60 L410.52,243.98 L412.41,242.35 L414.33,240.73 L416.29,239.10 L418.29,237.47 L420.33,235.85 L422.40,234.22 L424.50,232.60 L426.65,230.97 L428.83,229.34 L431.04,227.72 L433.30,226.09 L435.58,224.47 L437.91,222.84 L440.27,221.21 L442.66,219.59 L445.09,217.96 L447.55,216.34 L450.05,214.71 L452.59,213.08 L455.15,211.46 L457.76,209.83 L460.39,208.21 L463.06,206.58 L465.76,204.95 L468.50,203.33 L471.27,201.70 L474.07,200.08 L476.90,198.45 L479.77,196.82 L482.67,195.20 L485.60,193.57 L488.56,191.95 L491.56,190.32 L494.58,188.69 L497.64,187.07 L500.73,185.44 L503.84,183.82 L506.99,182.19 L510.17,180.56 L513.38,178.94 L516.62,177.31 L519.88,175.69 L523.18,174.06 L526.51,172.43 L529.86,170.81 L533.24,169.18 L536.65,167.56 L540.09,165.93 L543.56,164.30 L547.05,162.68 L550.57,161.05 L554.12,159.43 L557.69,157.80 L561.29,156.17 L564.92,154.55 L568.57,152.92 L572.25,151.30 L575.95,149.67 L579.68,148.04 L583.43,146.42 L587.21,144.79 L591.01,143.17 L594.83,141.54 L598.68,139.91 L602.55,138.29 L606.44,136.66 L610.36,135.04 L614.30,133.41 L618.26,131.78 L622.24,130.16 L626.24,128.53 L630.27,126.91 L634.31,125.28 L638.38,123.65 L642.46,122.03 L646.57,120.40 L650.69,118.78 L654.83,117.15 L659.00,115.52 L663.18,113.90 L667.38,112.27 L671.60,110.65 L675.83,109.02 L680.08,107.39 L684.35,105.77 L688.64,104.14 L692.94,102.52 L697.26,100.89 L701.59,99.26 L705.94,97.64 L710.31,96.01 L714.69,94.39 L719.08,92.76 L723.49,91.13 L727.91,89.51 L732.34,87.88 L736.79,86.26 L741.25,84.63 L745.72,83.00 L750.20,81.38 L754.70,79.75 L759.21,78.13 L763.72,76.50 L768.25,74.87 L772.79,73.25 L777.34,71.62 L781.90,70.00 L786.46,68.37 L791.04,66.74 L795.62,65.12 L800.22,63.49 L804.82,61.87 L809.42,60.24 L814.04,58.61 L818.66,56.99 L823.29,55.36 L827.92,53.74 L832.56,52.11 L837.21,50.48 L841.86,48.86 L846.51,47.23 L851.17,45.61 L855.83,43.98 L860.50,42.35 L865.17,40.73 L869.84,39.10 L874.52,37.48 L879.19,35.85 L883.87,34.22 L888.55,32.60 L893.24,30.97 L897.92,29.35 L902.60,27.72"/><path stroke-dashoffset="1.4" d="M902.60,613.08 L897.49,611.45 L892.38,609.83 L887.28,608.20 L882.17,606.58 L877.07,604.95 L871.96,603.32 L866.86,601.70 L861.77,600.07 L856.67,598.45 L851.58,596.82 L846.50,595.19 L841.41,593.57 L836.34,591.94 L831.26,590.32 L826.20,588.69 L821.13,587.06 L816.08,585.44 L811.03,583.81 L805.99,582.19 L800.95,580.56 L795.93,578.93 L790.91,577.31 L785.90,575.68 L780.90,574.06 L775.90,572.43 L770.92,570.80 L765.95,569.18 L760.99,567.55 L756.04,565.93 L751.10,564.30 L746.17,562.67 L741.25,561.05 L736.35,559.42 L731.46,557.80 L726.58,556.17 L721.71,554.54 L716.86,552.92 L712.03,551.29 L707.20,549.67 L702.40,548.04 L697.60,546.41 L692.83,544.79 L688.06,543.16 L683.32,541.54 L678.59,539.91 L673.88,538.28 L669.19,536.66 L664.51,535.03 L659.86,533.41 L655.22,531.78 L650.60,530.15 L646.00,528.53 L641.41,526.90 L636.85,525.28 L632.31,523.65 L627.79,522.02 L623.29,520.40 L618.81,518.77 L614.35,517.15 L609.92,515.52 L605.51,513.89 L601.12,512.27 L596.75,510.64 L592.41,509.02 L588.09,507.39 L583.79,505.76 L579.52,504.14 L575.27,502.51 L571.05,500.89 L566.85,499.26 L562.68,497.63 L558.53,496.01 L554.41,494.38 L550.32,492.76 L546.26,491.13 L542.22,489.50 L538.20,487.88 L534.22,486.25 L530.27,484.63 L526.34,483.00 L522.44,481.37 L518.57,479.75 L514.73,478.12 L510.92,476.50 L507.14,474.87 L503.39,473.24 L499.66,471.62 L495.97,469.99 L492.32,468.37 L488.69,466.74 L485.09,465.11 L481.53,463.49 L477.99,461.86 L474.49,460.24 L471.03,458.61 L467.59,456.98 L464.19,455.36 L460.82,453.73 L457.49,452.11 L454.19,450.48 L450.92,448.85 L447.69,447.23 L444.49,445.60 L441.33,443.98 L438.20,442.35 L435.11,440.72 L432.05,439.10 L429.03,437.47 L426.05,435.85 L423.10,434.22 L420.19,432.59 L417.31,430.97 L414.48,429.34 L411.68,427.72 L408.91,426.09 L406.19,424.46 L403.50,422.84 L400.85,421.21 L398.24,419.59 L395.66,417.96 L393.13,416.33 L390.63,414.71 L388.18,413.08 L385.76,411.46 L383.38,409.83 L381.04,408.20 L378.74,406.58 L376.48,404.95 L374.26,403.33 L372.08,401.70 L369.95,400.07 L367.85,398.45 L365.79,396.82 L363.77,395.20 L361.80,393.57 L359.86,391.94 L357.97,390.32 L356.12,388.69 L354.31,387.07 L352.54,385.44 L350.82,383.81 L349.13,382.19 L347.49,380.56 L345.89,378.94 L344.33,377.31 L342.82,375.68 L341.35,374.06 L339.92,372.43 L338.53,370.81 L337.19,369.18 L335.89,367.55 L334.63,365.93 L333.41,364.30 L332.24,362.68 L331.12,361.05 L330.03,359.42 L328.99,357.80 L327.99,356.17 L327.04,354.55 L326.13,352.92 L325.27,351.29 L324.45,349.67 L323.67,348.04 L322.94,346.42 L322.25,344.79 L321.60,343.16 L321.00,341.54 L320.45,339.91 L319.93,338.29 L319.47,336.66 L319.04,335.03 L318.67,333.41 L318.33,331.78 L318.04,330.16 L317.80,328.53 L317.60,326.90 L317.44,325.28 L317.33,323.65 L317.26,322.03 L317.24,320.40 L317.26,318.77 L317.33,317.15 L317.44,315.52 L317.60,313.90 L317.80,312.27 L318.04,310.64 L318.33,309.02 L318.67,307.39 L319.04,305.77 L319.47,304.14 L319.93,302.51 L320.45,300.89 L321.00,299.26 L321.60,297.64 L322.25,296.01 L322.94,294.38 L323.67,292.76 L324.45,291.13 L325.27,289.51 L326.13,287.88 L327.04,286.25 L327.99,284.63 L328.99,283.00 L330.03,281.38 L331.12,279.75 L332.24,278.12 L333.41,276.50 L334.63,274.87 L335.89,273.25 L337.19,271.62 L338.53,269.99 L339.92,268.37 L341.35,266.74 L342.82,265.12 L344.33,263.49 L345.89,261.86 L347.49,260.24 L349.13,258.61 L350.82,256.99 L352.54,255.36 L354.31,253.73 L356.12,252.11 L357.97,250.48 L359.86,248.86 L361.80,247.23 L363.77,245.60 L365.79,243.98 L367.85,242.35 L369.95,240.73 L372.08,239.10 L374.26,237.47 L376.48,235.85 L378.74,234.22 L381.04,232.60 L383.38,230.97 L385.76,229.34 L388.18,227.72 L390.63,226.09 L393.13,224.47 L395.66,222.84 L398.24,221.21 L400.85,219.59 L403.50,217.96 L406.19,216.34 L408.91,214.71 L411.68,213.08 L414.48,211.46 L417.31,209.83 L420.19,208.21 L423.10,206.58 L426.05,204.95 L429.03,203.33 L432.05,201.70 L435.11,200.08 L438.20,198.45 L441.33,196.82 L444.49,195.20 L447.69,193.57 L450.92,191.95 L454.19,190.32 L457.49,188.69 L460.82,187.07 L464.19,185.44 L467.59,183.82 L471.03,182.19 L474.49,180.56 L477.99,178.94 L481.53,177.31 L485.09,175.69 L488.69,174.06 L492.32,172.43 L495.97,170.81 L499.66,169.18 L503.39,167.56 L507.14,165.93 L510.92,164.30 L514.73,162.68 L518.57,161.05 L522.44,159.43 L526.34,157.80 L530.27,156.17 L534.22,154.55 L538.20,152.92 L542.22,151.30 L546.26,149.67 L550.32,148.04 L554.41,146.42 L558.53,144.79 L562.68,143.17 L566.85,141.54 L571.05,139.91 L575.27,138.29 L579.52,136.66 L583.79,135.04 L588.09,133.41 L592.41,131.78 L596.75,130.16 L601.12,128.53 L605.51,126.91 L609.92,125.28 L614.35,123.65 L618.81,122.03 L623.29,120.40 L627.79,118.78 L632.31,117.15 L636.85,115.52 L641.41,113.90 L646.00,112.27 L650.60,110.65 L655.22,109.02 L659.86,107.39 L664.51,105.77 L669.19,104.14 L673.88,102.52 L678.59,100.89 L683.32,99.26 L688.06,97.64 L692.83,96.01 L697.60,94.39 L702.40,92.76 L707.20,91.13 L712.03,89.51 L716.86,87.88 L721.71,86.26 L726.58,84.63 L731.46,83.00 L736.35,81.38 L741.25,79.75 L746.17,78.13 L751.10,76.50 L756.04,74.87 L760.99,73.25 L765.95,71.62 L770.92,70.00 L775.90,68.37 L780.90,66.74 L785.90,65.12 L790.91,63.49 L795.93,61.87 L800.95,60.24 L805.99,58.61 L811.03,56.99 L816.08,55.36 L821.13,53.74 L826.20,52.11 L831.26,50.48 L836.34,48.86 L841.41,47.23 L846.50,45.61 L851.58,43.98 L856.67,42.35 L861.77,40.73 L866.86,39.10 L871.96,37.48 L877.07,35.85 L882.17,34.22 L887.28,32.60 L892.38,30.97 L897.49,29.35 L902.60,27.72"/><path d="M902,564.00 L751.10,564.00M902,564.00 L1054.10,564.00"/><path d="M902,516.00 L609.92,516.00M902,516.00 L1195.28,516.00"/><path d="M902,467.00 L488.69,467.00M902,467.00 L1316.51,467.00"/><path d="M902,418.00 L395.66,418.00M902,418.00 L1409.54,418.00"/><path d="M902,369.00 L337.19,369.00M902,369.00 L1468.01,369.00"/><path d="M902,320.00 L317.24,320.00M902,320.00 L1487.96,320.00"/><path d="M902,272.00 L337.19,272.00M902,272.00 L1468.01,272.00"/><path d="M902,223.00 L395.66,223.00M902,223.00 L1409.54,223.00"/><path d="M902,174.00 L488.69,174.00M902,174.00 L1316.51,174.00"/><path d="M902,125.00 L609.92,125.00M902,125.00 L1195.28,125.00"/><path d="M902,76.00 L751.10,76.00M902,76.00 L1054.10,76.00"/></g><text transform="translate(1472.51,330.00) scale(1.0928,1)" style="font-family:'Liberation Sans',sans-serif" font-size="10.315" fill="#808080">+180</text><circle cx="1502.16" cy="322.40" r="0.85" fill="none" stroke="#808080" stroke-opacity="0.8" stroke-width="0.65"/><text transform="translate(1374.95,330.00) scale(1.0928,1)" style="font-family:'Liberation Sans',sans-serif" font-size="10.315" fill="#808080">+210</text><circle cx="1404.60" cy="322.40" r="0.85" fill="none" stroke="#808080" stroke-opacity="0.8" stroke-width="0.65"/><text transform="translate(1277.39,330.00) scale(1.0928,1)" style="font-family:'Liberation Sans',sans-serif" font-size="10.315" fill="#808080">+240</text><circle cx="1307.04" cy="322.40" r="0.85" fill="none" stroke="#808080" stroke-opacity="0.8" stroke-width="0.65"/><text transform="translate(1179.83,330.00) scale(1.0928,1)" style="font-family:'Liberation Sans',sans-serif" font-size="10.315" fill="#808080">+270</text><circle cx="1209.48" cy="322.40" r="0.85" fill="none" stroke="#808080" stroke-opacity="0.8" stroke-width="0.65"/><text transform="translate(1082.27,330.00) scale(1.0928,1)" style="font-family:'Liberation Sans',sans-serif" font-size="10.315" fill="#808080">+300</text><circle cx="1111.92" cy="322.40" r="0.85" fill="none" stroke="#808080" stroke-opacity="0.8" stroke-width="0.65"/><text transform="translate(984.71,330.00) scale(1.0928,1)" style="font-family:'Liberation Sans',sans-serif" font-size="10.315" fill="#808080">+330</text><circle cx="1014.36" cy="322.40" r="0.85" fill="none" stroke="#808080" stroke-opacity="0.8" stroke-width="0.65"/><text transform="translate(893.12,330.00) scale(1.1424,1)" style="font-family:'Liberation Sans',sans-serif" font-size="10.315" fill="#808080">+0</text><circle cx="910.80" cy="322.40" r="0.85" fill="none" stroke="#808080" stroke-opacity="0.8" stroke-width="0.65"/><text transform="translate(792.58,330.00) scale(1.1090,1)" style="font-family:'Liberation Sans',sans-serif" font-size="10.315" fill="#808080">+30</text><circle cx="816.24" cy="322.40" r="0.85" fill="none" stroke="#808080" stroke-opacity="0.8" stroke-width="0.65"/><text transform="translate(695.02,330.00) scale(1.1090,1)" style="font-family:'Liberation Sans',sans-serif" font-size="10.315" fill="#808080">+60</text><circle cx="718.68" cy="322.40" r="0.85" fill="none" stroke="#808080" stroke-opacity="0.8" stroke-width="0.65"/><text transform="translate(597.46,330.00) scale(1.1090,1)" style="font-family:'Liberation Sans',sans-serif" font-size="10.315" fill="#808080">+90</text><circle cx="621.12" cy="322.40" r="0.85" fill="none" stroke="#808080" stroke-opacity="0.8" stroke-width="0.65"/><text transform="translate(496.91,330.00) scale(1.0928,1)" style="font-family:'Liberation Sans',sans-serif" font-size="10.315" fill="#808080">+120</text><circle cx="526.56" cy="322.40" r="0.85" fill="none" stroke="#808080" stroke-opacity="0.8" stroke-width="0.65"/><text transform="translate(399.35,330.00) scale(1.0928,1)" style="font-family:'Liberation Sans',sans-serif" font-size="10.315" fill="#808080">+150</text><circle cx="429.00" cy="322.40" r="0.85" fill="none" stroke="#808080" stroke-opacity="0.8" stroke-width="0.65"/><text transform="translate(301.79,330.00) scale(1.0928,1)" style="font-family:'Liberation Sans',sans-serif" font-size="10.315" fill="#808080">+180</text><circle cx="331.44" cy="322.40" r="0.85" fill="none" stroke="#808080" stroke-opacity="0.8" stroke-width="0.65"/><text transform="translate(890.64,25.00) scale(1.1090,1)" style="font-family:'Liberation Sans',sans-serif" font-size="10.315" fill="#808080">+90</text><circle cx="914.30" cy="17.40" r="0.85" fill="none" stroke="#808080" stroke-opacity="0.8" stroke-width="0.65"/><text transform="translate(890.64,123.00) scale(1.1090,1)" style="font-family:'Liberation Sans',sans-serif" font-size="10.315" fill="#808080">+60</text><circle cx="914.30" cy="115.40" r="0.85" fill="none" stroke="#808080" stroke-opacity="0.8" stroke-width="0.65"/><text transform="translate(890.64,221.00) scale(1.1090,1)" style="font-family:'Liberation Sans',sans-serif" font-size="10.315" fill="#808080">+30</text><circle cx="914.30" cy="213.40" r="0.85" fill="none" stroke="#808080" stroke-opacity="0.8" stroke-width="0.65"/><text transform="translate(891.17,428.00) scale(1.0491,1)" style="font-family:'Liberation Sans',sans-serif" font-size="10.315" fill="#808080">−30</text><circle cx="913.80" cy="420.40" r="0.85" fill="none" stroke="#808080" stroke-opacity="0.8" stroke-width="0.65"/><text transform="translate(891.17,526.00) scale(1.0491,1)" style="font-family:'Liberation Sans',sans-serif" font-size="10.315" fill="#808080">−60</text><circle cx="913.80" cy="518.40" r="0.85" fill="none" stroke="#808080" stroke-opacity="0.8" stroke-width="0.65"/><text transform="translate(891.17,623.00) scale(1.0491,1)" style="font-family:'Liberation Sans',sans-serif" font-size="10.315" fill="#808080">−90</text><circle cx="913.80" cy="615.40" r="0.85" fill="none" stroke="#808080" stroke-opacity="0.8" stroke-width="0.65"/><path d="M625.29,268.85 L624.89,269.70 L624.47,270.54 L624.02,271.38 L623.55,272.21 L623.07,273.04 L622.56,273.87 L622.03,274.68 L621.48,275.49 L620.91,276.29 L620.33,277.08 L619.72,277.86 L619.10,278.63 L618.46,279.39 L617.80,280.13 L617.13,280.86 L616.44,281.57 L615.74,282.26 L615.02,282.94 L614.29,283.61 L613.54,284.25 L612.78,284.87 L612.01,285.48 L611.23,286.06 L610.44,286.63 L609.63,287.17 L608.82,287.69 L608.00,288.19 L607.17,288.66 L606.33,289.11 L605.48,289.53 L604.63,289.93 L603.77,290.31 L602.91,290.66 L602.05,290.98 L601.18,291.27 L600.31,291.54 L599.44,291.78 L598.57,291.99 L597.70,292.18 L596.83,292.33 L595.96,292.46 L595.09,292.56 L594.23,292.64 L593.38,292.68 L592.53,292.69 L591.69,292.68 L590.85,292.64 L590.03,292.56 L589.22,292.46 L588.41,292.33 L587.62,292.18 L586.84,291.99 L586.08,291.78 L585.34,291.54 L584.60,291.27 L583.89,290.98 L583.20,290.66 L582.52,290.31 L581.87,289.93 L581.24,289.53 L580.63,289.11 L580.05,288.66 L579.49,288.19 L578.96,287.69 L578.45,287.17 L577.98,286.63 L577.53,286.06 L577.11,285.48 L576.72,284.87 L576.36,284.25 L576.04,283.61 L575.75,282.94 L575.49,282.26 L575.27,281.57 L575.08,280.86 L574.93,280.13 L574.81,279.39 L574.73,278.63 L574.69,277.86 L574.68,277.08 L574.71,276.29 L574.78,275.49 L574.89,274.68 L575.03,273.87 L575.22,273.04 L575.44,272.21 L575.69,271.38 L575.99,270.54 L576.32,269.70 L576.69,268.85 L577.10,268.01 L577.54,267.16 L578.02,266.32 L578.53,265.48 L579.08,264.64 L579.66,263.80 L580.27,262.97 L580.92,262.14 L581.59,261.33 L582.30,260.52 L583.03,259.72 L583.79,258.93 L584.58,258.15 L585.39,257.38 L586.23,256.63 L587.09,255.89 L587.97,255.16 L588.86,254.45 L589.78,253.76 L590.72,253.08 L591.67,252.43 L592.63,251.79 L593.61,251.18 L594.59,250.58 L595.59,250.01 L596.59,249.46 L597.60,248.93 L598.61,248.43 L599.63,247.95 L600.64,247.50 L601.66,247.07 L602.67,246.67 L603.68,246.30 L604.69,245.95 L605.68,245.64 L606.67,245.35 L607.65,245.09 L608.62,244.86 L609.58,244.66 L610.52,244.49 L611.45,244.35 L612.36,244.25 L613.26,244.17 L614.13,244.12 L614.99,244.11 L615.82,244.12 L616.63,244.17 L617.43,244.25 L618.19,244.35 L618.94,244.49 L619.65,244.66 L620.35,244.86 L621.01,245.09 L621.65,245.35 L622.26,245.64 L622.84,245.95 L623.40,246.30 L623.92,246.67 L624.42,247.07 L624.89,247.50 L625.32,247.95 L625.73,248.43 L626.11,248.93 L626.45,249.46 L626.77,250.01 L627.06,250.58 L627.31,251.18 L627.54,251.79 L627.73,252.43 L627.90,253.08 L628.04,253.76 L628.14,254.45 L628.22,255.16 L628.27,255.89 L628.28,256.63 L628.27,257.38 L628.23,258.15 L628.17,258.93 L628.07,259.72 L627.95,260.52 L627.80,261.33 L627.62,262.14 L627.42,262.97 L627.19,263.80 L626.93,264.64 L626.65,265.48 L626.35,266.32 L626.02,267.16 L625.67,268.01 L625.29,268.85Z" fill="none" stroke="#2ab07f" stroke-width="2.1"/><path d="M1000.91,149.13 L999.96,148.43 L999.01,147.73 L998.06,147.03 L997.11,146.34 L996.16,145.64 L995.21,144.95 L994.26,144.26 L993.31,143.57 L992.36,142.88 L991.41,142.20 L990.46,141.51 L989.51,140.83 L988.56,140.15 L987.61,139.47 L986.66,138.80 L985.71,138.12 L984.76,137.45 L983.81,136.78 L982.86,136.11 L981.91,135.44 L980.96,134.78 L980.01,134.12 L979.07,133.46 L978.12,132.80 L977.17,132.15 L976.23,131.49 L975.28,130.84 L974.34,130.20 L973.39,129.55 L972.45,128.91 L971.51,128.27 L970.57,127.63 L969.63,127.00 L968.69,126.37 L967.75,125.74 L966.81,125.11 L965.88,124.49 L964.94,123.87 L964.01,123.25 L963.08,122.64 L962.14,122.03 L961.21,121.42 L960.28,120.82 L959.36,120.22 L958.43,119.62 L957.50,119.02 L956.58,118.43 L955.66,117.85 L954.74,117.27 L953.82,116.69 L952.90,116.11 L951.99,115.54 L951.07,114.97 L950.16,114.41 L949.25,113.85 L948.34,113.30 L947.43,112.75 L946.53,112.20 L945.62,111.66 L944.72,111.13 L943.82,110.59 L942.92,110.07 L942.02,109.55 L941.13,109.03 L940.24,108.52 L939.35,108.01 L938.46,107.51 L937.57,107.01 L936.69,106.52 L935.81,106.04 L934.93,105.56 L934.05,105.09 L933.17,104.62 L932.30,104.16 L931.43,103.70 L930.56,103.25 L929.69,102.81 L928.82,102.37 L927.96,101.94 L927.10,101.52 L926.24,101.10 L925.38,100.70 L924.52,100.29 L923.67,99.90 L922.82,99.51 L921.97,99.13 L921.12,98.76 L920.27,98.39 L919.43,98.04 L918.59,97.69 L917.75,97.35 L916.91,97.01 L916.07,96.69 L915.23,96.37 L914.40,96.06 L913.56,95.76 L912.73,95.47 L911.90,95.19 L911.07,94.92 L910.24,94.65 L909.41,94.40 L908.59,94.15 L907.76,93.92 L906.94,93.69 L906.11,93.47 L905.29,93.26 L904.46,93.07 L903.64,92.88 L902.82,92.70 L901.99,92.53 L901.17,92.37 L900.34,92.22 L899.52,92.09 L898.70,91.96 L897.87,91.84 L897.04,91.74 L896.22,91.64 L895.39,91.55 L894.56,91.48 L893.73,91.41 L892.90,91.36 L892.07,91.32 L891.23,91.28 L890.39,91.26 L889.56,91.25 L888.72,91.25 L887.87,91.26 L887.03,91.28 L886.18,91.31 L885.33,91.35 L884.48,91.41 L883.62,91.47 L882.76,91.54 L881.90,91.63 L881.03,91.72 L880.16,91.83 L879.29,91.94 L878.41,92.07 L877.53,92.21 L876.65,92.35 L875.76,92.51 L874.87,92.68 L873.98,92.85 L873.08,93.04 L872.17,93.24 L871.26,93.44 L870.35,93.66 L869.43,93.88 L868.51,94.12 L867.59,94.36 L866.65,94.62 L865.72,94.88 L864.78,95.15 L863.83,95.43 L862.89,95.72 L861.93,96.02 L860.97,96.33 L860.01,96.64 L859.04,96.97 L858.07,97.30 L857.09,97.64 L856.10,97.99 L855.12,98.35 L854.12,98.71 L853.13,99.08 L852.12,99.46 L851.12,99.85 L850.11,100.24 L849.09,100.64 L848.07,101.05 L847.04,101.46 L846.01,101.89 L844.98,102.32 L843.94,102.75 L842.89,103.19 L841.84,103.64 L840.79,104.10 L839.74,104.56 L838.67,105.02 L837.61,105.49 L836.54,105.97 L835.46,106.46 L834.39,106.95 L833.31,107.44 L832.22,107.94 L831.13,108.45 L830.04,108.96 L828.94,109.48 L827.84,110.00 L826.73,110.52 L825.63,111.05 L824.52,111.59 L823.40,112.13 L822.28,112.68 L821.16,113.22 L820.04,113.78 L818.91,114.34 L817.78,114.90 L816.65,115.46 L815.51,116.04 L814.37,116.61 L813.23,117.19 L812.09,117.77 L810.94,118.36 L809.79,118.95 L808.64,119.54 L807.48,120.13 L806.33,120.73 L805.17,121.34 L804.01,121.95 L802.84,122.56 L801.68,123.17 L800.51,123.79 L799.34,124.40 L798.17,125.03 L797.00,125.65 L795.83,126.28 L794.65,126.91 L793.47,127.55 L792.30,128.18 L791.12,128.82 L789.94,129.46 L788.75,130.11 L787.57,130.76 L786.39,131.41 L785.20,132.06 L784.01,132.71 L782.83,133.37 L781.64,134.03 L780.45,134.69 L779.26,135.35 L778.07,136.02 L776.88,136.69 L775.69,137.36 L774.49,138.03 L773.30,138.71 L772.11,139.38 L770.92,140.06 L769.72,140.74 L768.53,141.42 L767.34,142.11 L766.14,142.79 L764.95,143.48 L763.75,144.17 L762.56,144.86 L761.37,145.55 L760.18,146.25 L758.98,146.94 L757.79,147.64 L756.60,148.34 L755.41,149.04 L754.22,149.74 L753.03,150.44 L751.84,151.15 L750.65,151.86 L749.46,152.56 L748.27,153.27 L747.09,153.98 L745.90,154.70 L744.71,155.41 L743.53,156.12 L742.35,156.84 L741.17,157.56 L739.99,158.28 L738.81,159.00 L737.63,159.72 L736.45,160.44 L735.27,161.16 L734.10,161.89 L732.93,162.61 L731.76,163.34 L730.59,164.06 L729.42,164.79 L728.25,165.52 L727.09,166.25 L725.92,166.99 L724.76,167.72 L723.60,168.45 L722.44,169.19 L721.29,169.92 L720.13,170.66 L718.98,171.40 L717.83,172.13 L716.68,172.87 L715.53,173.61 L714.39,174.35 L713.24,175.10 L712.10,175.84 L710.97,176.58 L709.83,177.33 L708.70,178.07 L707.57,178.82 L706.44,179.56 L705.31,180.31 L704.19,181.06 L703.07,181.81 L701.95,182.56 L700.83,183.31 L699.72,184.06 L698.60,184.81 L697.50,185.56 L696.39,186.31 L695.29,187.07 L694.19,187.82 L693.09,188.58 L691.99,189.33 L690.90,190.09 L689.81,190.84 L688.73,191.60 L687.64,192.36 L686.56,193.12 L685.49,193.88 L684.41,194.64 L683.34,195.40 L682.28,196.16 L681.21,196.92 L680.15,197.68 L679.09,198.44 L678.04,199.21 L676.99,199.97 L675.94,200.73 L674.89,201.50 L673.85,202.26 L672.81,203.03 L671.78,203.79 L670.75,204.56 L669.72,205.33 L668.70,206.09 L667.68,206.86 L666.66,207.63 L665.65,208.40 L664.64,209.17 L663.63,209.94 L662.63,210.71 L661.63,211.48 L660.64,212.25 L659.64,213.02 L658.66,213.79 L657.67,214.56 L656.69,215.33 L655.72,216.11 L654.75,216.88 L653.78,217.65 L652.82,218.43 L651.86,219.20 L650.90,219.97 L649.95,220.75 L649.00,221.52 L648.06,222.30 L647.12,223.07 L646.19,223.85 L645.26,224.63 L644.33,225.40 L643.41,226.18 L642.49,226.96 L641.58,227.74 L640.67,228.51 L639.76,229.29 L638.86,230.07 L637.97,230.85 L637.07,231.63 L636.19,232.41 L635.30,233.19 L634.43,233.97 L633.55,234.75 L632.68,235.53 L631.82,236.31 L630.96,237.09 L630.10,237.87 L629.25,238.65 L628.41,239.43 L627.56,240.21 L626.73,241.00 L625.90,241.78 L625.07,242.56 L624.25,243.34 L623.43,244.13 L622.61,244.91 L621.81,245.69 L621.00,246.48 L620.20,247.26 L619.41,248.04 L618.62,248.83 L617.84,249.61 L617.06,250.40 L616.28,251.18 L615.51,251.97 L614.75,252.75 L613.99,253.54 L613.24,254.32 L612.49,255.11 L611.74,255.90 L611.00,256.68 L610.27,257.47 L609.54,258.25 L608.82,259.04 L608.10,259.83 L607.39,260.61 L606.68,261.40 L605.98,262.19" fill="none" stroke="#2ab07f" stroke-width="1.5" stroke-dasharray="1.5 2.0"/><path d="M985.92,138.27 L985.96,138.30 L985.99,138.33 L986.03,138.35 L986.07,138.38 L986.11,138.41 L986.14,138.43 L986.18,138.46 L986.22,138.49 L986.26,138.51 L986.29,138.54 L986.33,138.56 L986.37,138.59 L986.41,138.62 L986.44,138.64 L986.48,138.67 L986.52,138.70 L986.56,138.72 L986.59,138.75 L986.63,138.78 L986.67,138.80 L986.71,138.83 L986.74,138.86 L986.78,138.88 L986.82,138.91 L986.86,138.94 L986.89,138.96 L986.93,138.99 L986.97,139.02 L987.01,139.04 L987.04,139.07 L987.08,139.10 L987.12,139.12 L987.16,139.15 L987.19,139.18 L987.23,139.20 L987.27,139.23 L987.31,139.26 L987.34,139.28 L987.38,139.31 L987.42,139.34 L987.45,139.36 L987.49,139.39 L987.53,139.42 L987.57,139.44 L987.60,139.47 L987.64,139.50 L987.68,139.52 L987.72,139.55 L987.75,139.58 L987.79,139.61 L987.83,139.63 L987.87,139.66 L987.90,139.69 L987.94,139.71 L987.98,139.74 L988.02,139.77 L988.05,139.79 L988.09,139.82 L988.13,139.85 L988.17,139.87 L988.20,139.90 L988.24,139.93 L988.28,139.95 L988.32,139.98 L988.35,140.01 L988.39,140.03 L988.43,140.06 L988.47,140.09 L988.50,140.11 L988.54,140.14 L988.58,140.17 L988.62,140.19 L988.65,140.22 L988.69,140.25 L988.73,140.27 L988.77,140.30 L988.80,140.33 L988.84,140.35 L988.88,140.38 L988.92,140.41 L988.95,140.44 L988.99,140.46 L989.03,140.49 L989.07,140.52 L989.10,140.54 L989.14,140.57 L989.18,140.60 L989.22,140.62 L989.25,140.65 L989.29,140.68 L989.33,140.70 L989.37,140.73 L989.40,140.76 L989.44,140.78 L989.48,140.81 L989.52,140.84 L989.55,140.87 L989.59,140.89 L989.63,140.92 L989.67,140.95 L989.70,140.97 L989.74,141.00 L989.78,141.03 L989.82,141.05 L989.85,141.08 L989.89,141.11 L989.93,141.13 L989.97,141.16 L990.00,141.19 L990.04,141.21 L990.08,141.24 L990.12,141.27 L990.15,141.30 L990.19,141.32 L990.23,141.35 L990.27,141.38 L990.30,141.40 L990.34,141.43 L990.38,141.46 L990.42,141.48 L990.45,141.51 L990.49,141.54 L990.53,141.56 L990.57,141.59 L990.60,141.62 L990.64,141.65 L990.68,141.67 L990.72,141.70 L990.75,141.73 L990.79,141.75 L990.83,141.78 L990.87,141.81 L990.90,141.83 L990.94,141.86 L990.98,141.89 L991.02,141.92 L991.05,141.94 L991.09,141.97 L991.13,142.00 L991.17,142.02 L991.20,142.05 L991.24,142.08 L991.28,142.10 L991.32,142.13 L991.35,142.16 L991.39,142.19 L991.43,142.21 L991.47,142.24 L991.50,142.27 L991.54,142.29 L991.58,142.32 L991.62,142.35 L991.65,142.37 L991.69,142.40 L991.73,142.43 L991.77,142.46 L991.80,142.48 L991.84,142.51 L991.88,142.54 L991.92,142.56 L991.95,142.59 L991.99,142.62 L992.03,142.64 L992.07,142.67 L992.10,142.70 L992.14,142.73 L992.18,142.75 L992.22,142.78 L992.25,142.81 L992.29,142.83 L992.33,142.86 L992.37,142.89 L992.40,142.92 L992.44,142.94 L992.48,142.97 L992.52,143.00 L992.55,143.02 L992.59,143.05 L992.63,143.08 L992.67,143.11 L992.70,143.13 L992.74,143.16 L992.78,143.19 L992.82,143.21 L992.85,143.24 L992.89,143.27 L992.93,143.30 L992.97,143.32 L993.00,143.35 L993.04,143.38 L993.08,143.40 L993.12,143.43 L993.15,143.46 L993.19,143.49 L993.23,143.51 L993.27,143.54 L993.30,143.57 L993.34,143.59 L993.38,143.62 L993.42,143.65 L993.45,143.68 L993.49,143.70 L993.53,143.73 L993.57,143.76 L993.60,143.78 L993.64,143.81 L993.68,143.84 L993.72,143.87 L993.75,143.89 L993.79,143.92 L993.83,143.95 L993.87,143.97 L993.90,144.00 L993.94,144.03 L993.98,144.06 L994.02,144.08 L994.05,144.11 L994.09,144.14 L994.13,144.16 L994.17,144.19 L994.20,144.22 L994.24,144.25 L994.28,144.27 L994.31,144.30 L994.35,144.33 L994.39,144.36 L994.43,144.38 L994.46,144.41 L994.50,144.44 L994.54,144.46 L994.58,144.49 L994.61,144.52 L994.65,144.55 L994.69,144.57 L994.73,144.60 L994.76,144.63 L994.80,144.66 L994.84,144.68 L994.88,144.71 L994.91,144.74 L994.95,144.76 L994.99,144.79 L995.03,144.82 L995.06,144.85 L995.10,144.87 L995.14,144.90 L995.18,144.93 L995.21,144.96 L995.25,144.98 L995.29,145.01 L995.33,145.04 L995.36,145.06 L995.40,145.09 L995.44,145.12 L995.48,145.15 L995.51,145.17 L995.55,145.20 L995.59,145.23 L995.63,145.26 L995.66,145.28 L995.70,145.31 L995.74,145.34 L995.78,145.36 L995.81,145.39 L995.85,145.42 L995.89,145.45 L995.93,145.47 L995.96,145.50 L996.00,145.53 L996.04,145.56 L996.08,145.58 L996.11,145.61 L996.15,145.64 L996.19,145.67 L996.23,145.69 L996.26,145.72 L996.30,145.75 L996.34,145.78 L996.38,145.80 L996.41,145.83 L996.45,145.86 L996.49,145.88 L996.53,145.91 L996.56,145.94 L996.60,145.97 L996.64,145.99 L996.68,146.02 L996.71,146.05 L996.75,146.08 L996.79,146.10 L996.83,146.13 L996.86,146.16 L996.90,146.19 L996.94,146.21 L996.98,146.24 L997.01,146.27 L997.05,146.30 L997.09,146.32 L997.13,146.35 L997.16,146.38 L997.20,146.41 L997.24,146.43 L997.28,146.46 L997.31,146.49 L997.35,146.51 L997.39,146.54 L997.43,146.57 L997.46,146.60 L997.50,146.62 L997.54,146.65 L997.58,146.68 L997.61,146.71 L997.65,146.73 L997.69,146.76 L997.73,146.79 L997.76,146.82 L997.80,146.84 L997.84,146.87 L997.88,146.90 L997.91,146.93 L997.95,146.95 L997.99,146.98 L998.03,147.01 L998.06,147.04 L998.10,147.06 L998.14,147.09 L998.17,147.12 L998.21,147.15 L998.25,147.17 L998.29,147.20 L998.32,147.23 L998.36,147.26 L998.40,147.28 L998.44,147.31 L998.47,147.34 L998.51,147.37 L998.55,147.39 L998.59,147.42 L998.62,147.45 L998.66,147.48 L998.70,147.50 L998.74,147.53 L998.77,147.56 L998.81,147.59 L998.85,147.61 L998.89,147.64 L998.92,147.67 L998.96,147.70 L999.00,147.72 L999.04,147.75 L999.07,147.78 L999.11,147.81 L999.15,147.83 L999.19,147.86 L999.22,147.89 L999.26,147.92 L999.30,147.95 L999.34,147.97 L999.37,148.00 L999.41,148.03 L999.45,148.06 L999.49,148.08 L999.52,148.11 L999.56,148.14 L999.60,148.17 L999.64,148.19 L999.67,148.22 L999.71,148.25 L999.75,148.28 L999.79,148.30 L999.82,148.33 L999.86,148.36 L999.90,148.39 L999.93,148.41 L999.97,148.44 L1000.01,148.47 L1000.05,148.50 L1000.08,148.52 L1000.12,148.55 L1000.16,148.58 L1000.20,148.61 L1000.23,148.64 L1000.27,148.66 L1000.31,148.69 L1000.35,148.72 L1000.38,148.75 L1000.42,148.77 L1000.46,148.80 L1000.50,148.83 L1000.53,148.86 L1000.57,148.88 L1000.61,148.91 L1000.65,148.94 L1000.68,148.97 L1000.72,148.99 L1000.76,149.02 L1000.80,149.05 L1000.83,149.08 L1000.87,149.11 L1000.91,149.13" fill="none" stroke="#2ab07f" stroke-width="1.9"/><path d="M713.09,170.74 L712.76,170.96 L712.43,171.19 L712.10,171.41 L711.78,171.64 L711.45,171.86 L711.12,172.08 L710.79,172.31 L710.46,172.53 L710.14,172.76 L709.81,172.98 L709.48,173.20 L709.16,173.43 L708.83,173.65 L708.51,173.88 L708.18,174.10 L707.85,174.33 L707.53,174.55 L707.20,174.77 L706.88,175.00 L706.55,175.22 L706.23,175.45 L705.91,175.67 L705.58,175.90 L705.26,176.12 L704.94,176.35 L704.61,176.57 L704.29,176.80 L703.97,177.02 L703.64,177.25 L703.32,177.47 L703.00,177.70 L702.68,177.92 L702.36,178.15 L702.04,178.37 L701.72,178.60 L701.40,178.82 L701.07,179.05 L700.75,179.27 L700.43,179.50 L700.12,179.72 L699.80,179.95 L699.48,180.17 L699.16,180.40 L698.84,180.63 L698.52,180.85 L698.20,181.08 L697.89,181.30 L697.57,181.53 L697.25,181.75 L696.93,181.98 L696.62,182.21 L696.30,182.43 L695.98,182.66 L695.67,182.88 L695.35,183.11 L695.04,183.34 L694.72,183.56 L694.41,183.79 L694.09,184.01 L693.78,184.24 L693.46,184.47 L693.15,184.69 L692.84,184.92 L692.52,185.15 L692.21,185.37 L691.90,185.60 L691.59,185.82 L691.27,186.05 L690.96,186.28 L690.65,186.50 L690.34,186.73 L690.03,186.96 L689.72,187.18 L689.41,187.41 L689.10,187.64 L688.79,187.86 L688.48,188.09 L688.17,188.32 L687.86,188.54 L687.55,188.77 L687.24,189.00 L686.93,189.22 L686.62,189.45 L686.32,189.68 L686.01,189.91 L685.70,190.13 L685.40,190.36 L685.09,190.59 L684.78,190.81 L684.48,191.04 L684.17,191.27 L683.87,191.50 L683.56,191.72 L683.26,191.95 L682.95,192.18 L682.65,192.41 L682.34,192.63 L682.04,192.86 L681.74,193.09 L681.43,193.32 L681.13,193.54 L680.83,193.77 L680.53,194.00 L680.23,194.23 L679.92,194.45 L679.62,194.68 L679.32,194.91 L679.02,195.14 L678.72,195.36 L678.42,195.59 L678.12,195.82 L677.82,196.05 L677.52,196.28 L677.23,196.50 L676.93,196.73 L676.63,196.96 L676.33,197.19 L676.03,197.42 L675.74,197.64 L675.44,197.87 L675.14,198.10 L674.85,198.33 L674.55,198.56 L674.26,198.78 L673.96,199.01 L673.67,199.24 L673.37,199.47 L673.08,199.70 L672.78,199.93 L672.49,200.15 L672.20,200.38 L671.90,200.61 L671.61,200.84 L671.32,201.07 L671.03,201.30 L670.74,201.52 L670.44,201.75 L670.15,201.98 L669.86,202.21 L669.57,202.44 L669.28,202.67 L668.99,202.90 L668.70,203.13 L668.41,203.35 L668.13,203.58 L667.84,203.81 L667.55,204.04 L667.26,204.27 L666.97,204.50 L666.69,204.73 L666.40,204.96 L666.11,205.18 L665.83,205.41 L665.54,205.64 L665.26,205.87 L664.97,206.10 L664.69,206.33 L664.40,206.56 L664.12,206.79 L663.83,207.02 L663.55,207.25 L663.27,207.47 L662.99,207.70 L662.70,207.93 L662.42,208.16 L662.14,208.39 L661.86,208.62 L661.58,208.85 L661.30,209.08 L661.02,209.31 L660.74,209.54 L660.46,209.77 L660.18,210.00 L659.90,210.23 L659.62,210.46 L659.34,210.69 L659.06,210.92 L658.79,211.14 L658.51,211.37 L658.23,211.60 L657.96,211.83 L657.68,212.06 L657.40,212.29 L657.13,212.52 L656.85,212.75 L656.58,212.98 L656.31,213.21 L656.03,213.44 L655.76,213.67 L655.48,213.90 L655.21,214.13 L654.94,214.36 L654.67,214.59 L654.40,214.82 L654.12,215.05 L653.85,215.28 L653.58,215.51 L653.31,215.74 L653.04,215.97 L652.77,216.20 L652.50,216.43 L652.23,216.66 L651.97,216.89 L651.70,217.12 L651.43,217.35 L651.16,217.58 L650.90,217.81 L650.63,218.04 L650.36,218.27 L650.10,218.50 L649.83,218.73 L649.57,218.96 L649.30,219.19 L649.04,219.42 L648.77,219.65 L648.51,219.88 L648.25,220.11 L647.98,220.34 L647.72,220.57 L647.46,220.80 L647.20,221.03 L646.93,221.26 L646.67,221.49 L646.41,221.72 L646.15,221.95 L645.89,222.18 L645.63,222.42 L645.37,222.65 L645.11,222.88 L644.86,223.11 L644.60,223.34 L644.34,223.57 L644.08,223.80 L643.83,224.03 L643.57,224.26 L643.31,224.49 L643.06,224.72 L642.80,224.95 L642.55,225.18 L642.29,225.41 L642.04,225.64 L641.78,225.87 L641.53,226.11 L641.28,226.34 L641.03,226.57 L640.77,226.80 L640.52,227.03 L640.27,227.26 L640.02,227.49 L639.77,227.72 L639.52,227.95 L639.27,228.18 L639.02,228.41 L638.77,228.64 L638.52,228.88 L638.27,229.11 L638.02,229.34 L637.78,229.57 L637.53,229.80 L637.28,230.03 L637.04,230.26 L636.79,230.49 L636.54,230.72 L636.30,230.95 L636.05,231.19 L635.81,231.42 L635.57,231.65 L635.32,231.88 L635.08,232.11 L634.84,232.34 L634.59,232.57 L634.35,232.80 L634.11,233.03 L633.87,233.27 L633.63,233.50 L633.39,233.73 L633.15,233.96 L632.91,234.19 L632.67,234.42 L632.43,234.65 L632.19,234.88 L631.95,235.12 L631.72,235.35 L631.48,235.58 L631.24,235.81 L631.01,236.04 L630.77,236.27 L630.54,236.50 L630.30,236.74 L630.07,236.97 L629.83,237.20 L629.60,237.43 L629.36,237.66 L629.13,237.89 L628.90,238.12 L628.67,238.36 L628.43,238.59 L628.20,238.82 L627.97,239.05 L627.74,239.28 L627.51,239.51 L627.28,239.75 L627.05,239.98 L626.82,240.21 L626.60,240.44 L626.37,240.67 L626.14,240.90 L625.91,241.14 L625.69,241.37 L625.46,241.60 L625.23,241.83 L625.01,242.06 L624.78,242.29 L624.56,242.53 L624.33,242.76 L624.11,242.99 L623.89,243.22 L623.66,243.45 L623.44,243.68 L623.22,243.92 L623.00,244.15 L622.78,244.38 L622.56,244.61 L622.33,244.84 L622.11,245.08 L621.89,245.31 L621.68,245.54 L621.46,245.77 L621.24,246.00 L621.02,246.24 L620.80,246.47 L620.59,246.70 L620.37,246.93 L620.15,247.16 L619.94,247.39 L619.72,247.63 L619.51,247.86 L619.29,248.09 L619.08,248.32 L618.87,248.55 L618.65,248.79 L618.44,249.02 L618.23,249.25 L618.02,249.48 L617.80,249.72 L617.59,249.95 L617.38,250.18 L617.17,250.41 L616.96,250.64 L616.75,250.88 L616.55,251.11 L616.34,251.34 L616.13,251.57 L615.92,251.80 L615.71,252.04 L615.51,252.27 L615.30,252.50 L615.10,252.73 L614.89,252.97 L614.69,253.20 L614.48,253.43 L614.28,253.66 L614.07,253.89 L613.87,254.13 L613.67,254.36 L613.47,254.59 L613.27,254.82 L613.06,255.06 L612.86,255.29 L612.66,255.52 L612.46,255.75 L612.26,255.99 L612.06,256.22 L611.87,256.45 L611.67,256.68 L611.47,256.91 L611.27,257.15 L611.08,257.38 L610.88,257.61 L610.68,257.84 L610.49,258.08 L610.29,258.31 L610.10,258.54 L609.90,258.77 L609.71,259.01 L609.52,259.24 L609.32,259.47 L609.13,259.70 L608.94,259.94 L608.75,260.17 L608.56,260.40 L608.37,260.63 L608.18,260.87 L607.99,261.10 L607.80,261.33 L607.61,261.56 L607.42,261.80 L607.23,262.03 L607.05,262.26 L606.86,262.49" fill="none" stroke="#2ab07f" stroke-width="1.5" stroke-dasharray="1.5 2.0"/><line x1="705.9" y1="175.3" x2="712.9" y2="170.6" stroke="#2ab07f" stroke-width="1.9"/><rect x="999.90" y="147.70" width="2.4" height="2.4" fill="#f0704a"/><rect x="711.70" y="168.80" width="2.4" height="2.4" fill="#f0704a"/><path d="M951.7,93.2 Q967,95.5 982.8,100.6" fill="none" stroke="#8e8e8e" stroke-width="1.4"/><line x1="999.9" y1="106" x2="998.7" y2="111.5" stroke="#8e8e8e" stroke-width="1.2"/><path d="M737.2,83.1 Q745,80.6 752.8,79.4" fill="none" stroke="#8e8e8e" stroke-width="1.1"/><path d="M870.52,62.74 L870.49,63.47 L870.45,64.21 L870.41,64.96 L870.35,65.72 L870.29,66.49 L870.22,67.26 L870.15,68.05 L870.07,68.84 L869.98,69.64 L869.90,70.44 L869.80,71.25 L869.71,72.07 L869.61,72.89 L869.51,73.71 L869.40,74.55 L869.29,75.38 L869.18,76.22 L869.07,77.07 L868.96,77.92 L868.84,78.77 L868.72,79.63 L868.60,80.49 L868.48,81.35 L868.36,82.22 L868.24,83.08 L868.12,83.96 L867.99,84.83 L867.87,85.71 L867.74,86.59 L867.62,87.47 L867.49,88.35 L867.36,89.24 L867.23,90.13 L867.11,91.02 L866.98,91.91 L866.85,92.80 L866.72,93.70 L866.59,94.60 L866.46,95.50 L866.34,96.40 L866.21,97.30 L866.08,98.20 L865.95,99.11 L865.83,100.01 L865.70,100.92 L865.57,101.83 L865.44,102.74 L865.32,103.65 L865.19,104.56 L865.07,105.48 L864.94,106.39 L864.82,107.31 L864.69,108.22 L864.57,109.14 L864.45,110.06 L864.32,110.98 L864.20,111.90 L864.08,112.82 L863.96,113.74 L863.84,114.66 L863.72,115.58 L863.60,116.50 L863.48,117.43 L863.37,118.35 L863.25,119.28 L863.13,120.20 L863.02,121.13 L862.90,122.06 L862.79,122.99 L862.68,123.91 L862.56,124.84 L862.45,125.77 L862.34,126.70 L862.23,127.63 L862.12,128.56 L862.02,129.49 L861.91,130.43 L861.80,131.36 L861.70,132.29 L861.59,133.22 L861.49,134.16 L861.39,135.09 L861.28,136.02 L861.18,136.96 L861.08,137.89 L860.98,138.83 L860.89,139.77 L860.79,140.70 L860.69,141.64 L860.60,142.57 L860.50,143.51 L860.41,144.45 L860.32,145.39 L860.23,146.32 L860.14,147.26 L860.05,148.20 L859.96,149.14 L859.87,150.08 L859.78,151.02 L859.70,151.96 L859.61,152.90 L859.53,153.83 L859.45,154.78 L859.37,155.72 L859.29,156.66 L859.21,157.60 L859.13,158.54 L859.05,159.48 L858.98,160.42 L858.90,161.36 L858.83,162.30 L858.75,163.25 L858.68,164.19 L858.61,165.13 L858.54,166.07 L858.47,167.02 L858.41,167.96 L858.34,168.90 L858.27,169.84 L858.21,170.79 L858.15,171.73 L858.08,172.68 L858.02,173.62 L857.96,174.56 L857.91,175.51 L857.85,176.45 L857.79,177.40 L857.74,178.34 L857.68,179.29 L857.63,180.23 L857.58,181.18 L857.53,182.12 L857.48,183.07 L857.43,184.01 L857.38,184.96 L857.33,185.90 L857.29,186.85 L857.24,187.79 L857.20,188.74 L857.16,189.69 L857.12,190.63 L857.08,191.58 L857.04,192.52 L857.00,193.47 L856.97,194.42 L856.93,195.36 L856.90,196.31 L856.87,197.26 L856.84,198.20 L856.81,199.15 L856.78,200.10 L856.75,201.05 L856.72,201.99 L856.70,202.94 L856.67,203.89 L856.65,204.84 L856.63,205.78 L856.61,206.73 L856.59,207.68 L856.57,208.63 L856.55,209.57 L856.54,210.52 L856.52,211.47 L856.51,212.42 L856.49,213.37 L856.48,214.32 L856.47,215.26 L856.46,216.21 L856.46,217.16 L856.45,218.11 L856.44,219.06 L856.44,220.01 L856.44,220.95 L856.43,221.90 L856.43,222.85 L856.43,223.80 L856.44,224.75 L856.44,225.70 L856.44,226.65 L856.45,227.60 L856.45,228.55 L856.46,229.50 L856.47,230.45 L856.48,231.39 L856.49,232.34 L856.50,233.29 L856.52,234.24 L856.53,235.19 L856.55,236.14 L856.57,237.09 L856.58,238.04 L856.60,238.99 L856.63,239.94 L856.65,240.89 L856.67,241.84 L856.69,242.79 L856.72,243.74 L856.75,244.69 L856.77,245.64 L856.80,246.59 L856.83,247.54 L856.87,248.49 L856.90,249.44 L856.93,250.39 L856.97,251.34 L857.00,252.29 L857.04,253.24 L857.08,254.19 L857.12,255.14 L857.16,256.09 L857.20,257.04 L857.25,257.99 L857.29,258.94 L857.34,259.89 L857.38,260.84 L857.43,261.79 L857.48,262.74 L857.53,263.70 L857.58,264.65 L857.63,265.60 L857.69,266.55 L857.74,267.50 L857.80,268.45 L857.86,269.40 L857.91,270.35 L857.97,271.30 L858.03,272.25 L858.10,273.20 L858.16,274.15 L858.22,275.10 L858.29,276.05 L858.36,277.01 L858.42,277.96 L858.49,278.91 L858.56,279.86 L858.63,280.81 L858.71,281.76 L858.78,282.71 L858.85,283.66 L858.93,284.61 L859.01,285.56 L859.09,286.52 L859.16,287.47 L859.24,288.42 L859.33,289.37 L859.41,290.32 L859.49,291.27 L859.58,292.22 L859.66,293.17 L859.75,294.12 L859.84,295.08 L859.93,296.03 L860.02,296.98 L860.11,297.93 L860.20,298.88 L860.30,299.83 L860.39,300.78 L860.49,301.73 L860.58,302.68 L860.68,303.64 L860.78,304.59 L860.88,305.54 L860.98,306.49 L861.08,307.44 L861.19,308.39 L861.29,309.34 L861.40,310.29 L861.51,311.25 L861.61,312.20 L861.72,313.15 L861.83,314.10 L861.94,315.05 L862.06,316.00 L862.17,316.95 L862.28,317.90 L862.40,318.86 L862.51,319.81 L862.63,320.76 L862.75,321.71 L862.87,322.66 L862.99,323.61 L863.11,324.56 L863.23,325.52 L863.36,326.47 L863.48,327.42 L863.61,328.37 L863.73,329.32 L863.86,330.27 L863.99,331.22 L864.12,332.17 L864.25,333.13 L864.38,334.08 L864.51,335.03 L864.65,335.98 L864.78,336.93 L864.92,337.88 L865.06,338.83 L865.19,339.78 L865.33,340.74 L865.47,341.69 L865.61,342.64 L865.75,343.59 L865.89,344.54 L866.04,345.49 L866.18,346.44 L866.33,347.39 L866.47,348.34 L866.62,349.30 L866.77,350.25 L866.92,351.20 L867.07,352.15 L867.22,353.10 L867.37,354.05 L867.52,355.00 L867.68,355.95 L867.83,356.90 L867.99,357.86 L868.14,358.81 L868.30,359.76 L868.46,360.71 L868.62,361.66 L868.78,362.61 L868.94,363.56 L869.10,364.51 L869.26,365.46 L869.43,366.41 L869.59,367.36 L869.76,368.31 L869.92,369.27 L870.09,370.22 L870.26,371.17 L870.42,372.12 L870.59,373.07 L870.76,374.02 L870.93,374.97 L871.11,375.92 L871.28,376.87 L871.45,377.82 L871.63,378.77 L871.80,379.72 L871.98,380.67 L872.15,381.62 L872.33,382.57 L872.51,383.52 L872.69,384.47 L872.87,385.43 L873.05,386.38 L873.23,387.33 L873.41,388.28 L873.60,389.23 L873.78,390.18 L873.96,391.13 L874.15,392.08 L874.33,393.03 L874.52,393.98 L874.71,394.93 L874.90,395.88 L875.09,396.83 L875.27,397.78 L875.47,398.73 L875.66,399.68 L875.85,400.63 L876.04,401.58 L876.23,402.53 L876.43,403.48 L876.62,404.42 L876.82,405.37 L877.01,406.32 L877.21,407.27 L877.40,408.22 L877.60,409.17 L877.80,410.12 L878.00,411.07 L878.20,412.02 L878.40,412.97 L878.60,413.92 L878.80,414.87 L879.00,415.82 L879.21,416.77 L879.41,417.71 L879.61,418.66 L879.82,419.61 L880.02,420.56 L880.23,421.51 L880.43,422.46 L880.64,423.41 L880.85,424.35 L881.06,425.30 L881.26,426.25 L881.47,427.20 L881.68,428.15 L881.89,429.10 L882.10,430.04 L882.31,430.99 L882.53,431.94 L882.74,432.89 L882.95,433.84 L883.16,434.78 L883.38,435.73 L883.59,436.68" fill="none" stroke="#8a8a8a" stroke-opacity="0.75" stroke-width="0.9" stroke-dasharray="0.9 2.1"/><path d="M984,101 L997,105" fill="none" stroke="#8a8a8a" stroke-opacity="0.7" stroke-width="0.9" stroke-dasharray="0.9 2.1"/><path d="M1006,96.5 Q1040,93.5 1080,103" fill="none" stroke="#8a8a8a" stroke-opacity="0.6" stroke-width="0.9" stroke-dasharray="0.9 2.6"/><path d="M1003,106.5 Q1035,119 1080,134" fill="none" stroke="#8a8a8a" stroke-opacity="0.6" stroke-width="0.9" stroke-dasharray="0.9 2.6"/><circle cx="603.2" cy="269.5" r="1.7" fill="#ff1a1a"/><text transform="translate(592.41,270.60) scale(0.9091,1)" style="font-family:'Liberation Sans',sans-serif" font-size="11.483" fill="#ffffff">ORI</text><text x="316.00" y="29.90" style="font-family:'Liberation Mono',monospace" font-size="13.88" fill="#ffffff" xml:space="preserve">PL0005</text><text x="316.00" y="43.00" style="font-family:'Liberation Mono',monospace" font-size="13.88" fill="#ffffff" xml:space="preserve">Beg: 20251022 21:33:01 (sol = 209.38°)</text><text x="316.00" y="56.90" style="font-family:'Liberation Mono',monospace" font-size="13.88" fill="#ffffff" xml:space="preserve">End: 20251022 22:38:28 (sol = 209.43°)</text><text x="316.00" y="68.98" style="font-family:'Liberation Mono',monospace" font-size="13.88" fill="#ffffff" xml:space="preserve">--------------------------------------</text><text x="316.00" y="82.00" style="font-family:'Liberation Mono',monospace" font-size="13.88" fill="#ffffff" xml:space="preserve">...: 3</text><text x="316.00" y="95.00" style="font-family:'Liberation Mono',monospace" font-size="13.88" fill="#ffffff" xml:space="preserve">ORI: 2</text><text transform="translate(148.70,696.45) rotate(-90) scale(0.8421,1)" style="font-family:'Liberation Sans',sans-serif" font-size="30.814" fill="#555555">APR</text><text transform="translate(294.80,701.14) rotate(-90) scale(0.8463,1)" style="font-family:'Liberation Sans',sans-serif" font-size="30.814" fill="#555555">MAY</text><text transform="translate(435.50,690.49) rotate(-90) scale(0.8187,1)" style="font-family:'Liberation Sans',sans-serif" font-size="30.814" fill="#555555">JUN</text><text transform="translate(576.40,685.48) rotate(-90) scale(0.7956,1)" style="font-family:'Liberation Sans',sans-serif" font-size="30.814" fill="#555555">JUL</text><text transform="translate(723.00,699.05) rotate(-90) scale(0.8430,1)" style="font-family:'Liberation Sans',sans-serif" font-size="30.814" fill="#555555">AUG</text><text transform="translate(871.90,694.14) rotate(-90) scale(0.8152,1)" style="font-family:'Liberation Sans',sans-serif" font-size="30.814" fill="#555555">SEP</text><text transform="translate(1017.00,700.27) rotate(-90) scale(0.8731,1)" style="font-family:'Liberation Sans',sans-serif" font-size="30.814" fill="#555555">OCT</text><text transform="translate(1169.70,704.66) rotate(-90) scale(0.8922,1)" style="font-family:'Liberation Sans',sans-serif" font-size="30.814" fill="#555555">NOV</text><text transform="translate(1319.00,700.55) rotate(-90) scale(0.8491,1)" style="font-family:'Liberation Sans',sans-serif" font-size="30.814" fill="#555555">DEC</text><text transform="translate(1469.00,688.99) rotate(-90) scale(0.8186,1)" style="font-family:'Liberation Sans',sans-serif" font-size="30.814" fill="#555555">JAN</text><text transform="translate(1627.50,696.01) rotate(-90) scale(0.8337,1)" style="font-family:'Liberation Sans',sans-serif" font-size="30.814" fill="#555555">FEB</text><text transform="translate(1765.30,705.04) rotate(-90) scale(0.8866,1)" style="font-family:'Liberation Sans',sans-serif" font-size="30.814" fill="#555555">MAR</text><rect x="106" y="832" width="24" height="4" fill="#bddf26"/><rect x="165" y="832" width="180" height="4" fill="#bddf26"/><rect x="366" y="832" width="259" height="4" fill="#bddf26"/><rect x="636" y="832" width="151" height="4" fill="#bddf26"/><rect x="807" y="832" width="93" height="4" fill="#bddf26"/><rect x="920" y="832" width="53" height="4" fill="#bddf26"/><rect x="984" y="832" width="82" height="4" fill="#bddf26"/><rect x="1082" y="832" width="122" height="4" fill="#bddf26"/><rect x="1244" y="832" width="82" height="4" fill="#bddf26"/><rect x="1337" y="832" width="19" height="4" fill="#bddf26"/><rect x="1381" y="832" width="63" height="4" fill="#bddf26"/><rect x="1459" y="832" width="53" height="4" fill="#bddf26"/><rect x="1523" y="832" width="24" height="4" fill="#bddf26"/><rect x="1724" y="832" width="24" height="4" fill="#bddf26"/><rect x="1758" y="832" width="24" height="4" fill="#bddf26"/><rect x="165" y="816" width="24" height="4" fill="#81d34d"/><rect x="224" y="816" width="63" height="4" fill="#81d34d"/><rect x="312" y="816" width="29" height="4" fill="#81d34d"/><rect x="366" y="816" width="127" height="4" fill="#81d34d"/><rect x="508" y="816" width="146" height="4" fill="#81d34d"/><rect x="704" y="816" width="34" height="4" fill="#81d34d"/><rect x="773" y="816" width="73" height="4" fill="#81d34d"/><rect x="871" y="816" width="117" height="4" fill="#81d34d"/><rect x="1003" y="816" width="14" height="4" fill="#81d34d"/><rect x="1062" y="816" width="151" height="4" fill="#81d34d"/><rect x="1244" y="816" width="23" height="4" fill="#81d34d"/><rect x="1293" y="816" width="23" height="4" fill="#81d34d"/><rect x="1342" y="816" width="23" height="4" fill="#81d34d"/><rect x="1386" y="816" width="43" height="4" fill="#81d34d"/><rect x="1459" y="816" width="24" height="4" fill="#81d34d"/><rect x="1548" y="816" width="23" height="4" fill="#81d34d"/><rect x="165" y="800" width="24" height="4" fill="#4ec36b"/><rect x="258" y="800" width="230" height="4" fill="#4ec36b"/><rect x="508" y="800" width="107" height="4" fill="#4ec36b"/><rect x="626" y="800" width="92" height="4" fill="#4ec36b"/><rect x="729" y="800" width="97" height="4" fill="#4ec36b"/><rect x="949" y="800" width="201" height="4" fill="#4ec36b"/><rect x="1160" y="800" width="88" height="4" fill="#4ec36b"/><rect x="1258" y="800" width="186" height="4" fill="#4ec36b"/><rect x="1459" y="800" width="24" height="4" fill="#4ec36b"/><rect x="1553" y="800" width="23" height="4" fill="#4ec36b"/><rect x="194" y="783" width="24" height="4" fill="#2ab07f"/><rect x="322" y="783" width="185" height="4" fill="#2ab07f"/><rect x="518" y="783" width="24" height="4" fill="#2ab07f"/><rect x="557" y="783" width="127" height="4" fill="#2ab07f"/><rect x="807" y="783" width="24" height="4" fill="#2ab07f"/><rect x="954" y="783" width="19" height="4" fill="#2ab07f"/><rect x="989" y="783" width="136" height="4" fill="#2ab07f"/><rect x="1155" y="783" width="63" height="4" fill="#2ab07f"/><rect x="1244" y="783" width="23" height="4" fill="#2ab07f"/><rect x="1317" y="783" width="24" height="4" fill="#2ab07f"/><rect x="1396" y="783" width="23" height="4" fill="#2ab07f"/><rect x="1464" y="783" width="186" height="4" fill="#2ab07f"/><rect x="341" y="767" width="29" height="4" fill="#1e9b8a"/><rect x="410" y="767" width="38" height="4" fill="#1e9b8a"/><rect x="469" y="767" width="24" height="4" fill="#1e9b8a"/><rect x="528" y="767" width="18" height="4" fill="#1e9b8a"/><rect x="562" y="767" width="29" height="4" fill="#1e9b8a"/><rect x="616" y="767" width="33" height="4" fill="#1e9b8a"/><rect x="959" y="767" width="29" height="4" fill="#1e9b8a"/><rect x="1062" y="767" width="24" height="4" fill="#1e9b8a"/><rect x="1101" y="767" width="24" height="4" fill="#1e9b8a"/><rect x="1160" y="767" width="34" height="4" fill="#1e9b8a"/><rect x="1249" y="767" width="23" height="4" fill="#1e9b8a"/><rect x="1425" y="767" width="87" height="4" fill="#1e9b8a"/><rect x="420" y="750" width="24" height="4" fill="#25858e"/><rect x="533" y="750" width="23" height="4" fill="#25858e"/><rect x="567" y="750" width="24" height="4" fill="#25858e"/><rect x="621" y="750" width="122" height="4" fill="#25858e"/><rect x="969" y="750" width="166" height="4" fill="#25858e"/><rect x="1185" y="750" width="161" height="4" fill="#25858e"/><rect x="1469" y="750" width="24" height="4" fill="#25858e"/><rect x="430" y="734" width="23" height="4" fill="#2d708e"/><rect x="577" y="734" width="156" height="4" fill="#2d708e"/><rect x="994" y="734" width="111" height="4" fill="#2d708e"/><rect x="1116" y="734" width="107" height="4" fill="#2d708e"/><rect x="1263" y="734" width="29" height="4" fill="#2d708e"/><rect x="1489" y="734" width="23" height="4" fill="#2d708e"/><rect x="592" y="718" width="23" height="4" fill="#375a8c"/><rect x="655" y="718" width="117" height="4" fill="#375a8c"/><rect x="1072" y="718" width="171" height="4" fill="#375a8c"/><rect x="1263" y="718" width="24" height="4" fill="#375a8c"/><rect x="596" y="701" width="137" height="4" fill="#424086"/><rect x="1092" y="701" width="28" height="4" fill="#424086"/><rect x="1200" y="701" width="23" height="4" fill="#424086"/><rect x="1273" y="701" width="53" height="4" fill="#424086"/><rect x="1111" y="685" width="24" height="4" fill="#482475"/><line x1="75.0" y1="842.4" x2="75.0" y2="641.5" stroke="#777777" stroke-opacity="0.78" stroke-width="2.08" stroke-dasharray="2.08 3.44"/><line x1="219.1" y1="842.4" x2="219.1" y2="641.5" stroke="#777777" stroke-opacity="0.78" stroke-width="2.08" stroke-dasharray="2.08 3.44"/><line x1="366.0" y1="842.4" x2="366.0" y2="641.5" stroke="#777777" stroke-opacity="0.78" stroke-width="2.08" stroke-dasharray="2.08 3.44"/><line x1="506.2" y1="842.4" x2="506.2" y2="641.5" stroke="#777777" stroke-opacity="0.78" stroke-width="2.08" stroke-dasharray="2.08 3.44"/><line x1="651.0" y1="842.4" x2="651.0" y2="641.5" stroke="#777777" stroke-opacity="0.78" stroke-width="2.08" stroke-dasharray="2.08 3.44"/><line x1="797.0" y1="842.4" x2="797.0" y2="641.5" stroke="#777777" stroke-opacity="0.78" stroke-width="2.08" stroke-dasharray="2.08 3.44"/><line x1="939.7" y1="842.4" x2="939.7" y2="641.5" stroke="#777777" stroke-opacity="0.78" stroke-width="2.08" stroke-dasharray="2.08 3.44"/><line x1="1090.8" y1="842.4" x2="1090.8" y2="641.5" stroke="#777777" stroke-opacity="0.78" stroke-width="2.08" stroke-dasharray="2.08 3.44"/><line x1="1238.9" y1="842.4" x2="1238.9" y2="641.5" stroke="#777777" stroke-opacity="0.78" stroke-width="2.08" stroke-dasharray="2.08 3.44"/><line x1="1394.0" y1="842.4" x2="1394.0" y2="641.5" stroke="#777777" stroke-opacity="0.78" stroke-width="2.08" stroke-dasharray="2.08 3.44"/><line x1="1548.0" y1="842.4" x2="1548.0" y2="641.5" stroke="#777777" stroke-opacity="0.78" stroke-width="2.08" stroke-dasharray="2.08 3.44"/><line x1="1687.0" y1="842.4" x2="1687.0" y2="641.5" stroke="#777777" stroke-opacity="0.78" stroke-width="2.08" stroke-dasharray="2.08 3.44"/><line x1="1047.2" y1="842.5" x2="1047.2" y2="641.5" stroke="#ff0000" stroke-width="2.2" stroke-dasharray="5.14 2.22"/><path d="M114.00,834.00h8M118.00,830.10v7.8" stroke="#ffffff" stroke-width="2"/><path d="M241.00,834.00h8M245.00,830.10v7.8" stroke="#ffffff" stroke-width="2"/><path d="M511.00,834.00h8M515.00,830.10v7.8" stroke="#ffffff" stroke-width="2"/><path d="M707.00,834.00h8M711.00,830.10v7.8" stroke="#ffffff" stroke-width="2"/><path d="M834.00,834.00h8M838.00,830.10v7.8" stroke="#ffffff" stroke-width="2"/><path d="M962.00,834.00h8M966.00,830.10v7.8" stroke="#ffffff" stroke-width="2"/><path d="M987.00,834.00h8M991.00,830.10v7.8" stroke="#ffffff" stroke-width="2"/><path d="M1117.00,834.00h8M1121.00,830.10v7.8" stroke="#ffffff" stroke-width="2"/><path d="M1296.00,834.00h8M1300.00,830.10v7.8" stroke="#ffffff" stroke-width="2"/><path d="M1342.00,834.00h8M1346.00,830.10v7.8" stroke="#ffffff" stroke-width="2"/><path d="M1413.00,834.00h8M1417.00,830.10v7.8" stroke="#ffffff" stroke-width="2"/><path d="M1482.00,834.00h8M1486.00,830.10v7.8" stroke="#ffffff" stroke-width="2"/><path d="M1531.00,834.00h8M1535.00,830.10v7.8" stroke="#ffffff" stroke-width="2"/><path d="M1732.00,834.00h8M1736.00,830.10v7.8" stroke="#ffffff" stroke-width="2"/><path d="M1766.00,834.00h8M1770.00,830.10v7.8" stroke="#ffffff" stroke-width="2"/><path d="M173.00,818.00h8M177.00,814.10v7.8" stroke="#ffffff" stroke-width="2"/><path d="M256.00,818.00h8M260.00,814.10v7.8" stroke="#ffffff" stroke-width="2"/><path d="M324.00,818.00h8M328.00,814.10v7.8" stroke="#ffffff" stroke-width="2"/><path d="M438.00,818.00h8M442.00,814.10v7.8" stroke="#ffffff" stroke-width="2"/><path d="M599.00,818.00h8M603.00,814.10v7.8" stroke="#ffffff" stroke-width="2"/><path d="M717.00,818.00h8M721.00,814.10v7.8" stroke="#ffffff" stroke-width="2"/><path d="M794.00,818.00h8M798.00,814.10v7.8" stroke="#ffffff" stroke-width="2"/><path d="M939.00,818.00h8M943.00,814.10v7.8" stroke="#ffffff" stroke-width="2"/><path d="M1006.00,818.00h8M1010.00,814.10v7.8" stroke="#ffffff" stroke-width="2"/><path d="M1153.00,818.00h8M1157.00,814.10v7.8" stroke="#ffffff" stroke-width="2"/><path d="M1251.00,818.00h8M1255.00,814.10v7.8" stroke="#ffffff" stroke-width="2"/><path d="M1300.00,818.00h8M1304.00,814.10v7.8" stroke="#ffffff" stroke-width="2"/><path d="M1350.00,818.00h8M1354.00,814.10v7.8" stroke="#ffffff" stroke-width="2"/><path d="M1403.00,818.00h8M1407.00,814.10v7.8" stroke="#ffffff" stroke-width="2"/><path d="M1467.00,818.00h8M1471.00,814.10v7.8" stroke="#ffffff" stroke-width="2"/><path d="M1555.00,818.00h8M1559.00,814.10v7.8" stroke="#ffffff" stroke-width="2"/><path d="M175.00,802.00h8M179.00,798.10v7.8" stroke="#ffffff" stroke-width="2"/><path d="M379.00,802.00h8M383.00,798.10v7.8" stroke="#ffffff" stroke-width="2"/><path d="M545.00,802.00h8M549.00,798.10v7.8" stroke="#ffffff" stroke-width="2"/><path d="M683.00,802.00h8M687.00,798.10v7.8" stroke="#ffffff" stroke-width="2"/><path d="M742.00,802.00h8M746.00,798.10v7.8" stroke="#ffffff" stroke-width="2"/><path d="M1075.00,802.00h8M1079.00,798.10v7.8" stroke="#ffffff" stroke-width="2"/><path d="M1217.00,802.00h8M1221.00,798.10v7.8" stroke="#ffffff" stroke-width="2"/><path d="M1305.00,802.00h8M1309.00,798.10v7.8" stroke="#ffffff" stroke-width="2"/><path d="M1467.00,802.00h8M1471.00,798.10v7.8" stroke="#ffffff" stroke-width="2"/><path d="M1560.00,802.00h8M1564.00,798.10v7.8" stroke="#ffffff" stroke-width="2"/><path d="M202.00,785.00h8M206.00,781.10v7.8" stroke="#ffffff" stroke-width="2"/><path d="M401.00,785.00h8M405.00,781.10v7.8" stroke="#ffffff" stroke-width="2"/><path d="M526.00,785.00h8M530.00,781.10v7.8" stroke="#ffffff" stroke-width="2"/><path d="M639.00,785.00h8M643.00,781.10v7.8" stroke="#ffffff" stroke-width="2"/><path d="M815.00,785.00h8M819.00,781.10v7.8" stroke="#ffffff" stroke-width="2"/><path d="M960.00,785.00h8M964.00,781.10v7.8" stroke="#ffffff" stroke-width="2"/><path d="M1041.00,785.00h8M1045.00,781.10v7.8" stroke="#ffffff" stroke-width="2"/><path d="M1188.00,785.00h8M1192.00,781.10v7.8" stroke="#ffffff" stroke-width="2"/><path d="M1251.00,785.00h8M1255.00,781.10v7.8" stroke="#ffffff" stroke-width="2"/><path d="M1325.00,785.00h8M1329.00,781.10v7.8" stroke="#ffffff" stroke-width="2"/><path d="M1403.00,785.00h8M1407.00,781.10v7.8" stroke="#ffffff" stroke-width="2"/><path d="M1546.00,785.00h8M1550.00,781.10v7.8" stroke="#ffffff" stroke-width="2"/><path d="M356.00,769.00h8M360.00,765.10v7.8" stroke="#ffffff" stroke-width="2"/><path d="M427.00,769.00h8M431.00,765.10v7.8" stroke="#ffffff" stroke-width="2"/><path d="M477.00,769.00h8M481.00,765.10v7.8" stroke="#ffffff" stroke-width="2"/><path d="M536.00,769.00h8M540.00,765.10v7.8" stroke="#ffffff" stroke-width="2"/><path d="M571.00,769.00h8M575.00,765.10v7.8" stroke="#ffffff" stroke-width="2"/><path d="M631.00,769.00h8M635.00,765.10v7.8" stroke="#ffffff" stroke-width="2"/><path d="M974.00,769.00h8M978.00,765.10v7.8" stroke="#ffffff" stroke-width="2"/><path d="M1070.00,769.00h8M1074.00,765.10v7.8" stroke="#ffffff" stroke-width="2"/><path d="M1109.00,769.00h8M1113.00,765.10v7.8" stroke="#ffffff" stroke-width="2"/><path d="M1178.00,769.00h8M1182.00,765.10v7.8" stroke="#ffffff" stroke-width="2"/><path d="M1256.00,769.00h8M1260.00,765.10v7.8" stroke="#ffffff" stroke-width="2"/><path d="M1467.00,769.00h8M1471.00,765.10v7.8" stroke="#ffffff" stroke-width="2"/><path d="M428.00,752.00h8M432.00,748.10v7.8" stroke="#ffffff" stroke-width="2"/><path d="M540.00,752.00h8M544.00,748.10v7.8" stroke="#ffffff" stroke-width="2"/><path d="M575.00,752.00h8M579.00,748.10v7.8" stroke="#ffffff" stroke-width="2"/><path d="M704.00,752.00h8M708.00,748.10v7.8" stroke="#ffffff" stroke-width="2"/><path d="M1095.00,752.00h8M1099.00,748.10v7.8" stroke="#ffffff" stroke-width="2"/><path d="M1271.00,752.00h8M1275.00,748.10v7.8" stroke="#ffffff" stroke-width="2"/><path d="M1477.00,752.00h8M1481.00,748.10v7.8" stroke="#ffffff" stroke-width="2"/><path d="M438.00,736.00h8M442.00,732.10v7.8" stroke="#ffffff" stroke-width="2"/><path d="M631.00,736.00h8M635.00,732.10v7.8" stroke="#ffffff" stroke-width="2"/><path d="M1039.00,736.00h8M1043.00,732.10v7.8" stroke="#ffffff" stroke-width="2"/><path d="M1168.00,736.00h8M1172.00,732.10v7.8" stroke="#ffffff" stroke-width="2"/><path d="M1275.00,736.00h8M1279.00,732.10v7.8" stroke="#ffffff" stroke-width="2"/><path d="M1497.00,736.00h8M1501.00,732.10v7.8" stroke="#ffffff" stroke-width="2"/><path d="M599.00,720.00h8M603.00,716.10v7.8" stroke="#ffffff" stroke-width="2"/><path d="M727.00,720.00h8M731.00,716.10v7.8" stroke="#ffffff" stroke-width="2"/><path d="M1188.00,720.00h8M1192.00,716.10v7.8" stroke="#ffffff" stroke-width="2"/><path d="M1271.00,720.00h8M1275.00,716.10v7.8" stroke="#ffffff" stroke-width="2"/><path d="M688.00,703.00h8M692.00,699.10v7.8" stroke="#ffffff" stroke-width="2"/><path d="M1102.00,703.00h8M1106.00,699.10v7.8" stroke="#ffffff" stroke-width="2"/><path d="M1207.00,703.00h8M1211.00,699.10v7.8" stroke="#ffffff" stroke-width="2"/><path d="M1300.00,703.00h8M1304.00,699.10v7.8" stroke="#ffffff" stroke-width="2"/><path d="M1119.00,687.00h8M1123.00,683.10v7.8" stroke="#ffffff" stroke-width="2"/><text transform="translate(107.30,831.00) scale(0.8449,1)" style="font-family:'Liberation Sans',sans-serif" font-size="11.483" fill="#ffffff">KSE</text><text transform="translate(244.70,831.00) scale(0.8518,1)" style="font-family:'Liberation Sans',sans-serif" font-size="11.483" fill="#ffffff">ETA</text><text transform="translate(484.10,831.00) scale(0.9541,1)" style="font-family:'Liberation Sans',sans-serif" font-size="11.483" fill="#ffffff">NZC</text><text transform="translate(698.70,831.00) scale(0.9536,1)" style="font-family:'Liberation Sans',sans-serif" font-size="11.483" fill="#ffffff">NDA</text><text transform="translate(843.74,831.00) scale(0.8743,1)" style="font-family:'Liberation Sans',sans-serif" font-size="11.483" fill="#ffffff">SPE</text><text transform="translate(935.28,831.00) scale(0.9378,1)" style="font-family:'Liberation Sans',sans-serif" font-size="11.483" fill="#ffffff">ARD</text><text transform="translate(1014.51,831.00) scale(0.8416,1)" style="font-family:'Liberation Sans',sans-serif" font-size="11.483" fill="#ffffff">EGE</text><text transform="translate(1132.08,831.00) scale(0.8727,1)" style="font-family:'Liberation Sans',sans-serif" font-size="11.483" fill="#ffffff">NTA</text><text transform="translate(1272.52,831.00) scale(0.9313,1)" style="font-family:'Liberation Sans',sans-serif" font-size="11.483" fill="#ffffff">MON</text><text transform="translate(1332.18,831.00) scale(0.9286,1)" style="font-family:'Liberation Sans',sans-serif" font-size="11.483" fill="#ffffff">URS</text><text transform="translate(1401.28,831.00) scale(0.9085,1)" style="font-family:'Liberation Sans',sans-serif" font-size="11.483" fill="#ffffff">AHY</text><text transform="translate(1472.95,831.00) scale(0.9577,1)" style="font-family:'Liberation Sans',sans-serif" font-size="11.483" fill="#ffffff">GUM</text><text transform="translate(1523.60,831.00) scale(0.9217,1)" style="font-family:'Liberation Sans',sans-serif" font-size="11.483" fill="#ffffff">OHY</text><text transform="translate(1725.26,831.00) scale(0.9274,1)" style="font-family:'Liberation Sans',sans-serif" font-size="11.483" fill="#ffffff">XHE</text><text transform="translate(1761.79,831.00) scale(0.8603,1)" style="font-family:'Liberation Sans',sans-serif" font-size="11.483" fill="#ffffff">EVI</text><text transform="translate(166.28,815.00) scale(0.9039,1)" style="font-family:'Liberation Sans',sans-serif" font-size="11.483" fill="#ffffff">AVB</text><text transform="translate(246.06,815.00) scale(0.7899,1)" style="font-family:'Liberation Sans',sans-serif" font-size="11.483" fill="#ffffff">ELY</text><text transform="translate(312.16,815.00) scale(0.9253,1)" style="font-family:'Liberation Sans',sans-serif" font-size="11.483" fill="#ffffff">CAM</text><text transform="translate(421.44,815.00) scale(0.8833,1)" style="font-family:'Liberation Sans',sans-serif" font-size="11.483" fill="#ffffff">SSG</text><text transform="translate(568.20,815.00) scale(0.8478,1)" style="font-family:'Liberation Sans',sans-serif" font-size="11.483" fill="#ffffff">PCA</text><text transform="translate(709.58,815.00) scale(0.9378,1)" style="font-family:'Liberation Sans',sans-serif" font-size="11.483" fill="#ffffff">AUD</text><text transform="translate(798.28,815.00) scale(0.9372,1)" style="font-family:'Liberation Sans',sans-serif" font-size="11.483" fill="#ffffff">AUR</text><text transform="translate(919.85,815.00) scale(0.9007,1)" style="font-family:'Liberation Sans',sans-serif" font-size="11.483" fill="#ffffff">DSX</text><text transform="translate(999.10,815.00) scale(0.9217,1)" style="font-family:'Liberation Sans',sans-serif" font-size="11.483" fill="#ffffff">OCU</text><text transform="translate(1126.59,815.00) scale(0.9325,1)" style="font-family:'Liberation Sans',sans-serif" font-size="11.483" fill="#ffffff">OER</text><text transform="translate(1243.42,815.00) scale(0.9318,1)" style="font-family:'Liberation Sans',sans-serif" font-size="11.483" fill="#ffffff">DKD</text><text transform="translate(1292.92,815.00) scale(0.9373,1)" style="font-family:'Liberation Sans',sans-serif" font-size="11.483" fill="#ffffff">DSV</text><text transform="translate(1343.88,815.00) scale(0.8493,1)" style="font-family:'Liberation Sans',sans-serif" font-size="11.483" fill="#ffffff">ALY</text><text transform="translate(1399.86,815.00) scale(0.7953,1)" style="font-family:'Liberation Sans',sans-serif" font-size="11.483" fill="#ffffff">JLE</text><text transform="translate(1460.83,815.00) scale(0.9105,1)" style="font-family:'Liberation Sans',sans-serif" font-size="11.483" fill="#ffffff">SCC</text><text transform="translate(1549.30,815.00) scale(0.8529,1)" style="font-family:'Liberation Sans',sans-serif" font-size="11.483" fill="#ffffff">FEV</text><text transform="translate(167.27,799.00) scale(0.7765,1)" style="font-family:'Liberation Sans',sans-serif" font-size="11.483" fill="#ffffff">LYR</text><text transform="translate(362.74,799.00) scale(0.8790,1)" style="font-family:'Liberation Sans',sans-serif" font-size="11.483" fill="#ffffff">JMC</text><text transform="translate(550.56,799.00) scale(0.7947,1)" style="font-family:'Liberation Sans',sans-serif" font-size="11.483" fill="#ffffff">JPE</text><text transform="translate(661.51,799.00) scale(0.8355,1)" style="font-family:'Liberation Sans',sans-serif" font-size="11.483" fill="#ffffff">PAU</text><text transform="translate(764.61,799.00) scale(0.9463,1)" style="font-family:'Liberation Sans',sans-serif" font-size="11.483" fill="#ffffff">NIA</text><text transform="translate(1039.94,799.00) scale(0.8812,1)" style="font-family:'Liberation Sans',sans-serif" font-size="11.483" fill="#ffffff">STA</text><text transform="translate(1194.01,799.00) scale(0.9406,1)" style="font-family:'Liberation Sans',sans-serif" font-size="11.483" fill="#ffffff">NOO</text><text transform="translate(1340.74,799.00) scale(0.9579,1)" style="font-family:'Liberation Sans',sans-serif" font-size="11.483" fill="#ffffff">COM</text><text transform="translate(1458.95,799.00) scale(0.9022,1)" style="font-family:'Liberation Sans',sans-serif" font-size="11.483" fill="#ffffff">NCC</text><text transform="translate(1554.06,799.00) scale(0.8941,1)" style="font-family:'Liberation Sans',sans-serif" font-size="11.483" fill="#ffffff">FED</text><text transform="translate(197.01,783.00) scale(0.9452,1)" style="font-family:'Liberation Sans',sans-serif" font-size="11.483" fill="#ffffff">HVI</text><text transform="translate(403.78,783.00) scale(0.8970,1)" style="font-family:'Liberation Sans',sans-serif" font-size="11.483" fill="#ffffff">ARI</text><text transform="translate(519.22,783.00) scale(0.9179,1)" style="font-family:'Liberation Sans',sans-serif" font-size="11.483" fill="#ffffff">SZC</text><text transform="translate(608.17,783.00) scale(0.9009,1)" style="font-family:'Liberation Sans',sans-serif" font-size="11.483" fill="#ffffff">CAP</text><text transform="translate(807.47,783.00) scale(0.8856,1)" style="font-family:'Liberation Sans',sans-serif" font-size="11.483" fill="#ffffff">NUE</text><text transform="translate(949.78,783.00) scale(0.9475,1)" style="font-family:'Liberation Sans',sans-serif" font-size="11.483" fill="#ffffff">OCT</text><text transform="translate(1050.20,783.00) scale(0.9144,1)" style="font-family:'Liberation Sans',sans-serif" font-size="11.483" fill="#ffffff">ORI</text><text transform="translate(1174.48,783.00) scale(0.9459,1)" style="font-family:'Liberation Sans',sans-serif" font-size="11.483" fill="#ffffff">AMO</text><text transform="translate(1244.37,783.00) scale(0.8835,1)" style="font-family:'Liberation Sans',sans-serif" font-size="11.483" fill="#ffffff">DPC</text><text transform="translate(1320.76,783.00) scale(0.9424,1)" style="font-family:'Liberation Sans',sans-serif" font-size="11.483" fill="#ffffff">XVI</text><text transform="translate(1395.58,783.00) scale(0.9541,1)" style="font-family:'Liberation Sans',sans-serif" font-size="11.483" fill="#ffffff">QUA</text><text transform="translate(1548.68,783.00) scale(0.9359,1)" style="font-family:'Liberation Sans',sans-serif" font-size="11.483" fill="#ffffff">AAN</text><text transform="translate(342.76,766.00) scale(0.9278,1)" style="font-family:'Liberation Sans',sans-serif" font-size="11.483" fill="#ffffff">TAH</text><text transform="translate(422.55,766.00) scale(0.8247,1)" style="font-family:'Liberation Sans',sans-serif" font-size="11.483" fill="#ffffff">JEA</text><text transform="translate(475.16,766.00) scale(0.7719,1)" style="font-family:'Liberation Sans',sans-serif" font-size="11.483" fill="#ffffff">JIP</text><text transform="translate(529.45,766.00) scale(0.7997,1)" style="font-family:'Liberation Sans',sans-serif" font-size="11.483" fill="#ffffff">PPS</text><text transform="translate(568.27,766.00) scale(0.9151,1)" style="font-family:'Liberation Sans',sans-serif" font-size="11.483" fill="#ffffff">ZCS</text><text transform="translate(620.65,766.00) scale(0.9506,1)" style="font-family:'Liberation Sans',sans-serif" font-size="11.483" fill="#ffffff">GDR</text><text transform="translate(959.84,766.00) scale(0.9107,1)" style="font-family:'Liberation Sans',sans-serif" font-size="11.483" fill="#ffffff">DRA</text><text transform="translate(1062.35,766.00) scale(0.9034,1)" style="font-family:'Liberation Sans',sans-serif" font-size="11.483" fill="#ffffff">LUM</text><text transform="translate(1102.49,766.00) scale(0.8565,1)" style="font-family:'Liberation Sans',sans-serif" font-size="11.483" fill="#ffffff">RPU</text><text transform="translate(1166.85,766.00) scale(0.9786,1)" style="font-family:'Liberation Sans',sans-serif" font-size="11.483" fill="#ffffff">THA</text><text transform="translate(1249.17,766.00) scale(0.8815,1)" style="font-family:'Liberation Sans',sans-serif" font-size="11.483" fill="#ffffff">PSU</text><text transform="translate(1460.27,766.00) scale(0.8881,1)" style="font-family:'Liberation Sans',sans-serif" font-size="11.483" fill="#ffffff">XCB</text><text transform="translate(422.76,750.00) scale(0.7923,1)" style="font-family:'Liberation Sans',sans-serif" font-size="11.483" fill="#ffffff">JRC</text><text transform="translate(533.26,750.00) scale(0.9329,1)" style="font-family:'Liberation Sans',sans-serif" font-size="11.483" fill="#ffffff">CAN</text><text transform="translate(568.29,750.00) scale(0.8631,1)" style="font-family:'Liberation Sans',sans-serif" font-size="11.483" fill="#ffffff">FAN</text><text transform="translate(670.78,750.00) scale(0.8674,1)" style="font-family:'Liberation Sans',sans-serif" font-size="11.483" fill="#ffffff">PER</text><text transform="translate(1039.67,750.00) scale(0.9034,1)" style="font-family:'Liberation Sans',sans-serif" font-size="11.483" fill="#ffffff">CTA</text><text transform="translate(1254.46,750.00) scale(0.8878,1)" style="font-family:'Liberation Sans',sans-serif" font-size="11.483" fill="#ffffff">HYD</text><text transform="translate(1469.25,750.00) scale(0.9541,1)" style="font-family:'Liberation Sans',sans-serif" font-size="11.483" fill="#ffffff">XUM</text><text transform="translate(429.97,733.00) scale(0.9098,1)" style="font-family:'Liberation Sans',sans-serif" font-size="11.483" fill="#ffffff">COR</text><text transform="translate(646.92,733.00) scale(0.9191,1)" style="font-family:'Liberation Sans',sans-serif" font-size="11.483" fill="#ffffff">SDA</text><text transform="translate(1040.01,733.00) scale(0.9452,1)" style="font-family:'Liberation Sans',sans-serif" font-size="11.483" fill="#ffffff">LMI</text><text transform="translate(1156.26,733.00) scale(0.8936,1)" style="font-family:'Liberation Sans',sans-serif" font-size="11.483" fill="#ffffff">LEO</text><text transform="translate(1263.65,733.00) scale(0.9012,1)" style="font-family:'Liberation Sans',sans-serif" font-size="11.483" fill="#ffffff">EHY</text><text transform="translate(1489.86,733.00) scale(0.8931,1)" style="font-family:'Liberation Sans',sans-serif" font-size="11.483" fill="#ffffff">ECV</text><text transform="translate(594.54,717.00) scale(0.8726,1)" style="font-family:'Liberation Sans',sans-serif" font-size="11.483" fill="#ffffff">JXA</text><text transform="translate(704.88,717.00) scale(0.8751,1)" style="font-family:'Liberation Sans',sans-serif" font-size="11.483" fill="#ffffff">KCG</text><text transform="translate(1145.68,717.00) scale(0.9378,1)" style="font-family:'Liberation Sans',sans-serif" font-size="11.483" fill="#ffffff">AND</text><text transform="translate(1263.42,717.00) scale(0.9318,1)" style="font-family:'Liberation Sans',sans-serif" font-size="11.483" fill="#ffffff">DAD</text><text transform="translate(658.72,701.00) scale(0.8285,1)" style="font-family:'Liberation Sans',sans-serif" font-size="11.483" fill="#ffffff">ERI</text><text transform="translate(1098.00,701.00) scale(0.9499,1)" style="font-family:'Liberation Sans',sans-serif" font-size="11.483" fill="#ffffff">SLD</text><text transform="translate(1200.22,701.00) scale(0.8903,1)" style="font-family:'Liberation Sans',sans-serif" font-size="11.483" fill="#ffffff">ORS</text><text transform="translate(1287.96,701.00) scale(0.9417,1)" style="font-family:'Liberation Sans',sans-serif" font-size="11.483" fill="#ffffff">GEM</text><text transform="translate(1111.66,684.00) scale(0.8971,1)" style="font-family:'Liberation Sans',sans-serif" font-size="11.483" fill="#ffffff">KUM</text><rect x="20.5" y="641.5" width="1765.00" height="201.00" fill="none" stroke="#ffffff" stroke-width="1.25"/><line x1="20.50" y1="842.5" x2="20.50" y2="847.40" stroke="#ffffff" stroke-width="1.15"/><text transform="translate(16.75,861.80) scale(0.8647,1)" style="font-family:'Liberation Sans',sans-serif" font-size="14.756" fill="#ffffff">0</text><line x1="265.50" y1="842.5" x2="265.50" y2="847.40" stroke="#ffffff" stroke-width="1.15"/><text transform="translate(256.34,861.80) scale(0.9694,1)" style="font-family:'Liberation Sans',sans-serif" font-size="14.756" fill="#ffffff">50</text><line x1="510.50" y1="842.5" x2="510.50" y2="847.40" stroke="#ffffff" stroke-width="1.15"/><text transform="translate(498.03,861.80) scale(1.0106,1)" style="font-family:'Liberation Sans',sans-serif" font-size="14.756" fill="#ffffff">100</text><line x1="755.50" y1="842.5" x2="755.50" y2="847.40" stroke="#ffffff" stroke-width="1.15"/><text transform="translate(743.08,861.80) scale(1.0106,1)" style="font-family:'Liberation Sans',sans-serif" font-size="14.756" fill="#ffffff">150</text><line x1="1000.50" y1="842.5" x2="1000.50" y2="847.40" stroke="#ffffff" stroke-width="1.15"/><text transform="translate(987.56,861.80) scale(1.0159,1)" style="font-family:'Liberation Sans',sans-serif" font-size="14.756" fill="#ffffff">200</text><line x1="1246.50" y1="842.5" x2="1246.50" y2="847.40" stroke="#ffffff" stroke-width="1.15"/><text transform="translate(1233.61,861.80) scale(1.0159,1)" style="font-family:'Liberation Sans',sans-serif" font-size="14.756" fill="#ffffff">250</text><line x1="1491.50" y1="842.5" x2="1491.50" y2="847.40" stroke="#ffffff" stroke-width="1.15"/><text transform="translate(1478.37,861.80) scale(1.0064,1)" style="font-family:'Liberation Sans',sans-serif" font-size="14.756" fill="#ffffff">300</text><line x1="1736.50" y1="842.5" x2="1736.50" y2="847.40" stroke="#ffffff" stroke-width="1.15"/><text transform="translate(1722.92,861.80) scale(1.0064,1)" style="font-family:'Liberation Sans',sans-serif" font-size="14.756" fill="#ffffff">350</text><text transform="translate(828.88,881.50) scale(1.1019,1)" style="font-family:'Liberation Sans',sans-serif" font-size="14.390" fill="#ffffff">Solar longitude (deg)</text></svg></body></html>
